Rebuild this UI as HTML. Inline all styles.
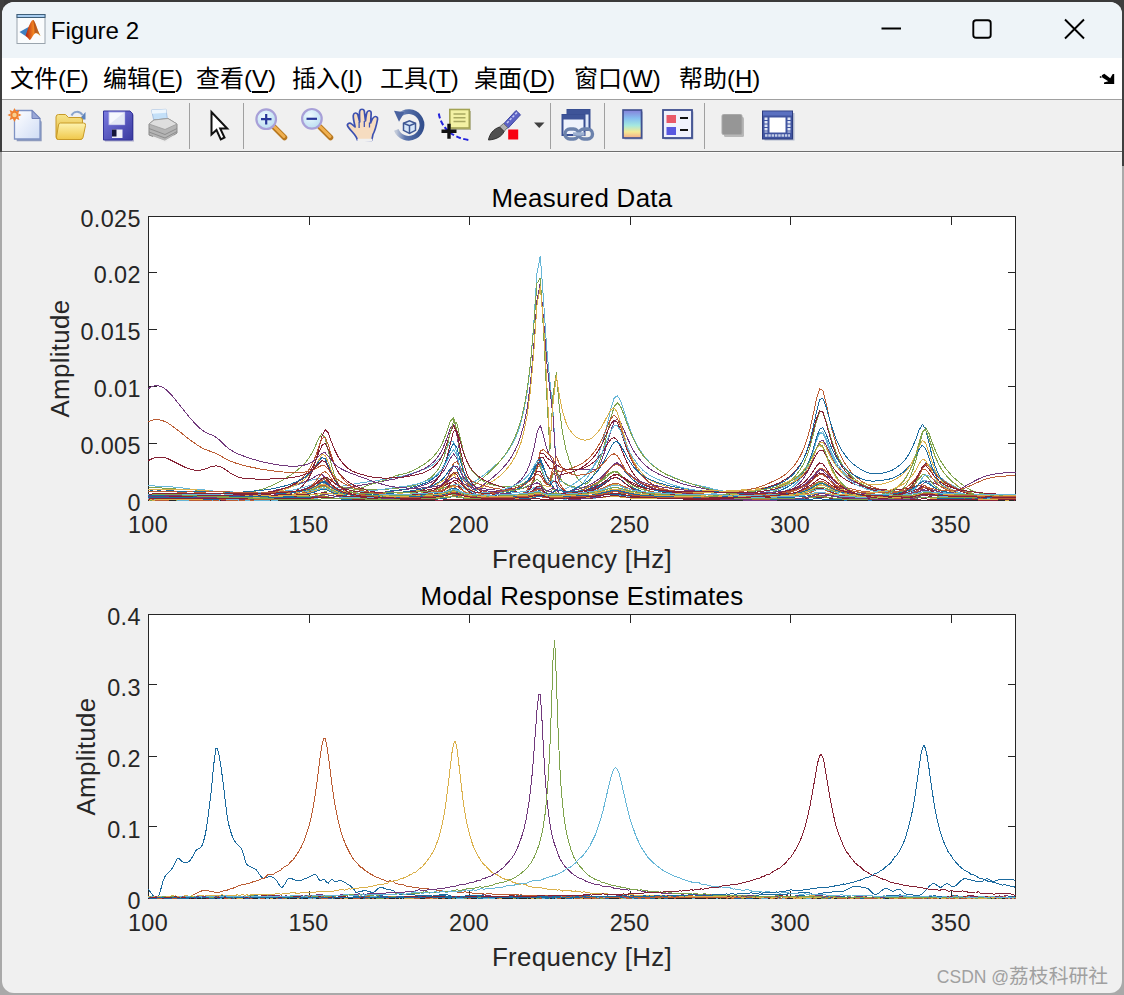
<!DOCTYPE html>
<html lang="zh-CN"><head><meta charset="utf-8"><title>Figure 2</title>
<style>
html,body{margin:0;padding:0}
body{width:1124px;height:995px;overflow:hidden;position:relative;background:#a9a9a9;font-family:"Liberation Sans","Noto Sans CJK SC",sans-serif}
#win{position:absolute;left:2px;top:2px;width:1120px;height:991px;border-radius:12px;background:#f0f0f0;overflow:hidden}
#title{position:absolute;left:0;top:0;width:100%;height:56px;background:#eef4f8}
#title .t{position:absolute;left:48.700px;top:14px;font-size:24.100px;line-height:30px;color:#000}
#menu{position:absolute;left:0;top:56px;width:100%;height:41px;background:#fff;border-bottom:1px solid #a0a0a0}
#menu span{position:absolute;top:5px;font-size:24px;line-height:32px;color:#000;white-space:nowrap}
#menu u{text-decoration:underline;text-underline-offset:4px;text-decoration-thickness:1.5px}
#tb{position:absolute;left:0;top:98px;width:100%;height:51px;background:#f0f0f0;border-bottom:1px solid #6e6e6e;box-shadow:0 1px 0 #fbfbfb}
.sep{position:absolute;top:4px;width:1px;height:44px;background:#a0a0a0}
</style></head><body>
<div style="position:absolute;left:0;top:0;width:1124px;height:20px;background:#3a3a3a"></div><div style="position:absolute;left:0;top:0;width:4px;height:152px;background:#3f3f3f"></div><div style="position:absolute;right:0;top:0;width:4px;height:166px;background:#3f3f3f"></div>
<div id="win">
 <div id="title"><div class="t">Figure 2</div>
 <svg width="1120" height="56" style="position:absolute;left:0;top:0" fill="none" stroke="#000" stroke-width="1.900">
  <path d="M879.500,26.500h19.500"/><rect x="971.300" y="18.300" width="17.400" height="17.400" rx="2.800"/><path d="M1063,17.500l19,19M1082,17.500l-19,19"/>
 </svg>
 </div>
 <div id="menu">
  <span style="left:8px">文件(<u>F</u>)</span><span style="left:101px">编辑(<u>E</u>)</span><span style="left:194px">查看(<u>V</u>)</span><span style="left:290px">插入(<u>I</u>)</span><span style="left:378px">工具(<u>T</u>)</span><span style="left:472px">桌面(<u>D</u>)</span><span style="left:572px">窗口(<u>W</u>)</span><span style="left:677px">帮助(<u>H</u>)</span>
 </div>
 <div id="tb"></div>
</div>
<svg width="1124" height="995" viewBox="0 0 1124 995" style="position:absolute;left:0;top:0">
<style>.tk{font:23.4px "Liberation Sans",sans-serif;fill:#262626;letter-spacing:.35px}.lb{font:25.9px "Liberation Sans",sans-serif;fill:#262626;letter-spacing:.32px}.ti{font:25.9px "Liberation Sans",sans-serif;fill:#000;letter-spacing:.32px}</style>
<rect x="148.5" y="216.5" width="867.0" height="284.0" fill="#fff"/><rect x="148.5" y="614.5" width="867.0" height="284.0" fill="#fff"/>
<g shape-rendering="crispEdges" fill="none"><rect x="148.5" y="216.5" width="867.0" height="284.0" fill="none" stroke="#262626" stroke-width="1"/><path d="M309.5,500.5v-8M309.5,216.5v8M469.5,500.5v-8M469.5,216.5v8M630.5,500.5v-8M630.5,216.5v8M790.5,500.5v-8M790.5,216.5v8M951.5,500.5v-8M951.5,216.5v8M148.5,500.5h8M1015.5,500.5h-8M148.5,443.5h8M1015.5,443.5h-8M148.5,386.5h8M1015.5,386.5h-8M148.5,329.5h8M1015.5,329.5h-8M148.5,272.5h8M1015.5,272.5h-8M148.5,216.5h8M1015.5,216.5h-8" stroke="#262626"/><rect x="148.5" y="614.5" width="867.0" height="284.0" fill="none" stroke="#262626" stroke-width="1"/><path d="M309.5,898.5v-8M309.5,614.5v8M469.5,898.5v-8M469.5,614.5v8M630.5,898.5v-8M630.5,614.5v8M790.5,898.5v-8M790.5,614.5v8M951.5,898.5v-8M951.5,614.5v8M148.5,898.5h8M1015.5,898.5h-8M148.5,826.5h8M1015.5,826.5h-8M148.5,756.5h8M1015.5,756.5h-8M148.5,684.5h8M1015.5,684.5h-8M148.5,614.5h8M1015.5,614.5h-8" stroke="#262626"/></g>
<clipPath id="ct"><rect x="148" y="216" width="868" height="285"/></clipPath><clipPath id="cb"><rect x="148" y="614" width="868" height="285"/></clipPath>
<g clip-path="url(#ct)" fill="none" stroke-width="1" stroke-linejoin="round" shape-rendering="crispEdges">
<path d="M148.5,498 151.7,497.8 154.9,498 158.1,498.1 161.3,498 164.6,498 167.8,497.8 171,497.7 174.2,497.7 177.4,497.3 180.6,497.4 183.8,497.2 187,497.5 190.2,497.6 193.5,497.7 196.7,497.6 199.9,497.8 203.1,497.4 206.3,497.6 209.5,497.6 212.7,497.3 215.9,497.5 219.1,497.5 222.4,497.2 225.6,497.2 228.8,496.9 232,496.7 235.2,496.5 238.4,496.3 241.6,496.1 244.8,496.1 248,495.5 251.3,495 254.5,494.5 257.7,494.4 260.9,493.8 264.1,493 267.3,492.5 270.5,491.9 273.7,491.2 276.9,490.4 280.2,489.7 283.4,488.6 286.6,487.5 289.8,486.8 293,486.2 296.2,485.5 299.4,484.2 302.6,483 305.8,481.9 309.1,480.8 312.3,479.9 315.5,479.2 318.7,478.4 321.9,478.5 325.1,481 328.3,484.9 331.5,487 334.7,487.7 338,487.3 341.2,486.4 344.4,485.7 347.6,485.3 350.8,484.7 354,484 357.2,483.4 360.4,483 363.6,482.6 366.9,482 370.1,481.4 373.3,481.2 376.5,480.7 379.7,480 382.9,479.6 386.1,479.1 389.3,478.4 392.5,477.9 395.8,477.3 399,476.5 402.2,476.2 405.4,475.4 408.6,474.6 411.8,473.5 415,472.6 418.2,471.2 421.4,470.3 424.7,469.2 427.9,467.6 431.1,465.9 434.3,463.7 437.5,460.7 440.7,457.3 443.9,453 447.1,447.5 450.3,441.7 453.6,441.1 456.8,452.5 460,468.2 463.2,479.1 466.4,483.8 469.6,484.5 472.8,482.9 476,480.7 479.2,478.4 482.5,475.9 485.7,473.5 488.9,470.8 492.1,468.3 495.3,465.4 498.5,462.3 501.7,459.1 504.9,455.4 508.1,451 511.4,445.7 514.6,439.7 517.8,432.3 521,422.4 524.2,409 527.4,390.5 530.6,363.2 533.8,323.1 537,273 540.3,256 543.5,299.6 546.7,348.2 549.9,381.2 553.1,412.5 556.3,468.8 559.5,482 562.7,481.9 565.9,483.7 569.2,485.9 572.4,487.4 575.6,487.7 578.8,486.5 582,484.2 585.2,480.4 588.4,475.8 591.6,470.4 594.8,463.9 598.1,456.1 601.3,446.5 604.5,435.3 607.7,422.3 610.9,408.5 614.1,398.3 617.3,395.6 620.5,400.7 623.7,410.1 627,420.6 630.2,430 633.4,437.8 636.6,444.5 639.8,449.9 643,454.4 646.2,458.5 649.4,462.2 652.6,465.1 655.9,467.5 659.1,469.9 662.3,472 665.5,473.7 668.7,475.3 671.9,476.6 675.1,478.1 678.3,479.3 681.5,480.7 684.8,481.9 688,482.9 691.2,483.8 694.4,484.6 697.6,485.1 700.8,485.9 704,486.6 707.2,487.5 710.4,488.2 713.7,489.1 716.9,489.8 720.1,490.6 723.3,491 726.5,491.7 729.7,492.3 732.9,493 736.1,493.7 739.3,494.1 742.6,494.5 745.8,494.9 749,495.5 752.2,496 755.4,496.6 758.6,497.1 761.8,497.6 765,497.4 768.2,497 771.5,496.1 774.7,495.2 777.9,494.2 781.1,493.2 784.3,491.5 787.5,489.6 790.7,488 793.9,485.7 797.1,482.6 800.4,478.8 803.6,474.6 806.8,469 810,460.9 813.2,451.6 816.4,441.1 819.6,432.8 822.8,431.7 826,437.6 829.3,446.5 832.5,454.4 835.7,461 838.9,466.2 842.1,470.4 845.3,473.7 848.5,476.8 851.7,479.4 854.9,481.5 858.2,483.4 861.4,485.2 864.6,486.4 867.8,487.9 871,488.7 874.2,489.3 877.4,490.3 880.6,490.6 883.8,491.1 887.1,491.9 890.3,492.7 893.5,493.5 896.7,494.2 899.9,494.8 903.1,494.6 906.3,493.6 909.5,491.2 912.7,487.2 916,481.9 919.2,474.6 922.4,466.9 925.6,463 928.8,464.2 932,467.8 935.2,471.8 938.4,475.4 941.6,478.5 944.9,480.7 948.1,483 951.3,484.6 954.5,486.3 957.7,488.3 960.9,489.9 964.1,491.3 967.3,492.7 970.5,493.7 973.8,494.3 977,495.3 980.2,495.7 983.4,496.2 986.6,496.3 989.8,496.4 993,496.7 996.2,497.1 999.4,497.2 1002.7,497.3 1005.9,497.5 1009.1,497.7 1012.3,497.2 1015.5,497" stroke="#66b6d7"/>
<path d="M148.5,498.1 151.7,498.3 154.9,498.2 158.1,498 161.3,497.8 164.6,497.8 167.8,497.8 171,498.1 174.2,498.1 177.4,498 180.6,497.9 183.8,497.8 187,497.6 190.2,497.8 193.5,497.6 196.7,497.7 199.9,497.7 203.1,497.3 206.3,497.4 209.5,497.2 212.7,497.4 215.9,497.3 219.1,497.2 222.4,497.4 225.6,497.2 228.8,497 232,496.7 235.2,496.5 238.4,496.1 241.6,495.9 244.8,495.8 248,495.6 251.3,495.5 254.5,495.1 257.7,494.4 260.9,494 264.1,493.5 267.3,492.8 270.5,491.9 273.7,490.8 276.9,489.8 280.2,489.1 283.4,488.7 286.6,487.7 289.8,486.9 293,485.9 296.2,484.8 299.4,483.7 302.6,482.4 305.8,481.2 309.1,479.7 312.3,478.3 315.5,476.3 318.7,474.6 321.9,474.3 325.1,477.7 328.3,483.3 331.5,487.9 334.7,490 338,490.2 341.2,489.6 344.4,488.6 347.6,488 350.8,487.2 354,486.7 357.2,486 360.4,485.3 363.6,484.8 366.9,484.2 370.1,483.7 373.3,482.9 376.5,482.2 379.7,481.8 382.9,481.2 386.1,480.8 389.3,480 392.5,479.4 395.8,478.8 399,477.8 402.2,477 405.4,476 408.6,475 411.8,474 415,472.7 418.2,471.6 421.4,470 424.7,468.7 427.9,466.4 431.1,464 434.3,461.2 437.5,457.4 440.7,452.5 443.9,445.9 447.1,437.8 450.3,428.2 453.6,424.1 456.8,434.9 460,454.1 463.2,469.8 466.4,480.4 469.6,486.7 472.8,489.5 476,489.5 479.2,487.6 482.5,485.4 485.7,483 488.9,480.8 492.1,478.1 495.3,475.3 498.5,472.4 501.7,469.2 504.9,465.7 508.1,461.9 511.4,457 514.6,451.3 517.8,444.4 521,435.3 524.2,423.2 527.4,406.6 530.6,382.2 533.8,346 537,300.2 540.3,282.8 543.5,319.2 546.7,361.3 549.9,389.6 553.1,417.1 556.3,468.1 559.5,479.8 562.7,469.4 565.9,469.5 569.2,469.4 572.4,469.4 575.6,469.1 578.8,469.6 582,469.7 585.2,469.8 588.4,469.7 591.6,469.8 594.8,469.6 598.1,468.8 601.3,461.3 604.5,452.2 607.7,441.7 610.9,430.6 614.1,421.9 617.3,419 620.5,422.3 623.7,429.4 627,437.2 630.2,444.1 633.4,450.4 636.6,455.5 639.8,459.4 643,462.9 646.2,465.9 649.4,468.6 652.6,470.8 655.9,472.5 659.1,474.3 662.3,475.7 665.5,477.1 668.7,478.4 671.9,479.7 675.1,481.1 678.3,482.3 681.5,483.6 684.8,484.4 688,485.2 691.2,486 694.4,486.5 697.6,487.4 700.8,487.9 704,488.5 707.2,489.2 710.4,489.6 713.7,490.4 716.9,490.9 720.1,491.6 723.3,492.1 726.5,492.4 729.7,492.7 732.9,493.5 736.1,494.1 739.3,494.5 742.6,495 745.8,495.6 749,496 752.2,496.5 755.4,496.9 758.6,497.5 761.8,497.6 765,497.7 768.2,497.7 771.5,497.2 774.7,496.4 777.9,495.8 781.1,494.5 784.3,493.1 787.5,491.7 790.7,490 793.9,487.9 797.1,485.2 800.4,482.1 803.6,478.1 806.8,472.9 810,466.6 813.2,458.4 816.4,449.2 819.6,441.6 822.8,440.3 826,445.1 829.3,452 832.5,458.5 835.7,463.7 838.9,468.3 842.1,472 845.3,475.4 848.5,478 851.7,480.3 854.9,482.2 858.2,483.5 861.4,484.8 864.6,486.1 867.8,487 871,488 874.2,488.9 877.4,489.6 880.6,490 883.8,490.2 887.1,490.4 890.3,490.4 893.5,490.7 896.7,491.2 899.9,491.7 903.1,491.9 906.3,492.6 909.5,493.1 912.7,492.9 916,491.5 919.2,488.6 922.4,484.6 925.6,481.7 928.8,481.1 932,482.3 935.2,483.8 938.4,485.1 941.6,486.6 944.9,487.7 948.1,489 951.3,490.3 954.5,491.2 957.7,492.2 960.9,493 964.1,493.9 967.3,494.7 970.5,495.1 973.8,495.8 977,496.3 980.2,496.8 983.4,497.3 986.6,497.6 989.8,497.6 993,497.3 996.2,497.4 999.4,497.6 1002.7,497.6 1005.9,497.8 1009.1,498.1 1012.3,498.3 1015.5,498" stroke="#71397c"/>
<path d="M148.5,496.7 151.7,496.8 154.9,496.9 158.1,496.8 161.3,496.8 164.6,496.7 167.8,496.7 171,496.5 174.2,496.6 177.4,496.3 180.6,496.3 183.8,496.5 187,496.5 190.2,496.4 193.5,496.4 196.7,496 199.9,495.9 203.1,496 206.3,496 209.5,495.5 212.7,495.4 215.9,495.5 219.1,495.4 222.4,495.3 225.6,494.9 228.8,494.7 232,494.5 235.2,494.5 238.4,494.1 241.6,493.7 244.8,493.3 248,492.7 251.3,491.9 254.5,491.5 257.7,490.5 260.9,489.5 264.1,488.6 267.3,487.4 270.5,486.1 273.7,484.6 276.9,482.9 280.2,481.3 283.4,479.6 286.6,477.6 289.8,475.7 293,473.5 296.2,471 299.4,468.4 302.6,465.6 305.8,462.1 309.1,457.8 312.3,452.2 315.5,445.7 318.7,438.6 321.9,433.7 325.1,437.8 328.3,451.1 331.5,465.1 334.7,475.9 338,483.6 341.2,488.3 344.4,491 347.6,491.8 350.8,491.3 354,490.3 357.2,489.3 360.4,488.3 363.6,487.1 366.9,485.7 370.1,484.5 373.3,483.7 376.5,482.7 379.7,481.7 382.9,480.8 386.1,479.5 389.3,478.1 392.5,477.1 395.8,475.7 399,474.9 402.2,474.2 405.4,473.5 408.6,472.4 411.8,471.1 415,469.4 418.2,467.9 421.4,465.9 424.7,463.8 427.9,461.5 431.1,458.7 434.3,455.5 437.5,451.7 440.7,446.6 443.9,439.7 447.1,430.8 450.3,421.3 453.6,417.8 456.8,430.7 460,452.1 463.2,469.2 466.4,479.9 469.6,484.8 472.8,485.6 476,483.8 479.2,481.1 482.5,478.2 485.7,475.5 488.9,472.6 492.1,469.5 495.3,466.2 498.5,462.8 501.7,459 504.9,454.9 508.1,450 511.4,444.6 514.6,438 517.8,430 521,419.8 524.2,406.5 527.4,388.1 530.6,362.3 533.8,325.8 537,283.3 540.3,278 543.5,330.6 546.7,394.8 549.9,450.8 553.1,393.8 556.3,372.9 559.5,409.3 562.7,433.8 565.9,449.6 569.2,460.3 572.4,468.8 575.6,475.2 578.8,480.1 582,483 585.2,484.1 588.4,482.6 591.6,478.5 594.8,472.8 598.1,465.2 601.3,456.1 604.5,444.7 607.7,431.4 610.9,417.6 614.1,406.8 617.3,402.8 620.5,406.3 623.7,414.1 627,423.4 630.2,431.7 633.4,439.1 636.6,445.5 639.8,450.9 643,455.4 646.2,459.2 649.4,462.6 652.6,465.4 655.9,467.9 659.1,470 662.3,472.2 665.5,474 668.7,475.6 671.9,477 675.1,478.2 678.3,479.5 681.5,480.7 684.8,481.6 688,482.8 691.2,483.8 694.4,484.8 697.6,485.7 700.8,486.6 704,487.6 707.2,488.6 710.4,489.3 713.7,490.2 716.9,491 720.1,491.8 723.3,492.5 726.5,493.1 729.7,493.7 732.9,494.6 736.1,495.4 739.3,495.7 742.6,496.2 745.8,496.6 749,496.9 752.2,497 755.4,496.7 758.6,496.5 761.8,495.3 765,494.4 768.2,493.5 771.5,492.6 774.7,491.1 777.9,489.6 781.1,487.6 784.3,485.9 787.5,483.7 790.7,480.8 793.9,477.7 797.1,473.8 800.4,469.4 803.6,463.7 806.8,456.4 810,446.7 813.2,434.8 816.4,421.7 819.6,412 822.8,411.7 826,420.6 829.3,432.2 832.5,442.6 835.7,451.4 838.9,458.5 842.1,464.4 845.3,468.9 848.5,472.8 851.7,476.3 854.9,479.1 858.2,481.5 861.4,483.6 864.6,485.3 867.8,487.1 871,488.7 874.2,490.1 877.4,491.1 880.6,492.4 883.8,493.4 887.1,494.3 890.3,494.9 893.5,494.6 896.7,493.5 899.9,491.8 903.1,488.6 906.3,484.3 909.5,478.5 912.7,470.5 916,459.9 919.2,446.1 922.4,432.9 925.6,427.7 928.8,433 932,442 935.2,450 938.4,457 941.6,462.5 944.9,467.4 948.1,471.3 951.3,475.1 954.5,478.2 957.7,481 960.9,483.5 964.1,486 967.3,488.1 970.5,490 973.8,491.2 977,492.4 980.2,493.3 983.4,493.8 986.6,494.2 989.8,494.6 993,494.9 996.2,495.2 999.4,495.7 1002.7,495.9 1005.9,496.2 1009.1,496.4 1012.3,496.3 1015.5,496.6" stroke="#7ea34c"/>
<path d="M148.5,498.2 151.7,498 154.9,498.2 158.1,498.3 161.3,498.1 164.6,498.2 167.8,498.1 171,498.2 174.2,497.7 177.4,497.6 180.6,497.5 183.8,497.5 187,497.6 190.2,497.6 193.5,497.9 196.7,498.3 199.9,498.1 203.1,498.2 206.3,498.2 209.5,498.2 212.7,498.1 215.9,498 219.1,498 222.4,497.8 225.6,497.7 228.8,497.5 232,497.6 235.2,497.5 238.4,497.4 241.6,497.3 244.8,497 248,496.8 251.3,496.4 254.5,496 257.7,495.6 260.9,495 264.1,494.5 267.3,493.8 270.5,493.4 273.7,492.7 276.9,491.8 280.2,491.1 283.4,490.1 286.6,488.9 289.8,487.8 293,486 296.2,484.9 299.4,482.8 302.6,481 305.8,478.3 309.1,475.1 312.3,470.7 315.5,465.9 318.7,460 321.9,454.6 325.1,455.3 328.3,462.4 331.5,471.4 334.7,478.6 338,483.9 341.2,487.8 344.4,490.8 347.6,493.1 350.8,494.7 354,496.1 357.2,497 360.4,498 363.6,498.1 366.9,498 370.1,497.4 373.3,497.4 376.5,497 379.7,496.5 382.9,496.1 386.1,495.6 389.3,495.1 392.5,494.7 395.8,494.3 399,493.7 402.2,493.1 405.4,492.5 408.6,492 411.8,491.6 415,490.9 418.2,490.3 421.4,489.7 424.7,488.7 427.9,487.8 431.1,486.6 434.3,485.4 437.5,484 440.7,482.2 443.9,480.1 447.1,477.2 450.3,474.6 453.6,474.1 456.8,478.9 460,485.9 463.2,490.8 466.4,492.9 469.6,492.7 472.8,491.6 476,490.1 479.2,488.6 482.5,487 485.7,485.2 488.9,483.6 492.1,481.5 495.3,479.5 498.5,477.1 501.7,474.6 504.9,471.2 508.1,467.4 511.4,463.1 514.6,457.6 517.8,450.9 521,442.5 524.2,430.5 527.4,413.7 530.6,389.1 533.8,351.9 537,305.2 540.3,286.6 543.5,323.8 546.7,381.4 549.9,444.4 553.1,402.7 556.3,375.7 559.5,396.6 562.7,412.2 565.9,422.4 569.2,429.1 572.4,433.6 575.6,436.7 578.8,438.7 582,439.8 585.2,440.2 588.4,439.7 591.6,438.2 594.8,435.4 598.1,431.8 601.3,427.4 604.5,421.6 607.7,415.3 610.9,409.5 614.1,407.8 617.3,412.5 620.5,422.6 623.7,434.2 627,444.8 630.2,453.7 633.4,460.6 636.6,466.4 639.8,470.7 643,474.4 646.2,477.4 649.4,479.5 652.6,481.4 655.9,482.9 659.1,484.1 662.3,485.2 665.5,486.1 668.7,487.3 671.9,488.1 675.1,488.7 678.3,488.9 681.5,489.4 684.8,489.5 688,490 691.2,489.9 694.4,490.4 697.6,490.5 700.8,490.4 704,490.6 707.2,490.5 710.4,490.9 713.7,490.7 716.9,490.8 720.1,491.1 723.3,491 726.5,491 729.7,490.9 732.9,490.8 736.1,490.5 739.3,490.2 742.6,489.8 745.8,489.4 749,489.4 752.2,488.9 755.4,488.7 758.6,488.5 761.8,488 765,487.7 768.2,487.1 771.5,486.4 774.7,485.8 777.9,485.1 781.1,484.2 784.3,483.1 787.5,481.9 790.7,480.4 793.9,478.7 797.1,476.7 800.4,473.9 803.6,470.1 806.8,465.9 810,460.7 813.2,454.4 816.4,448.6 819.6,445.3 822.8,447.8 826,455.6 829.3,464.3 832.5,471.6 835.7,477.3 838.9,481.8 842.1,485.4 845.3,488.1 848.5,490.3 851.7,492.3 854.9,494.1 858.2,495.4 861.4,496.4 864.6,497.4 867.8,497.6 871,497.5 874.2,497.1 877.4,496.3 880.6,495.2 883.8,494.3 887.1,493.2 890.3,491.7 893.5,489.7 896.7,487.3 899.9,484.3 903.1,481 906.3,476.5 909.5,471 912.7,463.8 916,453.7 919.2,442 922.4,431.6 925.6,430.1 928.8,437.6 932,447.8 935.2,457 938.4,464.2 941.6,469.6 944.9,474.1 948.1,477.5 951.3,480.4 954.5,483.3 957.7,485.9 960.9,488.3 964.1,490.2 967.3,491.5 970.5,492.5 973.8,494 977,494.7 980.2,495.1 983.4,495.3 986.6,495.9 989.8,496 993,496.4 996.2,496.5 999.4,496.9 1002.7,497.1 1005.9,496.9 1009.1,496.8 1012.3,497.2 1015.5,497.3" stroke="#dbb14c"/>
<path d="M148.5,498.9 151.7,498.8 154.9,498.8 158.1,498.7 161.3,498.5 164.6,498.4 167.8,498.7 171,498.7 174.2,498.9 177.4,498.8 180.6,499 183.8,499 187,498.9 190.2,499 193.5,498.9 196.7,498.8 199.9,498.9 203.1,499 206.3,499 209.5,498.9 212.7,498.7 215.9,499 219.1,498.4 222.4,498.5 225.6,498.5 228.8,498.3 232,497.9 235.2,498.2 238.4,498.4 241.6,498 244.8,497.8 248,497.6 251.3,497.9 254.5,497.5 257.7,497.3 260.9,496.9 264.1,496.6 267.3,496.3 270.5,495.8 273.7,495.1 276.9,494.6 280.2,494.3 283.4,493.8 286.6,493.3 289.8,492.6 293,492.2 296.2,491.3 299.4,490.5 302.6,489.6 305.8,488.6 309.1,487.2 312.3,485.9 315.5,484 318.7,482.3 321.9,481.3 325.1,483 328.3,487 331.5,491.2 334.7,493.8 338,496.1 341.2,497 344.4,497 347.6,496.9 350.8,496.6 354,496.1 357.2,495.7 360.4,495.2 363.6,495 366.9,494.5 370.1,494 373.3,493.8 376.5,493.4 379.7,492.6 382.9,492.3 386.1,491.8 389.3,491.5 392.5,491.3 395.8,490.8 399,490.6 402.2,489.9 405.4,489.6 408.6,489 411.8,488.5 415,487.7 418.2,487 421.4,485.9 424.7,484.7 427.9,483.7 431.1,482.2 434.3,480.5 437.5,478.2 440.7,474.7 443.9,470.7 447.1,464.9 450.3,458.4 453.6,454 456.8,458.4 460,468.4 463.2,477.7 466.4,484.1 469.6,488.6 472.8,491.7 476,493.9 479.2,495.6 482.5,496.4 485.7,496.5 488.9,495.9 492.1,495.1 495.3,494.2 498.5,493 501.7,491.8 504.9,490.5 508.1,488.9 511.4,487.2 514.6,485 517.8,482.8 521,479.8 524.2,475.6 527.4,470 530.6,461.6 533.8,449.1 537,432.7 540.3,425.1 543.5,435.7 546.7,448.4 549.9,456 553.1,462.2 556.3,483.7 559.5,497.1 562.7,498.1 565.9,496.8 569.2,496.4 572.4,495.8 575.6,495 578.8,494.1 582,493.3 585.2,492.1 588.4,490.4 591.6,488.4 594.8,486.3 598.1,483.7 601.3,480.3 604.5,476.4 607.7,472 610.9,467.5 614.1,463.8 617.3,462.6 620.5,464.8 623.7,468.2 627,472 630.2,475.5 633.4,478.1 636.6,480.7 639.8,482.8 643,484.4 646.2,485.9 649.4,487 652.6,488 655.9,489 659.1,489.6 662.3,490.4 665.5,491.2 668.7,491.6 671.9,492.3 675.1,492.8 678.3,493.1 681.5,493.5 684.8,493.9 688,494.3 691.2,494.8 694.4,495.1 697.6,495 700.8,495.5 704,496 707.2,496.2 710.4,496.4 713.7,496.5 716.9,496.8 720.1,497 723.3,497.1 726.5,497.2 729.7,497.9 732.9,498.3 736.1,498.4 739.3,498.3 742.6,498.9 745.8,498.8 749,498.8 752.2,498.9 755.4,499.2 758.6,499.2 761.8,498.9 765,499 768.2,498.3 771.5,497.9 774.7,497.3 777.9,497.2 781.1,496.6 784.3,495.9 787.5,495.3 790.7,494.4 793.9,493.1 797.1,492 800.4,490.6 803.6,488.3 806.8,485.8 810,482.4 813.2,478.2 816.4,473 819.6,469.7 822.8,469.3 826,472.1 829.3,476 832.5,479.3 835.7,482.5 838.9,484.9 842.1,486.6 845.3,488.1 848.5,489.4 851.7,490.6 854.9,491.6 858.2,492.4 861.4,493.2 864.6,493.6 867.8,494.3 871,494.8 874.2,495.1 877.4,495.3 880.6,495.6 883.8,495.9 887.1,496 890.3,495.9 893.5,496.2 896.7,496.4 899.9,496.7 903.1,497 906.3,496.9 909.5,496.9 912.7,496.1 916,494.8 919.2,492.6 922.4,490 925.6,488.8 928.8,488.9 932,489.9 935.2,490.6 938.4,491.6 941.6,492.4 944.9,493.4 948.1,493.9 951.3,494.5 954.5,495.1 957.7,495.6 960.9,496.3 964.1,496.6 967.3,497.2 970.5,497.5 973.8,497.7 977,497.9 980.2,498.3 983.4,498.1 986.6,498.2 989.8,498.3 993,498.1 996.2,498 999.4,498.2 1002.7,498.7 1005.9,498.9 1009.1,498.8 1012.3,498.9 1015.5,498.8" stroke="#71397c"/>
<path d="M148.5,499.8 151.7,499.9 154.9,499.9 158.1,499.6 161.3,499.9 164.6,499.9 167.8,499.8 171,499.9 174.2,499.9 177.4,499.8 180.6,499.8 183.8,499.8 187,500 190.2,499.9 193.5,499.8 196.7,500 199.9,499.8 203.1,499.7 206.3,500 209.5,500.1 212.7,500.2 215.9,500.2 219.1,499.9 222.4,500.1 225.6,500.1 228.8,500.2 232,500 235.2,499.9 238.4,500.2 241.6,499.9 244.8,500 248,500 251.3,500 254.5,500 257.7,499.9 260.9,499.7 264.1,499.3 267.3,499.1 270.5,498.8 273.7,498.1 276.9,497.5 280.2,496.9 283.4,496.3 286.6,495.3 289.8,493.9 293,492.8 296.2,491 299.4,488.7 302.6,485.9 305.8,482.3 309.1,477.4 312.3,470.9 315.5,461.5 318.7,449.4 321.9,436.5 325.1,429.5 328.3,433 331.5,442 334.7,450 338,456.5 341.2,461.4 344.4,465 347.6,468.1 350.8,470.3 354,471.8 357.2,473.2 360.4,474.2 363.6,475 366.9,476 370.1,476.8 373.3,477.2 376.5,477.6 379.7,477.8 382.9,478.1 386.1,478.1 389.3,478 392.5,477.9 395.8,478 399,477.7 402.2,477.3 405.4,476.8 408.6,476.2 411.8,475.6 415,475 418.2,474.3 421.4,473.5 424.7,472.2 427.9,470.7 431.1,468.8 434.3,466.3 437.5,462.9 440.7,458.4 443.9,452.1 447.1,443.3 450.3,432.6 453.6,425.6 456.8,432.4 460,448.3 463.2,462.5 466.4,472.4 469.6,479.4 472.8,484.2 476,487.7 479.2,490.3 482.5,492.4 485.7,494.3 488.9,495.4 492.1,496.6 495.3,497.3 498.5,497.9 501.7,498.3 504.9,498.9 508.1,499.1 511.4,499.4 514.6,498.8 517.8,498.2 521,497.2 524.2,495.2 527.4,492.1 530.6,487.1 533.8,478.1 537,464.6 540.3,453.3 543.5,453.2 546.7,457.5 549.9,460.1 553.1,463.3 556.3,473.3 559.5,475.1 562.7,474.3 565.9,473.5 569.2,472.8 572.4,471.9 575.6,470.7 578.8,469.2 582,467.3 585.2,465.2 588.4,462.6 591.6,459.6 594.8,455.7 598.1,451.1 601.3,445.3 604.5,438.5 607.7,431 610.9,423.9 614.1,420.2 617.3,422.4 620.5,430 623.7,439.9 627,449.4 630.2,457.3 633.4,463.7 636.6,468.8 639.8,473.3 643,476.7 646.2,479.4 649.4,482.1 652.6,484.4 655.9,486.4 659.1,487.9 662.3,489.1 665.5,490.1 668.7,491.5 671.9,492.7 675.1,493.7 678.3,494.4 681.5,495.2 684.8,496 688,496.5 691.2,497.2 694.4,497.6 697.6,498 700.8,498.2 704,498.4 707.2,498.5 710.4,498.4 713.7,497.9 716.9,497.5 720.1,497.2 723.3,496.7 726.5,496.1 729.7,495.5 732.9,495 736.1,494.4 739.3,493.6 742.6,493 745.8,492.3 749,491.6 752.2,491 755.4,490.5 758.6,489.6 761.8,488.7 765,488 768.2,486.9 771.5,486 774.7,484.7 777.9,483.5 781.1,481.9 784.3,480 787.5,478 790.7,475.5 793.9,472.6 797.1,468.8 800.4,464.3 803.6,459.1 806.8,451.8 810,442.6 813.2,431.2 816.4,419.1 819.6,410.8 822.8,411.9 826,422.1 829.3,434.4 832.5,445.1 835.7,454 838.9,460.9 842.1,466.6 845.3,471.1 848.5,474.8 851.7,478.1 854.9,480.9 858.2,483.1 861.4,485 864.6,486.8 867.8,488.3 871,489.5 874.2,490.5 877.4,491.2 880.6,491.9 883.8,492.5 887.1,493.3 890.3,493.8 893.5,494.7 896.7,495.2 899.9,495.4 903.1,494.9 906.3,493.4 909.5,490.7 912.7,486.8 916,481.2 919.2,474.1 922.4,466.5 925.6,463.3 928.8,465.5 932,469.7 935.2,474 938.4,477.5 941.6,480.2 944.9,482.7 948.1,484.7 951.3,486.5 954.5,488.2 957.7,489.9 960.9,491.2 964.1,492.3 967.3,493.5 970.5,494.6 973.8,495 977,495.7 980.2,496.6 983.4,497 986.6,497.2 989.8,497.3 993,497.1 996.2,497.3 999.4,497.6 1002.7,497.5 1005.9,497.7 1009.1,497.9 1012.3,498.3 1015.5,498.4" stroke="#852235"/>
<path d="M148.5,498.6 151.7,498.7 154.9,498.9 158.1,498.7 161.3,498.7 164.6,498.7 167.8,498.6 171,498.4 174.2,498.4 177.4,498.5 180.6,498.7 183.8,498.8 187,498.7 190.2,498.5 193.5,498.6 196.7,498.6 199.9,498.4 203.1,498.6 206.3,498.3 209.5,498 212.7,498.2 215.9,498.2 219.1,497.6 222.4,497.5 225.6,497.6 228.8,497.5 232,497.6 235.2,497.7 238.4,497.6 241.6,497.4 244.8,497.2 248,496.8 251.3,496.5 254.5,496.1 257.7,495.7 260.9,495.1 264.1,494.5 267.3,493.9 270.5,493 273.7,492.3 276.9,491.3 280.2,490 283.4,489 286.6,487.6 289.8,486.2 293,484.3 296.2,482.4 299.4,480.3 302.6,477.5 305.8,473.5 309.1,469.3 312.3,463.7 315.5,456.3 318.7,447.1 321.9,438.3 325.1,437 328.3,445 331.5,455.7 334.7,464.8 338,471.9 341.2,476.6 344.4,480.7 347.6,483.6 350.8,485.9 354,487.7 357.2,489.3 360.4,490.5 363.6,491.2 366.9,492 370.1,492.8 373.3,493.3 376.5,494.2 379.7,494.7 382.9,495.1 386.1,495.4 389.3,495.7 392.5,495.9 395.8,496.1 399,496.1 402.2,496.1 405.4,496 408.6,495.9 411.8,495.8 415,495.8 418.2,495.2 421.4,495 424.7,494.5 427.9,493.8 431.1,492.8 434.3,491.4 437.5,489.5 440.7,487 443.9,483.3 447.1,477.9 450.3,470.4 453.6,463.1 456.8,461.7 460,466.4 463.2,472 466.4,476.3 469.6,479.3 472.8,481.4 476,482.9 479.2,484 482.5,485.3 485.7,486.3 488.9,487 492.1,487.8 495.3,488.4 498.5,488.7 501.7,489.3 504.9,489.5 508.1,490.1 511.4,490.6 514.6,491.5 517.8,492.4 521,493.5 524.2,493.8 527.4,493 530.6,489.1 533.8,480.1 537,465.3 540.3,451.2 543.5,449.4 546.7,452.5 549.9,455 553.1,458.3 556.3,469.8 559.5,471.5 562.7,470.8 565.9,469.7 569.2,469 572.4,467.9 575.6,466.6 578.8,465.2 582,463.5 585.2,461.2 588.4,458.6 591.6,455.1 594.8,451.3 598.1,446.1 601.3,440.5 604.5,433.5 607.7,425.3 610.9,418.6 614.1,415.1 617.3,418 620.5,426.5 623.7,436.9 627,447.1 630.2,455.8 633.4,462.7 636.6,468.5 639.8,473 643,476.8 646.2,480.1 649.4,482.7 652.6,484.9 655.9,486.8 659.1,488.5 662.3,489.9 665.5,491.1 668.7,492.3 671.9,493.4 675.1,494.2 678.3,495.2 681.5,496 684.8,496.8 688,497.1 691.2,497.5 694.4,497.8 697.6,498 700.8,497.8 704,497.7 707.2,497.5 710.4,496.9 713.7,496.6 716.9,496 720.1,495.6 723.3,494.9 726.5,494.4 729.7,493.8 732.9,493.3 736.1,492.5 739.3,491.7 742.6,491.2 745.8,490.5 749,489.4 752.2,488.7 755.4,488.2 758.6,487.2 761.8,486.2 765,484.9 768.2,483.6 771.5,482 774.7,480.7 777.9,479.1 781.1,477.3 784.3,475.3 787.5,472.5 790.7,469.5 793.9,465.9 797.1,461.5 800.4,455.9 803.6,449 806.8,440 810,428.6 813.2,414.5 816.4,399.4 819.6,388.7 822.8,390.3 826,402.8 829.3,417.9 832.5,431.5 835.7,442.7 838.9,451.6 842.1,458.3 845.3,463.9 848.5,468.4 851.7,472.6 854.9,475.7 858.2,478.5 861.4,481.1 864.6,483.1 867.8,484.9 871,486.2 874.2,487.5 877.4,488.6 880.6,489.3 883.8,489.9 887.1,490.7 890.3,491.5 893.5,492.4 896.7,492.6 899.9,493.4 903.1,493.9 906.3,493.3 909.5,491.5 912.7,487.7 916,482.8 919.2,475.6 922.4,468.3 925.6,464.6 928.8,466.1 932,469.8 935.2,473.5 938.4,476.5 941.6,479.4 944.9,481.6 948.1,483.5 951.3,485.6 954.5,487.1 957.7,488.7 960.9,490.3 964.1,491.7 967.3,492.7 970.5,493.8 973.8,494.4 977,494.9 980.2,495.3 983.4,495.8 986.6,496.3 989.8,496.4 993,496.6 996.2,496.9 999.4,497 1002.7,497.1 1005.9,497.2 1009.1,497.1 1012.3,497.4 1015.5,497.6" stroke="#bb5d34"/>
<path d="M148.5,499.9 151.7,500.1 154.9,500.1 158.1,500 161.3,499.9 164.6,500.1 167.8,499.9 171,499.8 174.2,499.9 177.4,500.1 180.6,499.7 183.8,500 187,499.8 190.2,499.9 193.5,499.9 196.7,499.8 199.9,500 203.1,500 206.3,499.9 209.5,499.7 212.7,499.6 215.9,499.6 219.1,499.4 222.4,499.4 225.6,499.7 228.8,499.9 232,499.8 235.2,499.8 238.4,499.8 241.6,499.7 244.8,499.8 248,499.8 251.3,499.6 254.5,499.8 257.7,499.6 260.9,499.7 264.1,499.7 267.3,499.7 270.5,499.7 273.7,499.6 276.9,499.3 280.2,499.3 283.4,499.2 286.6,499.1 289.8,498.3 293,497.7 296.2,497 299.4,496.7 302.6,495.7 305.8,495 309.1,493.9 312.3,492.2 315.5,489.5 318.7,485.4 321.9,481.1 325.1,478.4 328.3,479 331.5,481.1 334.7,483.2 338,485.1 341.2,486.4 344.4,487.6 347.6,488.1 350.8,488.6 354,489.2 357.2,489.5 360.4,489.8 363.6,489.9 366.9,489.7 370.1,489.5 373.3,489.8 376.5,489.9 379.7,489.9 382.9,489.9 386.1,489.5 389.3,488.9 392.5,488.6 395.8,488.3 399,488 402.2,487.6 405.4,487.2 408.6,486.9 411.8,486 415,485.3 418.2,484.1 421.4,482.7 424.7,481.1 427.9,479.5 431.1,477.3 434.3,474 437.5,470.3 440.7,465 443.9,457.1 447.1,446.6 450.3,432.9 453.6,420.8 456.8,423.1 460,437.1 463.2,450.3 466.4,460 469.6,467.1 472.8,471.8 476,475.2 479.2,478.3 482.5,480.4 485.7,482.3 488.9,483.8 492.1,484.8 495.3,485.3 498.5,486.1 501.7,486.5 504.9,486.9 508.1,487 511.4,486.9 514.6,486.5 517.8,485.6 521,484.6 524.2,482.9 527.4,480.5 530.6,477.1 533.8,472.3 537,466.8 540.3,466.6 543.5,475 546.7,482.8 549.9,484.7 553.1,474.3 556.3,470 559.5,477.3 562.7,482 565.9,484.3 569.2,485.7 572.4,486.6 575.6,487.2 578.8,487.7 582,487.6 585.2,487.3 588.4,486.8 591.6,486 594.8,484.7 598.1,483.3 601.3,481.4 604.5,479 607.7,476.2 610.9,473.4 614.1,471.9 617.3,472.5 620.5,474.8 623.7,477.8 627,480.9 630.2,483.3 633.4,485.6 636.6,487.3 639.8,488.5 643,489.5 646.2,490.6 649.4,491.4 652.6,491.8 655.9,492.7 659.1,493.4 662.3,493.8 665.5,494 668.7,494.5 671.9,494.6 675.1,494.8 678.3,494.8 681.5,494.8 684.8,494.7 688,495.2 691.2,495.5 694.4,495.8 697.6,496 700.8,496 704,496.2 707.2,496.1 710.4,496.1 713.7,496 716.9,495.9 720.1,496.1 723.3,496.4 726.5,496.6 729.7,496.6 732.9,496.8 736.1,496.7 739.3,496.6 742.6,496.6 745.8,496.8 749,496.6 752.2,496.5 755.4,496.7 758.6,496.5 761.8,496.5 765,496.5 768.2,496.3 771.5,496.4 774.7,495.9 777.9,495.9 781.1,495.6 784.3,495.7 787.5,495.4 790.7,495 793.9,494.3 797.1,493.7 800.4,493 803.6,492.4 806.8,491.2 810,489.6 813.2,487.4 816.4,485 819.6,483.5 822.8,483.6 826,485.2 829.3,487.1 832.5,489.1 835.7,490.5 838.9,491.6 842.1,492.4 845.3,493 848.5,493.9 851.7,494.4 854.9,494.9 858.2,495 861.4,495.6 864.6,495.6 867.8,495.8 871,495.8 874.2,495.8 877.4,495.6 880.6,495.5 883.8,495.3 887.1,494.9 890.3,494.4 893.5,493.8 896.7,493 899.9,492.1 903.1,491 906.3,489.4 909.5,487.6 912.7,485.2 916,481.8 919.2,478.2 922.4,474.9 925.6,474.9 928.8,478.4 932,482.6 935.2,486.1 938.4,488.4 941.6,490.6 944.9,492.4 948.1,493.6 951.3,494.8 954.5,495.6 957.7,496.6 960.9,497.1 964.1,497.6 967.3,498.1 970.5,498.4 973.8,498.8 977,498.8 980.2,498.5 983.4,498.7 986.6,498.7 989.8,499 993,499.2 996.2,499.4 999.4,499.7 1002.7,499.7 1005.9,499.7 1009.1,499.5 1012.3,499.7 1015.5,499.7" stroke="#7ea34c"/>
<path d="M148.5,499.1 151.7,499.1 154.9,498.9 158.1,498.7 161.3,498.8 164.6,498.6 167.8,498.6 171,498.5 174.2,498.4 177.4,498.3 180.6,497.8 183.8,497.9 187,497.8 190.2,497.7 193.5,497.7 196.7,497.9 199.9,497.8 203.1,497.6 206.3,497.4 209.5,497.2 212.7,496.8 215.9,496.7 219.1,496.2 222.4,496.3 225.6,496.1 228.8,496 232,496 235.2,496 238.4,495.9 241.6,495.6 244.8,495.3 248,495 251.3,494.4 254.5,494 257.7,493.7 260.9,493.5 264.1,492.6 267.3,492.1 270.5,491.5 273.7,491.2 276.9,490.5 280.2,489.5 283.4,488.4 286.6,487.6 289.8,486.3 293,484.8 296.2,483.2 299.4,480.9 302.6,479 305.8,476.1 309.1,472.4 312.3,467.5 315.5,461.4 318.7,453.1 321.9,445.5 325.1,443.2 328.3,449.2 331.5,458.2 334.7,465.7 338,471.5 341.2,475.4 344.4,478.7 347.6,481.4 350.8,483.5 354,485.3 357.2,486.6 360.4,488.1 363.6,489 366.9,490.2 370.1,491 373.3,491.7 376.5,492.4 379.7,493.2 382.9,493.7 386.1,494.1 389.3,494.6 392.5,495 395.8,495.8 399,495.7 402.2,495.5 405.4,494.9 408.6,494.5 411.8,493.9 415,493 418.2,492 421.4,490.8 424.7,489.1 427.9,487.3 431.1,485.2 434.3,482.4 437.5,479 440.7,473.9 443.9,467 447.1,457 450.3,443.8 453.6,431.2 456.8,430.2 460,440.7 463.2,451.9 466.4,460.4 469.6,466.3 472.8,470.8 476,474 479.2,476.8 482.5,479 485.7,481 488.9,482.4 492.1,483.6 495.3,484.8 498.5,485.9 501.7,486.9 504.9,488.1 508.1,489 511.4,490.2 514.6,491.3 517.8,492.4 521,493.3 524.2,494 527.4,493 530.6,488.8 533.8,480.8 537,468.1 540.3,457.5 543.5,458 546.7,463.7 549.9,468.4 553.1,469.1 556.3,464.7 559.5,466.6 562.7,468.4 565.9,469.3 569.2,470 572.4,469.9 575.6,469.8 578.8,469.4 582,468.6 585.2,467.5 588.4,465.9 591.6,463.8 594.8,461.1 598.1,457.7 601.3,453.8 604.5,449 607.7,443.8 610.9,439.1 614.1,437.5 617.3,440.4 620.5,447 623.7,454.9 627,462.4 630.2,468.6 633.4,473.9 636.6,477.8 639.8,480.8 643,483.1 646.2,485.5 649.4,487.4 652.6,488.8 655.9,490.3 659.1,491.4 662.3,492.1 665.5,493 668.7,493.8 671.9,494.3 675.1,494.9 678.3,495.4 681.5,495.6 684.8,495.9 688,496.3 691.2,496.3 694.4,496.6 697.6,497 700.8,497.2 704,497.3 707.2,497.2 710.4,497 713.7,496.7 716.9,496.6 720.1,496.2 723.3,495.9 726.5,495.9 729.7,495.4 732.9,495.1 736.1,494.8 739.3,494.4 742.6,493.7 745.8,493.7 749,493.2 752.2,492.7 755.4,492.4 758.6,491.8 761.8,491.3 765,490.9 768.2,490.3 771.5,489.6 774.7,489 777.9,487.9 781.1,487 784.3,486.1 787.5,484.8 790.7,483.5 793.9,482.1 797.1,480.4 800.4,477.9 803.6,475.1 806.8,471.7 810,466.9 813.2,460.7 816.4,454.5 819.6,450.1 822.8,450.3 826,455.1 829.3,461.1 832.5,466.6 835.7,471.1 838.9,474.4 842.1,477.3 845.3,479.4 848.5,481.3 851.7,483.1 854.9,484.4 858.2,485.5 861.4,486.1 864.6,486.9 867.8,487.4 871,488.1 874.2,488.8 877.4,489.3 880.6,489.8 883.8,489.9 887.1,490 890.3,490 893.5,489.7 896.7,489.5 899.9,489.2 903.1,489 906.3,488.6 909.5,488.1 912.7,487.4 916,486.7 919.2,485.7 922.4,486.2 925.6,487.8 928.8,490.7 932,493.1 935.2,495 938.4,496.2 941.6,497.1 944.9,497.5 948.1,498 951.3,498.6 954.5,498.6 957.7,498.5 960.9,498.4 964.1,498.5 967.3,498.5 970.5,498.7 973.8,498.8 977,499 980.2,499.3 983.4,499.3 986.6,499.3 989.8,499.4 993,499.4 996.2,499.5 999.4,499.6 1002.7,499.7 1005.9,499.7 1009.1,499.7 1012.3,499.5 1015.5,499.7" stroke="#852235"/>
<path d="M148.5,495.8 151.7,495.7 154.9,495.7 158.1,495.7 161.3,495.6 164.6,495.5 167.8,495.3 171,495.1 174.2,495.1 177.4,494.7 180.6,494.8 183.8,494.7 187,494.6 190.2,494.5 193.5,494.3 196.7,494.4 199.9,494.2 203.1,494.2 206.3,494.1 209.5,494 212.7,493.8 215.9,493.7 219.1,493.6 222.4,493.3 225.6,493.2 228.8,493.3 232,493 235.2,493 238.4,492.4 241.6,492.2 244.8,491.8 248,491.6 251.3,491.2 254.5,491 257.7,490.9 260.9,490.4 264.1,490 267.3,489.6 270.5,489.1 273.7,488.5 276.9,487.7 280.2,486.9 283.4,486.4 286.6,485.3 289.8,484.4 293,483.1 296.2,481.9 299.4,480.1 302.6,478.8 305.8,476.8 309.1,473.7 312.3,470.4 315.5,466.2 318.7,461.7 321.9,457.5 325.1,458.6 328.3,465.5 331.5,473.7 334.7,480 338,484.8 341.2,488.1 344.4,491.1 347.6,492.7 350.8,494.2 354,495.3 357.2,495.8 360.4,495.7 363.6,495.4 366.9,495.1 370.1,494.4 373.3,493.8 376.5,493.5 379.7,493.2 382.9,492.6 386.1,492.3 389.3,491.3 392.5,490.5 395.8,490.4 399,490 402.2,489.6 405.4,489.1 408.6,488.4 411.8,487.5 415,486.5 418.2,485.6 421.4,484.4 424.7,483.3 427.9,482.1 431.1,480 434.3,477.9 437.5,475 440.7,471 443.9,465.6 447.1,458.3 450.3,449.7 453.6,443.3 456.8,447.5 460,459.5 463.2,470.3 466.4,477.9 469.6,483.5 472.8,487.4 476,490.3 479.2,492.7 482.5,494.4 485.7,495.8 488.9,497 492.1,497.3 495.3,497.2 498.5,496.5 501.7,495.7 504.9,494.5 508.1,493.5 511.4,492 514.6,490.4 517.8,488.5 521,486.3 524.2,483.8 527.4,480.8 530.6,476 533.8,469.1 537,460.7 540.3,458.7 543.5,466.7 546.7,475.6 549.9,481.3 553.1,486.6 556.3,493.6 559.5,493.8 562.7,493 565.9,492.2 569.2,491.3 572.4,489.9 575.6,488.5 578.8,486.8 582,484.7 585.2,482.8 588.4,480.5 591.6,477.9 594.8,474.3 598.1,470.4 601.3,465.8 604.5,459.9 607.7,453.5 610.9,446.9 614.1,442.2 617.3,441.6 620.5,445.1 623.7,450.8 627,457.1 630.2,462.1 633.4,466.7 636.6,470.2 639.8,473.2 643,475.5 646.2,477.6 649.4,479.4 652.6,480.6 655.9,481.9 659.1,483.1 662.3,483.8 665.5,484.9 668.7,485.6 671.9,486.4 675.1,487.1 678.3,487.4 681.5,488.2 684.8,488.7 688,488.9 691.2,489.5 694.4,490 697.6,490.5 700.8,490.9 704,491.2 707.2,491.5 710.4,491.8 713.7,492 716.9,491.9 720.1,492.1 723.3,492.5 726.5,492.8 729.7,492.9 732.9,493.2 736.1,493.5 739.3,493.4 742.6,493.3 745.8,493 749,492.5 752.2,491.9 755.4,491.1 758.6,490.3 761.8,489.7 765,488.8 768.2,487.9 771.5,486.9 774.7,485.8 777.9,484.5 781.1,483.1 784.3,481.3 787.5,479.1 790.7,476.6 793.9,473.7 797.1,469.7 800.4,465 803.6,459.1 806.8,451.1 810,440.6 813.2,427.3 816.4,412.1 819.6,400 822.8,398.1 826,406.5 829.3,418.3 832.5,429.1 835.7,438.1 838.9,445 842.1,450.9 845.3,455.5 848.5,459.5 851.7,462.8 854.9,465.4 858.2,467.7 861.4,469.8 864.6,471.4 867.8,472.8 871,473.2 874.2,473.5 877.4,473.4 880.6,473.3 883.8,472.9 887.1,472.1 890.3,471 893.5,469.5 896.7,467.4 899.9,465 903.1,462 906.3,458.2 909.5,453.3 912.7,446.7 916,438.8 919.2,429.8 922.4,424.3 925.6,429.2 928.8,442.2 932,455.7 935.2,466.4 938.4,474.1 941.6,479.6 944.9,483.9 948.1,487.5 951.3,489.9 954.5,492 957.7,493.9 960.9,495.4 964.1,496.6 967.3,497.4 970.5,497.9 973.8,498.5 977,498.6 980.2,499 983.4,499.2 986.6,499.4 989.8,499.6 993,499.5 996.2,499.7 999.4,499.3 1002.7,499.6 1005.9,499.5 1009.1,499.7 1012.3,499.6 1015.5,499.5" stroke="#1b6a9f"/>
<path d="M148.5,494.5 151.7,494.3 154.9,494.2 158.1,494.3 161.3,494.6 164.6,494.6 167.8,494.6 171,494.5 174.2,494.5 177.4,494.7 180.6,494.6 183.8,494.5 187,494.7 190.2,494.6 193.5,494.8 196.7,494.7 199.9,494.7 203.1,494.3 206.3,494.6 209.5,494.8 212.7,495 215.9,494.8 219.1,494.8 222.4,495.2 225.6,494.9 228.8,494.8 232,494.8 235.2,495 238.4,494.7 241.6,494.7 244.8,494.7 248,494.7 251.3,494.7 254.5,494.5 257.7,494.3 260.9,494.1 264.1,493.8 267.3,493.6 270.5,493.1 273.7,492.6 276.9,492.5 280.2,491.8 283.4,491.3 286.6,490.6 289.8,490.3 293,490 296.2,489.3 299.4,488.5 302.6,487.6 305.8,486.7 309.1,485.7 312.3,484.6 315.5,483.3 318.7,482.2 321.9,482.1 325.1,484.3 328.3,488.3 331.5,491.7 334.7,493.6 338,494.5 341.2,494.2 344.4,494.2 347.6,493.4 350.8,492.8 354,492.6 357.2,492.1 360.4,491.7 363.6,491.1 366.9,491.1 370.1,490.7 373.3,490.2 376.5,490.1 379.7,489.8 382.9,489.5 386.1,488.7 389.3,488.3 392.5,487.9 395.8,487.3 399,487 402.2,486.3 405.4,486.2 408.6,485.8 411.8,485.1 415,484.4 418.2,483.6 421.4,482.5 424.7,481.5 427.9,480.3 431.1,478.7 434.3,476.6 437.5,474 440.7,470.9 443.9,466.5 447.1,460.8 450.3,453.9 453.6,449.8 456.8,455 460,466.8 463.2,476.4 466.4,483.6 469.6,488.7 472.8,492 476,494.6 479.2,495.5 482.5,495.9 485.7,495.3 488.9,494.5 492.1,493.2 495.3,491.9 498.5,491.2 501.7,490.2 504.9,488.9 508.1,487.8 511.4,486.7 514.6,485.4 517.8,483.7 521,481.7 524.2,479.3 527.4,476.2 530.6,471.9 533.8,466.6 537,461.5 540.3,463.6 543.5,474 546.7,482.1 549.9,484.1 553.1,480.2 556.3,483.7 559.5,489.2 562.7,490.2 565.9,488.6 569.2,486.8 572.4,484.8 575.6,482.7 578.8,480.6 582,477.9 585.2,475.4 588.4,472.2 591.6,468.8 594.8,464.8 598.1,459.7 601.3,454.3 604.5,446.8 607.7,438.6 610.9,430.7 614.1,425.9 617.3,425.7 620.5,430.7 623.7,438.4 627,446.3 630.2,453 633.4,458.3 636.6,463 639.8,467 643,470.3 646.2,472.8 649.4,475.2 652.6,476.9 655.9,478.6 659.1,479.8 662.3,481.2 665.5,482.2 668.7,483.6 671.9,484.7 675.1,485.7 678.3,486.4 681.5,487.4 684.8,488.2 688,488.8 691.2,489.5 694.4,489.9 697.6,490.7 700.8,491.1 704,491.7 707.2,492.3 710.4,492.8 713.7,493.4 716.9,494 720.1,494.5 723.3,494.9 726.5,495.5 729.7,495.8 732.9,496 736.1,495.7 739.3,495.6 742.6,495.5 745.8,495 749,494.6 752.2,494 755.4,493.7 758.6,493.5 761.8,492.9 765,492.4 768.2,491.4 771.5,490.8 774.7,490.1 777.9,489.1 781.1,488 784.3,486.7 787.5,485.1 790.7,483.3 793.9,481.2 797.1,478.5 800.4,475.1 803.6,471.1 806.8,465.6 810,458.5 813.2,449.8 816.4,440.1 819.6,433.2 822.8,433.1 826,440 829.3,448.9 832.5,457.2 835.7,463.8 838.9,468.9 842.1,472.9 845.3,476.4 848.5,479.2 851.7,481.8 854.9,483.9 858.2,485.7 861.4,486.8 864.6,488.4 867.8,489.4 871,490.4 874.2,491.2 877.4,491.8 880.6,492.5 883.8,492.7 887.1,493.6 890.3,493.9 893.5,494.2 896.7,494.7 899.9,495.3 903.1,495.6 906.3,495.2 909.5,494.2 912.7,492 916,488.3 919.2,483.2 922.4,477.7 925.6,474.9 928.8,475.7 932,478 935.2,480.6 938.4,482.8 941.6,484.6 944.9,486.4 948.1,488 951.3,489.3 954.5,490.6 957.7,491.8 960.9,492.9 964.1,493.8 967.3,494.5 970.5,495.2 973.8,495.9 977,496.3 980.2,496.6 983.4,496.8 986.6,496.7 989.8,496.7 993,496.9 996.2,496.6 999.4,496.9 1002.7,497.1 1005.9,497.4 1009.1,497.5 1012.3,497.5 1015.5,497.1" stroke="#66b6d7"/>
<path d="M148.5,498.9 151.7,499 154.9,499.2 158.1,499.2 161.3,499.6 164.6,499.4 167.8,499.3 171,499.1 174.2,499.4 177.4,499.6 180.6,499.6 183.8,499.6 187,499.6 190.2,499.6 193.5,499.6 196.7,499.7 199.9,499.8 203.1,499.9 206.3,499.7 209.5,499.8 212.7,499.7 215.9,499.7 219.1,499.8 222.4,499.8 225.6,499.7 228.8,499.5 232,499.3 235.2,499.2 238.4,499.4 241.6,499.5 244.8,499.4 248,499.3 251.3,498.9 254.5,498.6 257.7,498.4 260.9,498.2 264.1,497.8 267.3,497.5 270.5,497.4 273.7,497.5 276.9,497.4 280.2,496.7 283.4,496.2 286.6,495.5 289.8,494.9 293,494.3 296.2,493.5 299.4,492.3 302.6,491.2 305.8,489.6 309.1,487.9 312.3,485.2 315.5,481.7 318.7,477.3 321.9,472.9 325.1,471.5 328.3,474.3 331.5,478.9 334.7,482.8 338,485.7 341.2,488.3 344.4,489.9 347.6,491.4 350.8,492.3 354,493.2 357.2,493.9 360.4,494.4 363.6,494.8 366.9,495.2 370.1,495.8 373.3,496.1 376.5,496.3 379.7,496.7 382.9,496.9 386.1,497.2 389.3,497.3 392.5,497.6 395.8,497.8 399,497.9 402.2,498.1 405.4,498.1 408.6,498 411.8,497.6 415,497.3 418.2,496.8 421.4,496.3 424.7,495.4 427.9,494.7 431.1,493.7 434.3,492.5 437.5,491.2 440.7,489.3 443.9,486.3 447.1,482.5 450.3,477.5 453.6,472.6 456.8,472.3 460,476.2 463.2,480.4 466.4,483.6 469.6,485.7 472.8,487.7 476,488.8 479.2,489.8 482.5,490.9 485.7,491.8 488.9,492.5 492.1,493.2 495.3,493.9 498.5,494.6 501.7,495.2 504.9,495.9 508.1,496.2 511.4,497 514.6,496.9 517.8,496.1 521,494.5 524.2,492.6 527.4,489.5 530.6,485.1 533.8,478.1 537,469 540.3,463.6 543.5,468.2 546.7,475.7 549.9,479.1 553.1,467.3 556.3,456.8 559.5,463.8 562.7,468.5 565.9,471.4 569.2,473.2 572.4,474.3 575.6,475.1 578.8,475.1 582,474.9 585.2,474.4 588.4,473.6 591.6,472.3 594.8,470.6 598.1,468.4 601.3,465.4 604.5,462.3 607.7,458.4 610.9,455.1 614.1,453.7 617.3,455.7 620.5,460.9 623.7,466.9 627,472.4 630.2,476.9 633.4,480.4 636.6,483.7 639.8,486.1 643,488.1 646.2,489.7 649.4,490.8 652.6,491.6 655.9,493 659.1,493.9 662.3,494.5 665.5,495.1 668.7,495.8 671.9,496.1 675.1,496.7 678.3,497 681.5,497.4 684.8,497.5 688,497.6 691.2,498 694.4,498.4 697.6,498.6 700.8,498.8 704,499.1 707.2,499.3 710.4,499.5 713.7,499.4 716.9,499.4 720.1,499.2 723.3,499.3 726.5,499.2 729.7,499.3 732.9,498.9 736.1,498.8 739.3,498.7 742.6,498.5 745.8,498 749,497.5 752.2,497.5 755.4,497.1 758.6,496.7 761.8,496.6 765,496.3 768.2,496.2 771.5,495.8 774.7,495.4 777.9,494.9 781.1,494.4 784.3,493.8 787.5,493 790.7,492.2 793.9,491.1 797.1,489.8 800.4,488.2 803.6,486.1 806.8,483.8 810,480.5 813.2,476.6 816.4,472 819.6,468.8 822.8,468.6 826,471.3 829.3,475.2 832.5,478.3 835.7,481.1 838.9,483.5 842.1,485.5 845.3,487 848.5,488.1 851.7,489 854.9,489.7 858.2,490.6 861.4,491 864.6,491.5 867.8,491.8 871,492.1 874.2,492.3 877.4,492.5 880.6,492.4 883.8,492.3 887.1,492.2 890.3,492.1 893.5,491.8 896.7,491.3 899.9,490.9 903.1,490.5 906.3,489.9 909.5,488.8 912.7,488.1 916,486.8 919.2,485.3 922.4,484.7 925.6,485.9 928.8,488.3 932,490.9 935.2,493 938.4,494.5 941.6,495.4 944.9,496.3 948.1,497.1 951.3,497.4 954.5,497.5 957.7,497.8 960.9,497.9 964.1,498 967.3,498.3 970.5,498.6 973.8,499.1 977,499.2 980.2,499.1 983.4,499.1 986.6,499.3 989.8,499.4 993,499.3 996.2,499.6 999.4,499.4 1002.7,499.6 1005.9,499.8 1009.1,499.5 1012.3,499.4 1015.5,499.4" stroke="#bb5d34"/>
<path d="M148.5,498.6 151.7,498.5 154.9,498.5 158.1,498.8 161.3,499.1 164.6,499.1 167.8,499.4 171,499.5 174.2,499.5 177.4,499.6 180.6,499.6 183.8,499.5 187,499.4 190.2,499.7 193.5,499.7 196.7,499.8 199.9,499.7 203.1,499.8 206.3,499.9 209.5,499.4 212.7,499.4 215.9,499.5 219.1,499.6 222.4,499.7 225.6,500 228.8,500 232,500.1 235.2,500 238.4,499.9 241.6,499.7 244.8,499.9 248,499.6 251.3,499.8 254.5,499.8 257.7,499.8 260.9,499.4 264.1,499.3 267.3,499 270.5,499.2 273.7,499.1 276.9,498.9 280.2,498.7 283.4,498.3 286.6,498 289.8,497.4 293,496.9 296.2,496.1 299.4,495.3 302.6,494.7 305.8,493.4 309.1,491.7 312.3,489.4 315.5,486.5 318.7,482.8 321.9,478.8 325.1,476.9 328.3,478.1 331.5,481 334.7,483.5 338,485.4 341.2,487.3 344.4,488.8 347.6,489.6 350.8,490.5 354,491.2 357.2,491.5 360.4,492 363.6,492 366.9,492.1 370.1,492.2 373.3,492.6 376.5,492.7 379.7,492.8 382.9,492.7 386.1,492.8 389.3,492.7 392.5,492.6 395.8,492.6 399,492.5 402.2,492.2 405.4,492.1 408.6,491.8 411.8,491.8 415,491.3 418.2,491.3 421.4,490.8 424.7,490.4 427.9,489.8 431.1,489.3 434.3,488.5 437.5,487.8 440.7,486.8 443.9,485.8 447.1,484.3 450.3,482.5 453.6,481.7 456.8,483.9 460,487.6 463.2,490.5 466.4,492.4 469.6,493.6 472.8,494.3 476,494.2 479.2,493.8 482.5,493.2 485.7,492.9 488.9,492.3 492.1,492.1 495.3,491.4 498.5,490.8 501.7,490.4 504.9,490 508.1,489.3 511.4,488.7 514.6,488.1 517.8,487.1 521,486 524.2,484.5 527.4,482.7 530.6,480 533.8,476.1 537,471.6 540.3,471.7 543.5,477.9 546.7,483.8 549.9,485.7 553.1,481.7 556.3,481.5 559.5,486.5 562.7,489.6 565.9,491.5 569.2,492.6 572.4,493.5 575.6,493.6 578.8,493.3 582,492.6 585.2,491.8 588.4,490.8 591.6,489.8 594.8,488.4 598.1,486.6 601.3,484.8 604.5,482.2 607.7,479.3 610.9,476.5 614.1,474.7 617.3,474 620.5,475.1 623.7,477.4 627,479.5 630.2,481.6 633.4,483.4 636.6,484.8 639.8,486 643,486.9 646.2,487.8 649.4,488.8 652.6,489.5 655.9,490.2 659.1,490.4 662.3,490.8 665.5,491.4 668.7,491.9 671.9,492.1 675.1,492.3 678.3,492.2 681.5,492.5 684.8,492.9 688,493.3 691.2,493.8 694.4,493.9 697.6,494 700.8,494.3 704,494.3 707.2,494.5 710.4,494.4 713.7,494.7 716.9,494.7 720.1,494.7 723.3,494.7 726.5,494.8 729.7,494.4 732.9,494.2 736.1,494.4 739.3,494.6 742.6,494.3 745.8,494.6 749,494.6 752.2,494.4 755.4,494.3 758.6,494.1 761.8,493.8 765,493.6 768.2,493.1 771.5,493.3 774.7,493.2 777.9,493.1 781.1,492.7 784.3,491.8 787.5,491.1 790.7,490.6 793.9,489.7 797.1,488.8 800.4,488 803.6,486.6 806.8,484.4 810,482 813.2,478.8 816.4,475 819.6,473 822.8,473.4 826,476.5 829.3,480.2 832.5,483.5 835.7,486.5 838.9,488.5 842.1,490.3 845.3,491.5 848.5,492.2 851.7,492.7 854.9,493.5 858.2,493.9 861.4,494.5 864.6,494.8 867.8,495.4 871,495.6 874.2,495.7 877.4,495.8 880.6,495.6 883.8,495.5 887.1,495.4 890.3,495.2 893.5,495 896.7,494.1 899.9,493.8 903.1,493.2 906.3,492.8 909.5,492 912.7,490.9 916,489.7 919.2,488.5 922.4,487.4 925.6,487.8 928.8,489.5 932,491.3 935.2,492.7 938.4,493.5 941.6,494.2 944.9,494.7 948.1,495.2 951.3,495.7 954.5,495.9 957.7,496.1 960.9,496.3 964.1,496.2 967.3,496.4 970.5,496.2 973.8,496 977,496.2 980.2,496 983.4,496.3 986.6,496 989.8,495.6 993,495.7 996.2,496 999.4,495.8 1002.7,495.8 1005.9,495.2 1009.1,495.1 1012.3,495.1 1015.5,495" stroke="#852235"/>
<path d="M148.5,499.4 151.7,499.5 154.9,499.5 158.1,499.3 161.3,499.3 164.6,499.4 167.8,499.4 171,499.5 174.2,499.2 177.4,498.9 180.6,499.1 183.8,499 187,498.8 190.2,498.9 193.5,499.1 196.7,499.3 199.9,499.3 203.1,499.3 206.3,499.2 209.5,499 212.7,498.7 215.9,498.9 219.1,498.6 222.4,498.6 225.6,498.6 228.8,498.6 232,498.8 235.2,498.7 238.4,498.7 241.6,498.4 244.8,498.4 248,498.1 251.3,497.9 254.5,497.5 257.7,497.3 260.9,497.3 264.1,496.8 267.3,496.8 270.5,496.3 273.7,495.8 276.9,495.4 280.2,494.8 283.4,494.2 286.6,493.8 289.8,493.1 293,492.7 296.2,491.9 299.4,491.3 302.6,490.4 305.8,488.9 309.1,487.4 312.3,486.1 315.5,484.3 318.7,482.1 321.9,480.8 325.1,481.5 328.3,484.9 331.5,488.9 334.7,491.9 338,494.3 341.2,495.8 344.4,496.9 347.6,497.2 350.8,497.3 354,496.9 357.2,496.6 360.4,496 363.6,495.6 366.9,495.5 370.1,495.2 373.3,495 376.5,494.7 379.7,494.1 382.9,493.8 386.1,493.8 389.3,493.5 392.5,493.2 395.8,492.8 399,492.4 402.2,492.1 405.4,491.4 408.6,491.1 411.8,490.8 415,490.1 418.2,489.6 421.4,489.1 424.7,488.2 427.9,487.5 431.1,486.2 434.3,484.8 437.5,482.9 440.7,480.6 443.9,477.7 447.1,473.4 450.3,468.7 453.6,465.5 456.8,468.7 460,476.4 463.2,483.2 466.4,488 469.6,491.3 472.8,493.4 476,495 479.2,496.3 482.5,497.2 485.7,497 488.9,496.8 492.1,496.2 495.3,495.4 498.5,494.8 501.7,494 504.9,493.3 508.1,492.6 511.4,491.6 514.6,490.7 517.8,489.2 521,487.6 524.2,485.1 527.4,482.2 530.6,477.8 533.8,471.7 537,463.7 540.3,461.5 543.5,468.7 546.7,476.5 549.9,481.9 553.1,486.6 556.3,495.5 559.5,497.4 562.7,496.4 565.9,495.5 569.2,495.1 572.4,494.2 575.6,493.3 578.8,492.9 582,491.5 585.2,490.3 588.4,488.9 591.6,486.9 594.8,484.7 598.1,482 601.3,479.1 604.5,475.1 607.7,471 610.9,467 614.1,464.2 617.3,463.9 620.5,466 623.7,469.9 627,473.8 630.2,477.2 633.4,480.2 636.6,482.6 639.8,484.5 643,486.2 646.2,487.6 649.4,488.7 652.6,489.8 655.9,490.4 659.1,491 662.3,491.4 665.5,491.9 668.7,492.6 671.9,493 675.1,493.7 678.3,494.1 681.5,495 684.8,495.6 688,495.9 691.2,496.2 694.4,496.7 697.6,497 700.8,497.2 704,497.5 707.2,497.6 710.4,497.9 713.7,498.1 716.9,498.7 720.1,498.9 723.3,499 726.5,498.7 729.7,498.9 732.9,498.7 736.1,498.8 739.3,498.6 742.6,498.3 745.8,497.9 749,497.5 752.2,497 755.4,496.5 758.6,496 761.8,495.4 765,494.7 768.2,493.7 771.5,492.8 774.7,492 777.9,491.1 781.1,490.1 784.3,488.7 787.5,487 790.7,485.2 793.9,482.8 797.1,480.2 800.4,476.6 803.6,472 806.8,466.4 810,458.7 813.2,449.2 816.4,438.1 819.6,429.2 822.8,427.7 826,433.7 829.3,442.5 832.5,450.1 835.7,456.6 838.9,461.6 842.1,465.4 845.3,468.5 848.5,471.6 851.7,473.6 854.9,475.7 858.2,477.4 861.4,478.9 864.6,479.8 867.8,480.7 871,481 874.2,481.1 877.4,480.8 880.6,480.7 883.8,480.1 887.1,479.6 890.3,478.8 893.5,477.8 896.7,476.2 899.9,474.5 903.1,472.3 906.3,469.2 909.5,465.8 912.7,461.5 916,455.6 919.2,449.1 922.4,445.1 925.6,448.5 928.8,457.4 932,467.1 935.2,474.6 938.4,480.3 941.6,484.8 944.9,487.9 948.1,490.1 951.3,492.3 954.5,493.9 957.7,495 960.9,495.9 964.1,496.5 967.3,497.2 970.5,497.9 973.8,498.2 977,498.5 980.2,498.8 983.4,499.1 986.6,499.3 989.8,499.3 993,499.2 996.2,499.1 999.4,499 1002.7,499.1 1005.9,499.1 1009.1,499.5 1012.3,499.6 1015.5,500" stroke="#1b6a9f"/>
<path d="M148.5,499.4 151.7,499.3 154.9,499.3 158.1,499.2 161.3,499.2 164.6,499 167.8,499 171,498.8 174.2,498.8 177.4,498.7 180.6,498.4 183.8,498.4 187,498.1 190.2,498.3 193.5,498.2 196.7,497.9 199.9,497.6 203.1,497.6 206.3,497.3 209.5,497.3 212.7,497.2 215.9,497.1 219.1,496.8 222.4,496.5 225.6,496.4 228.8,496.3 232,496.3 235.2,496 238.4,496.1 241.6,496 244.8,496 248,495.9 251.3,495.9 254.5,495.9 257.7,495.6 260.9,495.5 264.1,495.5 267.3,495.5 270.5,495.3 273.7,495.2 276.9,495.1 280.2,495 283.4,494.6 286.6,494.5 289.8,494.6 293,494.3 296.2,494.2 299.4,493.9 302.6,493.5 305.8,493 309.1,492.3 312.3,491.2 315.5,490.2 318.7,488.7 321.9,486.9 325.1,485.8 328.3,486.5 331.5,487.9 334.7,489.1 338,490 341.2,490.9 344.4,491.4 347.6,491.8 350.8,492.3 354,492.4 357.2,493 360.4,493 363.6,493.2 366.9,493.4 370.1,493.4 373.3,493.8 376.5,493.8 379.7,494.1 382.9,493.9 386.1,494 389.3,494.3 392.5,494.2 395.8,494.3 399,494.2 402.2,494.4 405.4,494.2 408.6,494.1 411.8,493.8 415,493.5 418.2,493.2 421.4,493 424.7,492.8 427.9,492.4 431.1,491.5 434.3,490.6 437.5,489.6 440.7,487.8 443.9,485.3 447.1,482.1 450.3,477.7 453.6,474 456.8,475 460,479.7 463.2,484.1 466.4,487.5 469.6,489.5 472.8,491.1 476,492.4 479.2,493.4 482.5,494.6 485.7,495.3 488.9,495.6 492.1,495.9 495.3,496.3 498.5,496.7 501.7,497.2 504.9,497.7 508.1,498 511.4,498.3 514.6,498.4 517.8,498.7 521,498.6 524.2,498.3 527.4,497.5 530.6,496.2 533.8,493.4 537,488.8 540.3,485.1 543.5,485.3 546.7,486.3 549.9,486.6 553.1,487.3 556.3,493.1 559.5,496.2 562.7,496.1 565.9,495.4 569.2,495.3 572.4,494.8 575.6,494.6 578.8,494.1 582,493.8 585.2,493.3 588.4,492.6 591.6,492.5 594.8,491.8 598.1,491 601.3,489.9 604.5,488.7 607.7,486.8 610.9,485.7 614.1,484.6 617.3,484.7 620.5,485.7 623.7,487.2 627,488.4 630.2,489.4 633.4,490.5 636.6,491.4 639.8,492.2 643,492.6 646.2,493.1 649.4,493.1 652.6,493 655.9,493.2 659.1,493.4 662.3,493.3 665.5,493.5 668.7,493.4 671.9,493.5 675.1,493.5 678.3,493.3 681.5,493.1 684.8,492.7 688,492.9 691.2,492.7 694.4,492.6 697.6,492.7 700.8,492.8 704,492.8 707.2,492.6 710.4,492.5 713.7,492.2 716.9,492.1 720.1,492 723.3,491.8 726.5,492 729.7,491.7 732.9,491.1 736.1,491.2 739.3,491 742.6,490.9 745.8,491 749,490.6 752.2,490.4 755.4,490 758.6,489.8 761.8,489.4 765,489.2 768.2,488.8 771.5,488.3 774.7,487.5 777.9,487 781.1,486.4 784.3,485.3 787.5,484.1 790.7,483 793.9,481.4 797.1,479.7 800.4,477 803.6,473.8 806.8,469.7 810,464.1 813.2,457 816.4,449 819.6,442.8 822.8,442.3 826,447.3 829.3,454.2 832.5,460.3 835.7,465.4 838.9,469.2 842.1,472.5 845.3,475.1 848.5,477.2 851.7,479 854.9,480.3 858.2,481.8 861.4,482.7 864.6,483.5 867.8,484.2 871,484.6 874.2,484.5 877.4,484.5 880.6,484.2 883.8,483.7 887.1,482.7 890.3,481.7 893.5,480.2 896.7,478.5 899.9,476.6 903.1,474.1 906.3,470.8 909.5,466.6 912.7,461.3 916,454.4 919.2,446.2 922.4,440.5 925.6,442.9 928.8,451.8 932,462 935.2,470.1 938.4,476.4 941.6,481.1 944.9,484.4 948.1,487.4 951.3,489.7 954.5,491.5 957.7,492.8 960.9,494 964.1,495.1 967.3,496.1 970.5,497.1 973.8,497.6 977,497.7 980.2,497.7 983.4,497.9 986.6,498.2 989.8,498.7 993,498.9 996.2,498.9 999.4,499.1 1002.7,499 1005.9,499 1009.1,498.8 1012.3,498.8 1015.5,499" stroke="#dbb14c"/>
<path d="M148.5,496.2 151.7,496.2 154.9,496.3 158.1,496.1 161.3,496 164.6,496 167.8,495.7 171,495.8 174.2,495.8 177.4,495.5 180.6,495.7 183.8,495.6 187,495.2 190.2,495.2 193.5,495.1 196.7,495.5 199.9,495.1 203.1,495.1 206.3,495.3 209.5,495.2 212.7,495.2 215.9,495 219.1,495.3 222.4,495.6 225.6,495.5 228.8,495.8 232,495.6 235.2,495.8 238.4,495.9 241.6,496.1 244.8,496.1 248,496.1 251.3,495.9 254.5,496.1 257.7,496 260.9,496.3 264.1,496.3 267.3,496.3 270.5,496.3 273.7,496.2 276.9,496.2 280.2,496.1 283.4,495.9 286.6,495.5 289.8,495.4 293,495 296.2,494.7 299.4,494.5 302.6,493.8 305.8,493 309.1,492 312.3,490.7 315.5,489.2 318.7,486.8 321.9,484.6 325.1,483.9 328.3,485.5 331.5,487.8 334.7,489.7 338,491.3 341.2,492.3 344.4,493.2 347.6,493.8 350.8,494.5 354,495 357.2,495.5 360.4,495.4 363.6,495.7 366.9,495.8 370.1,496 373.3,496.2 376.5,496.5 379.7,496.6 382.9,496.4 386.1,496.4 389.3,496.2 392.5,496.1 395.8,495.9 399,495.9 402.2,495.9 405.4,495.6 408.6,495.7 411.8,495.5 415,495 418.2,494.8 421.4,494.3 424.7,493.6 427.9,492.5 431.1,491.1 434.3,489.8 437.5,488.2 440.7,486 443.9,482.8 447.1,478 450.3,471.8 453.6,466 456.8,466 460,471.2 463.2,476.6 466.4,480.5 469.6,483.3 472.8,485.4 476,486.9 479.2,487.8 482.5,488.7 485.7,489 488.9,489.6 492.1,489.9 495.3,490 498.5,490.2 501.7,490.2 504.9,490.3 508.1,490 511.4,490.1 514.6,489.7 517.8,489.3 521,488.8 524.2,487.9 527.4,487 530.6,485.9 533.8,484.1 537,482.8 540.3,484.4 543.5,488.3 546.7,490.5 549.9,489.7 553.1,487.6 556.3,490.2 559.5,493.4 562.7,493.4 565.9,492.6 569.2,491.5 572.4,490.7 575.6,489.9 578.8,489 582,487.9 585.2,486.8 588.4,485.3 591.6,483.7 594.8,481.9 598.1,479.7 601.3,477.3 604.5,474 607.7,470.5 610.9,466.9 614.1,464.3 617.3,463.8 620.5,465.5 623.7,468.7 627,472.1 630.2,474.7 633.4,477.4 636.6,479.4 639.8,481.1 643,482.3 646.2,483.3 649.4,484.4 652.6,485.1 655.9,485.7 659.1,486.3 662.3,487.2 665.5,487.7 668.7,488 671.9,488.7 675.1,489.2 678.3,489.5 681.5,489.7 684.8,490.1 688,490.6 691.2,490.8 694.4,491 697.6,491.4 700.8,491.3 704,491.6 707.2,491.7 710.4,491.9 713.7,491.9 716.9,492.4 720.1,492.5 723.3,492.2 726.5,492.7 729.7,493 732.9,493.1 736.1,493.1 739.3,493 742.6,492.8 745.8,493.3 749,493.3 752.2,493.3 755.4,493.2 758.6,493.1 761.8,492.9 765,492.4 768.2,492.3 771.5,492.1 774.7,492.2 777.9,491.7 781.1,491.3 784.3,491.1 787.5,490.6 790.7,489.7 793.9,488.8 797.1,487.9 800.4,486.7 803.6,485 806.8,482.7 810,479.7 813.2,476.3 816.4,472.2 819.6,469.5 822.8,470.4 826,473.9 829.3,478 832.5,481.9 835.7,484.9 838.9,487.4 842.1,489.3 845.3,490.7 848.5,491.8 851.7,492.8 854.9,493.6 858.2,494.1 861.4,494.4 864.6,494.8 867.8,495.1 871,495.1 874.2,495.4 877.4,495.8 880.6,495.8 883.8,495.7 887.1,495.9 890.3,495.7 893.5,495.5 896.7,495.1 899.9,494.7 903.1,494.5 906.3,493.9 909.5,493.3 912.7,492.5 916,491.2 919.2,489.9 922.4,489.4 925.6,490.1 928.8,491.7 932,493.4 935.2,494.8 938.4,495.8 941.6,496.3 944.9,496.8 948.1,497.2 951.3,497.2 954.5,497.4 957.7,497.6 960.9,497.7 964.1,497.3 967.3,497.5 970.5,497.3 973.8,497.3 977,497.6 980.2,497.3 983.4,496.9 986.6,496.9 989.8,496.9 993,497 996.2,497.1 999.4,497 1002.7,496.7 1005.9,496.5 1009.1,496.5 1012.3,496.3 1015.5,496.1" stroke="#71397c"/>
<path d="M148.5,499.2 151.7,499 154.9,499.1 158.1,498.8 161.3,498.9 164.6,499 167.8,499.1 171,498.8 174.2,498.9 177.4,498.9 180.6,499 183.8,499 187,498.7 190.2,498.5 193.5,498.3 196.7,498.5 199.9,498.4 203.1,498.4 206.3,498.9 209.5,499.1 212.7,499 215.9,498.9 219.1,498.9 222.4,498.9 225.6,499 228.8,499 232,498.7 235.2,499 238.4,498.9 241.6,498.8 244.8,498.8 248,498.5 251.3,498.4 254.5,498.5 257.7,498.4 260.9,498.5 264.1,498.3 267.3,497.9 270.5,497.8 273.7,497.8 276.9,497.6 280.2,497.6 283.4,497.7 286.6,497.4 289.8,497.2 293,497.5 296.2,497.5 299.4,497.5 302.6,497.4 305.8,497.6 309.1,497.8 312.3,497.8 315.5,497 318.7,495.8 321.9,493.7 325.1,491.7 328.3,490.7 331.5,490.5 334.7,491.2 338,491.5 341.2,491.9 344.4,492.1 347.6,492.6 350.8,492.9 354,492.8 357.2,493.1 360.4,493.2 363.6,493.2 366.9,493 370.1,493 373.3,493.3 376.5,493.3 379.7,493.1 382.9,493.1 386.1,492.6 389.3,492.3 392.5,492.7 395.8,492.7 399,492.7 402.2,492.7 405.4,492.5 408.6,492.4 411.8,492.4 415,492.1 418.2,491.8 421.4,491.5 424.7,491.1 427.9,491.1 431.1,490.6 434.3,490.2 437.5,489.6 440.7,488.9 443.9,487.9 447.1,486.8 450.3,485.6 453.6,486 456.8,488.7 460,492.8 463.2,495.2 466.4,496.2 469.6,496 472.8,495.8 476,495.4 479.2,495.1 482.5,494.4 485.7,494.1 488.9,493.2 492.1,493 495.3,492.7 498.5,492.6 501.7,492.3 504.9,491.8 508.1,491.2 511.4,490.5 514.6,490 517.8,489.4 521,488.7 524.2,487.6 527.4,486 530.6,484.1 533.8,481.4 537,479.5 540.3,481.8 543.5,487.9 546.7,491.6 549.9,491.7 553.1,489.2 556.3,492.1 559.5,495.3 562.7,495.1 565.9,494.5 569.2,493.4 572.4,492.5 575.6,491.7 578.8,490.6 582,489.7 585.2,488.4 588.4,487.3 591.6,485.9 594.8,484.4 598.1,482.5 601.3,480.3 604.5,477.6 607.7,474.7 610.9,472.3 614.1,471 617.3,471.9 620.5,475 623.7,478.5 627,482 630.2,485.3 633.4,487.7 636.6,489.7 639.8,491.3 643,492.7 646.2,493.9 649.4,494.9 652.6,495.8 655.9,496.4 659.1,496.9 662.3,497.3 665.5,497.8 668.7,498.2 671.9,498.5 675.1,498.3 678.3,498.4 681.5,498.1 684.8,497.9 688,497.6 691.2,497.3 694.4,497 697.6,496.7 700.8,496.7 704,496.4 707.2,496.2 710.4,495.9 713.7,495.6 716.9,495.3 720.1,495 723.3,494.6 726.5,494.2 729.7,493.9 732.9,493.4 736.1,493.1 739.3,492.8 742.6,492.6 745.8,492.3 749,491.9 752.2,491.4 755.4,490.9 758.6,490.5 761.8,489.9 765,489.3 768.2,488.8 771.5,488.1 774.7,487.3 777.9,486.4 781.1,485.4 784.3,484.2 787.5,482.8 790.7,481.2 793.9,479.4 797.1,477.1 800.4,474.2 803.6,470.9 806.8,466.7 810,461.2 813.2,454.7 816.4,447.8 819.6,443.9 822.8,446.2 826,453.7 829.3,462.3 832.5,469.6 835.7,475.5 838.9,480 842.1,483.7 845.3,486.7 848.5,489.3 851.7,491.5 854.9,493.1 858.2,494.4 861.4,495.6 864.6,496.7 867.8,497.2 871,497.5 874.2,497.5 877.4,496.8 880.6,495.9 883.8,495.1 887.1,493.8 890.3,492.4 893.5,490.5 896.7,488.1 899.9,484.9 903.1,481.8 906.3,477.1 909.5,471.5 912.7,464.4 916,454.5 919.2,442.5 922.4,431.7 925.6,430 928.8,437.6 932,447.5 935.2,456.4 938.4,463.8 941.6,469.4 944.9,473.9 948.1,477.7 951.3,480.9 954.5,483.6 957.7,486.2 960.9,488.4 964.1,490.3 967.3,491.7 970.5,492.8 973.8,493.9 977,494.7 980.2,495.1 983.4,495.4 986.6,496 989.8,496.5 993,496.7 996.2,496.8 999.4,497.2 1002.7,497.4 1005.9,497.6 1009.1,497.7 1012.3,497.9 1015.5,498.1" stroke="#7ea34c"/>
<path d="M148.5,498.6 151.7,498.3 154.9,498.4 158.1,498.6 161.3,498.6 164.6,498.6 167.8,498.8 171,498.9 174.2,498.8 177.4,498.5 180.6,498.4 183.8,498.8 187,498.9 190.2,499.1 193.5,499.2 196.7,499 199.9,499.1 203.1,499.1 206.3,498.9 209.5,498.8 212.7,498.9 215.9,498.9 219.1,498.9 222.4,499.1 225.6,499.4 228.8,499.4 232,499.3 235.2,499.4 238.4,499.6 241.6,499.6 244.8,499.5 248,499.5 251.3,499.8 254.5,499.8 257.7,499.6 260.9,499.8 264.1,499.9 267.3,499.7 270.5,499.9 273.7,500 276.9,499.8 280.2,499.8 283.4,499.9 286.6,499.8 289.8,499.7 293,499.5 296.2,499.3 299.4,499.1 302.6,499.1 305.8,498.7 309.1,498.4 312.3,497.9 315.5,497 318.7,496.1 321.9,495.2 325.1,494.5 328.3,494.9 331.5,495.7 334.7,496.4 338,496.8 341.2,497.3 344.4,497.7 347.6,497.7 350.8,498 354,498.1 357.2,498.5 360.4,498.5 363.6,498.5 366.9,498.8 370.1,498.8 373.3,498.9 376.5,499 379.7,498.8 382.9,499.2 386.1,499 389.3,499.4 392.5,499.4 395.8,499.6 399,499.5 402.2,499.7 405.4,499.7 408.6,500 411.8,499.8 415,500 418.2,499.7 421.4,499.5 424.7,499 427.9,498.4 431.1,497.6 434.3,497.2 437.5,496.8 440.7,495.9 443.9,494.2 447.1,491.9 450.3,488.3 453.6,484.7 456.8,484 460,485.6 463.2,487.9 466.4,489.6 469.6,490.8 472.8,491.6 476,492.1 479.2,492.5 482.5,492.9 485.7,492.5 488.9,492.5 492.1,492.8 495.3,492.7 498.5,492.9 501.7,492.9 504.9,493.4 508.1,493.4 511.4,493.1 514.6,492.5 517.8,492.3 521,491.9 524.2,491.7 527.4,491 530.6,489.6 533.8,487.9 537,486.8 540.3,488.3 543.5,491.9 546.7,494.6 549.9,494.9 553.1,493 556.3,494.6 559.5,497 562.7,497.1 565.9,497.1 569.2,496.7 572.4,496.4 575.6,496 578.8,495.6 582,495.1 585.2,494.6 588.4,493.9 591.6,493.1 594.8,492.6 598.1,491.7 601.3,490.5 604.5,489.7 607.7,488.7 610.9,487.8 614.1,487.4 617.3,487.7 620.5,488.7 623.7,490.1 627,491.5 630.2,492.9 633.4,493.9 636.6,494.7 639.8,495.3 643,495.8 646.2,496.2 649.4,496.5 652.6,496.7 655.9,496.9 659.1,497.1 662.3,497.5 665.5,497.7 668.7,497.9 671.9,498.1 675.1,498.1 678.3,498.2 681.5,498.2 684.8,498.3 688,498.1 691.2,498.4 694.4,498.3 697.6,498.1 700.8,498.1 704,497.9 707.2,497.8 710.4,497.9 713.7,497.8 716.9,497.8 720.1,497.7 723.3,497.6 726.5,497.7 729.7,497.6 732.9,497.3 736.1,497.3 739.3,497.2 742.6,497.1 745.8,497.1 749,497 752.2,496.8 755.4,496.8 758.6,496.5 761.8,496.4 765,496.3 768.2,496.2 771.5,495.8 774.7,495.3 777.9,495.2 781.1,495 784.3,494.7 787.5,494.4 790.7,494 793.9,493.6 797.1,493 800.4,492.2 803.6,491.2 806.8,489.8 810,488.2 813.2,486 816.4,483.9 819.6,482.7 822.8,483.2 826,485.6 829.3,488 832.5,490.7 835.7,492.5 838.9,494.1 842.1,495.2 845.3,496.2 848.5,496.8 851.7,497.5 854.9,498.1 858.2,498.4 861.4,498.7 864.6,498.8 867.8,499.1 871,499 874.2,498.8 877.4,498.7 880.6,498.7 883.8,498.9 887.1,498.5 890.3,498 893.5,497.1 896.7,496.5 899.9,495.8 903.1,494.9 906.3,494 909.5,492.3 912.7,489.8 916,487.2 919.2,483.8 922.4,480.7 925.6,480.2 928.8,482.4 932,485.3 935.2,487.9 938.4,489.8 941.6,491.5 944.9,492.5 948.1,493.6 951.3,494.7 954.5,495.5 957.7,496.3 960.9,496.9 964.1,497.4 967.3,497.9 970.5,498.3 973.8,498.3 977,498.4 980.2,498.2 983.4,498.5 986.6,498.7 989.8,498.7 993,499.1 996.2,499.4 999.4,499.2 1002.7,499.1 1005.9,498.8 1009.1,498.7 1012.3,498.8 1015.5,498.9" stroke="#66b6d7"/>
<path d="M148.5,497.8 151.7,497.9 154.9,497.8 158.1,498 161.3,498.1 164.6,497.8 167.8,498 171,497.9 174.2,498.2 177.4,498.1 180.6,498.2 183.8,498.5 187,498.7 190.2,498.7 193.5,498.5 196.7,498.8 199.9,498.9 203.1,498.6 206.3,498.9 209.5,499 212.7,498.8 215.9,498.9 219.1,498.7 222.4,498.7 225.6,498.7 228.8,498.7 232,498.8 235.2,498.7 238.4,498.8 241.6,498.5 244.8,498.8 248,498.7 251.3,498.4 254.5,498.5 257.7,498.3 260.9,498.2 264.1,497.8 267.3,497.6 270.5,497.6 273.7,497.3 276.9,497 280.2,496.5 283.4,496.1 286.6,495.8 289.8,495.3 293,495 296.2,494.6 299.4,493.9 302.6,492.9 305.8,492.1 309.1,491.2 312.3,489.9 315.5,488.2 318.7,486.2 321.9,485 325.1,485.6 328.3,488.3 331.5,491.6 334.7,494 338,495.5 341.2,496.7 344.4,497.6 347.6,498.2 350.8,498.8 354,498.8 357.2,498.6 360.4,498.8 363.6,498.6 366.9,498.2 370.1,497.7 373.3,497.7 376.5,497.6 379.7,497 382.9,496.8 386.1,496.9 389.3,496.8 392.5,496.4 395.8,496.3 399,496 402.2,495.7 405.4,495.3 408.6,495.1 411.8,494.9 415,494.2 418.2,494.1 421.4,493.9 424.7,493.9 427.9,493.4 431.1,492.9 434.3,491.8 437.5,491.2 440.7,490.3 443.9,489.5 447.1,488.4 450.3,487.1 453.6,486.7 456.8,488.6 460,491.5 463.2,493.9 466.4,494.9 469.6,495.2 472.8,495.2 476,495 479.2,494.8 482.5,494.1 485.7,493.8 488.9,493.1 492.1,492.7 495.3,492.2 498.5,491.8 501.7,491 504.9,490.4 508.1,489.5 511.4,489.1 514.6,488.4 517.8,487.5 521,486.2 524.2,484.8 527.4,482.5 530.6,480.6 533.8,477.4 537,474.2 540.3,475.4 543.5,480.9 546.7,484.4 549.9,480.9 553.1,471.5 556.3,473.8 559.5,483.1 562.7,488.3 565.9,491 569.2,492.6 572.4,492.8 575.6,492.4 578.8,491.4 582,490.1 585.2,488.8 588.4,487.1 591.6,485.4 594.8,483.8 598.1,481.8 601.3,479.1 604.5,475.5 607.7,471.7 610.9,467.9 614.1,465.1 617.3,464.6 620.5,466.4 623.7,469.4 627,472.4 630.2,475.4 633.4,478.3 636.6,480.2 639.8,482 643,483.5 646.2,484.9 649.4,485.8 652.6,486.6 655.9,487.3 659.1,488 662.3,488.7 665.5,489.5 668.7,490.1 671.9,490.3 675.1,491.1 678.3,491.6 681.5,491.9 684.8,492.3 688,492.7 691.2,492.7 694.4,493.3 697.6,493.5 700.8,493.6 704,494 707.2,494.1 710.4,494.3 713.7,494.5 716.9,494.9 720.1,495.1 723.3,495.1 726.5,495.4 729.7,495.4 732.9,495.5 736.1,495.7 739.3,495.9 742.6,496.1 745.8,496.1 749,496 752.2,496.2 755.4,496.2 758.6,496.5 761.8,496.6 765,496.6 768.2,496.7 771.5,496.7 774.7,496.5 777.9,496.4 781.1,496.5 784.3,496.4 787.5,496 790.7,496.1 793.9,495.9 797.1,495.6 800.4,495.2 803.6,494.5 806.8,493.4 810,492.7 813.2,491.1 816.4,490 819.6,488.9 822.8,489.3 826,490.5 829.3,491.7 832.5,493 835.7,493.8 838.9,494.8 842.1,495.1 845.3,495.7 848.5,495.9 851.7,496.2 854.9,496.3 858.2,496.3 861.4,496.3 864.6,496.1 867.8,496.4 871,496.4 874.2,496.2 877.4,496.1 880.6,495.6 883.8,495.2 887.1,494.8 890.3,493.9 893.5,493.3 896.7,492.2 899.9,490.9 903.1,489.4 906.3,487.5 909.5,485 912.7,481.8 916,477.9 919.2,473.3 922.4,469.3 925.6,469.2 928.8,473.1 932,477.8 935.2,481.8 938.4,484.7 941.6,487.2 944.9,489 948.1,490.5 951.3,491.6 954.5,492.6 957.7,493.7 960.9,494.4 964.1,495.2 967.3,495.6 970.5,496 973.8,496.5 977,496.5 980.2,496.5 983.4,496.5 986.6,497 989.8,496.9 993,497.1 996.2,497.2 999.4,497.1 1002.7,497.2 1005.9,497.1 1009.1,496.8 1012.3,496.8 1015.5,496.6" stroke="#bb5d34"/>
<path d="M148.5,500.1 151.7,499.8 154.9,499.6 158.1,499.7 161.3,499.7 164.6,499.8 167.8,499.9 171,499.9 174.2,499.7 177.4,499.8 180.6,499.6 183.8,499.7 187,499.7 190.2,499.7 193.5,499.4 196.7,499.4 199.9,499.5 203.1,499.2 206.3,499 209.5,498.7 212.7,498.6 215.9,498.8 219.1,498.9 222.4,498.8 225.6,498.2 228.8,498.2 232,498.2 235.2,498.1 238.4,497.9 241.6,497.8 244.8,498 248,497.5 251.3,497.3 254.5,497.2 257.7,497.1 260.9,497 264.1,497 267.3,496.8 270.5,496.3 273.7,495.9 276.9,495.8 280.2,495.6 283.4,495.5 286.6,495.3 289.8,495.1 293,494.7 296.2,494.4 299.4,494 302.6,493.7 305.8,493.2 309.1,492.6 312.3,491.8 315.5,490.9 318.7,489.8 321.9,488.8 325.1,488.4 328.3,489.5 331.5,490.8 334.7,492.1 338,493 341.2,493.7 344.4,494.2 347.6,494.7 350.8,494.8 354,494.9 357.2,495.4 360.4,495.5 363.6,496 366.9,496.4 370.1,496.3 373.3,496.1 376.5,496 379.7,495.7 382.9,496 386.1,495.9 389.3,496.1 392.5,496.2 395.8,496.4 399,496.6 402.2,496.4 405.4,496.5 408.6,496.4 411.8,496.5 415,496.5 418.2,496.5 421.4,496.4 424.7,495.8 427.9,495.6 431.1,495.5 434.3,495.1 437.5,494.4 440.7,493.5 443.9,492.4 447.1,490.6 450.3,488 453.6,486.1 456.8,486.3 460,488.6 463.2,490.7 466.4,492.3 469.6,493.2 472.8,494.3 476,495 479.2,496 482.5,496.4 485.7,496.6 488.9,497 492.1,497.3 495.3,497.7 498.5,497.7 501.7,497.8 504.9,498 508.1,498.4 511.4,498.6 514.6,499.1 517.8,498.9 521,499.2 524.2,499.2 527.4,499.1 530.6,498 533.8,496.8 537,494.7 540.3,492.8 543.5,493.2 546.7,494.3 549.9,495.2 553.1,494.6 556.3,492.8 559.5,493.5 562.7,494.1 565.9,494.3 569.2,494.4 572.4,494.4 575.6,494.2 578.8,494 582,493.8 585.2,493.5 588.4,493.2 591.6,492.5 594.8,491.8 598.1,490.7 601.3,489.5 604.5,488.5 607.7,486.9 610.9,485.5 614.1,484.4 617.3,484.6 620.5,485.9 623.7,487.8 627,489.4 630.2,490.8 633.4,491.5 636.6,492 639.8,492.6 643,493.2 646.2,493.6 649.4,494.3 652.6,494.7 655.9,494.8 659.1,495 662.3,494.8 665.5,495.1 668.7,495.1 671.9,495.2 675.1,495.3 678.3,495.4 681.5,495 684.8,495.2 688,495.2 691.2,495.1 694.4,495.3 697.6,495.3 700.8,495.2 704,495.2 707.2,494.9 710.4,495.2 713.7,495 716.9,494.9 720.1,495.1 723.3,495 726.5,495 729.7,495 732.9,494.8 736.1,494.7 739.3,495 742.6,495.2 745.8,495.1 749,495.3 752.2,495.3 755.4,495.2 758.6,495.5 761.8,495.8 765,495.7 768.2,495.9 771.5,496.1 774.7,496.1 777.9,496 781.1,495.8 784.3,495.8 787.5,495.5 790.7,495.3 793.9,495.2 797.1,494.8 800.4,494.6 803.6,493.3 806.8,492.4 810,490.8 813.2,489 816.4,486.6 819.6,484.8 822.8,483.5 826,484 829.3,485 832.5,486.7 835.7,487.9 838.9,489 842.1,489.8 845.3,490.2 848.5,490.8 851.7,491.3 854.9,491.5 858.2,491.9 861.4,492.2 864.6,492.4 867.8,492.6 871,492.6 874.2,492.5 877.4,492.1 880.6,491.5 883.8,491.2 887.1,490.8 890.3,489.8 893.5,488.7 896.7,487.5 899.9,485.8 903.1,484.2 906.3,481.8 909.5,478.9 912.7,475.1 916,469.9 919.2,463.7 922.4,459.3 925.6,460.4 928.8,465.9 932,472.6 935.2,478.2 938.4,482.3 941.6,485.5 944.9,487.8 948.1,489.8 951.3,491.3 954.5,492.8 957.7,494.1 960.9,495.2 964.1,495.8 967.3,496.7 970.5,497.5 973.8,497.9 977,498.2 980.2,498.6 983.4,498.6 986.6,498.7 989.8,498.8 993,499 996.2,498.8 999.4,498.9 1002.7,498.8 1005.9,498.6 1009.1,498.7 1012.3,499.1 1015.5,499.1" stroke="#dbb14c"/>
<path d="M148.5,499.6 151.7,499.9 154.9,500 158.1,500 161.3,500 164.6,499.8 167.8,499.9 171,499.9 174.2,499.8 177.4,499.4 180.6,499.6 183.8,499.7 187,499.8 190.2,499.7 193.5,499.8 196.7,499.7 199.9,499.4 203.1,499.6 206.3,499.5 209.5,499.1 212.7,499.3 215.9,499.1 219.1,499 222.4,499 225.6,498.8 228.8,498.8 232,498.6 235.2,498.5 238.4,498.4 241.6,498.3 244.8,498.5 248,498.5 251.3,498.6 254.5,498.8 257.7,498.5 260.9,498.5 264.1,498.2 267.3,497.9 270.5,497.9 273.7,497.6 276.9,497.5 280.2,497.2 283.4,496.8 286.6,496.5 289.8,496.4 293,496.1 296.2,495.7 299.4,495.3 302.6,494.7 305.8,494.3 309.1,493.6 312.3,492.7 315.5,491.7 318.7,490.5 321.9,489.4 325.1,489.4 328.3,490.6 331.5,492.3 334.7,493.5 338,494.3 341.2,495 344.4,495.4 347.6,496.1 350.8,496.3 354,496.8 357.2,496.8 360.4,496.7 363.6,497 366.9,496.7 370.1,496.7 373.3,496.6 376.5,496.8 379.7,496.7 382.9,496.5 386.1,496.2 389.3,496.3 392.5,496.2 395.8,495.8 399,495.7 402.2,495.9 405.4,495.6 408.6,495.6 411.8,495.6 415,495.2 418.2,495.1 421.4,495.1 424.7,494.8 427.9,494.3 431.1,494.3 434.3,494 437.5,493.6 440.7,492.9 443.9,492.1 447.1,491.1 450.3,489.4 453.6,488.2 456.8,488.9 460,490.9 463.2,492.7 466.4,493.7 469.6,494.5 472.8,495.3 476,495.9 479.2,496.3 482.5,496.7 485.7,496.9 488.9,497 492.1,497.3 495.3,497.7 498.5,497.8 501.7,497.8 504.9,497.8 508.1,497.9 511.4,497.8 514.6,497.8 517.8,497.7 521,497.6 524.2,497.2 527.4,496.5 530.6,495.7 533.8,494.1 537,491.7 540.3,490.1 543.5,491.2 546.7,492.8 549.9,493.9 553.1,492.1 556.3,489.5 559.5,490.5 562.7,491.2 565.9,491.6 569.2,491.7 572.4,491.8 575.6,491.4 578.8,491.3 582,490.6 585.2,490.3 588.4,489.9 591.6,489.1 594.8,488.2 598.1,486.8 601.3,485.1 604.5,483 607.7,480.9 610.9,478.6 614.1,477.5 617.3,477.8 620.5,479.3 623.7,482.1 627,484.7 630.2,486.6 633.4,488.2 636.6,489.4 639.8,490.4 643,491.9 646.2,492.5 649.4,493.1 652.6,493.9 655.9,494.5 659.1,495 662.3,495.3 665.5,495.7 668.7,495.9 671.9,495.9 675.1,495.8 678.3,496.2 681.5,496.5 684.8,496.9 688,497 691.2,497.4 694.4,497.3 697.6,497.3 700.8,497.4 704,497.4 707.2,497.4 710.4,497.4 713.7,497.6 716.9,497.8 720.1,497.8 723.3,497.9 726.5,498.2 729.7,498.1 732.9,498 736.1,498.3 739.3,498.3 742.6,498 745.8,498.3 749,498.2 752.2,498.4 755.4,498.2 758.6,498 761.8,498.3 765,498 768.2,498.3 771.5,498.2 774.7,498 777.9,498 781.1,497.9 784.3,497.9 787.5,497.5 790.7,497.5 793.9,497.2 797.1,496.8 800.4,496.4 803.6,496.1 806.8,496 810,495.3 813.2,494.6 816.4,493.7 819.6,493.4 822.8,493.5 826,494 829.3,494.6 832.5,495 835.7,495.2 838.9,495.7 842.1,495.9 845.3,496.2 848.5,496 851.7,496.1 854.9,496.2 858.2,496.2 861.4,495.9 864.6,495.9 867.8,496 871,496 874.2,495.9 877.4,495.8 880.6,495.5 883.8,495.2 887.1,495 890.3,494.5 893.5,493.9 896.7,493.4 899.9,492.7 903.1,492.2 906.3,491.1 909.5,490 912.7,488.6 916,486.4 919.2,483.8 922.4,481.9 925.6,482.1 928.8,483.9 932,486 935.2,488.3 938.4,489.9 941.6,491.1 944.9,491.7 948.1,492.3 951.3,492.9 954.5,493.6 957.7,494.3 960.9,494.9 964.1,495.5 967.3,495.6 970.5,495.8 973.8,495.8 977,496.2 980.2,496.4 983.4,496.5 986.6,496.7 989.8,496.9 993,497 996.2,496.9 999.4,497.1 1002.7,497.4 1005.9,497.4 1009.1,497.6 1012.3,497.7 1015.5,497.6" stroke="#1b6a9f"/>
<path d="M148.5,497.6 151.7,497.7 154.9,497.5 158.1,497.4 161.3,497.2 164.6,496.7 167.8,496.5 171,496.4 174.2,496.2 177.4,496.3 180.6,496.6 183.8,496.4 187,496.3 190.2,496.1 193.5,496 196.7,495.9 199.9,495.9 203.1,495.5 206.3,495.7 209.5,495.6 212.7,495.5 215.9,495.4 219.1,495.4 222.4,495.2 225.6,495.1 228.8,495.1 232,495.1 235.2,494.9 238.4,494.8 241.6,495 244.8,494.9 248,494.8 251.3,494.9 254.5,494.9 257.7,495 260.9,495 264.1,494.9 267.3,494.9 270.5,495 273.7,495.1 276.9,495.1 280.2,494.8 283.4,494.6 286.6,494.6 289.8,494.9 293,495.1 296.2,495 299.4,494.6 302.6,494.3 305.8,494.4 309.1,494 312.3,494.2 315.5,493.9 318.7,493.5 321.9,492.9 325.1,492.6 328.3,493.4 331.5,493.6 334.7,494.5 338,495.3 341.2,495.8 344.4,496.1 347.6,496.4 350.8,496.3 354,496.7 357.2,497 360.4,497.1 363.6,497.2 366.9,497.5 370.1,497.4 373.3,497.8 376.5,497.8 379.7,497.6 382.9,497.7 386.1,497.8 389.3,498 392.5,497.9 395.8,497.8 399,498 402.2,498 405.4,497.8 408.6,497.7 411.8,497.5 415,497.5 418.2,497.2 421.4,497 424.7,496.7 427.9,495.9 431.1,495.7 434.3,495 437.5,493.9 440.7,492.4 443.9,490.5 447.1,487.7 450.3,483.9 453.6,480.2 456.8,480.3 460,483 463.2,486.1 466.4,488.6 469.6,490 472.8,491.5 476,492.4 479.2,492.9 482.5,493.1 485.7,493.5 488.9,493.8 492.1,494 495.3,494.2 498.5,494.5 501.7,494.9 504.9,494.8 508.1,494.8 511.4,494.4 514.6,494.4 517.8,494.3 521,494 524.2,493.9 527.4,493.6 530.6,493.1 533.8,492.6 537,491.9 540.3,493 543.5,495.5 546.7,497.4 549.9,498.4 553.1,497.1 556.3,494.2 559.5,493.9 562.7,493.9 565.9,493.6 569.2,493.4 572.4,492.9 575.6,492.4 578.8,491.8 582,491.3 585.2,490.4 588.4,489.5 591.6,488.4 594.8,487.4 598.1,485.5 601.3,483.8 604.5,481.8 607.7,479.2 610.9,476.7 614.1,475.2 617.3,474.8 620.5,476.3 623.7,478.5 627,480.7 630.2,482.9 633.4,484.8 636.6,486.3 639.8,487 643,487.8 646.2,488.4 649.4,489.1 652.6,489.6 655.9,489.9 659.1,490 662.3,490.5 665.5,490.7 668.7,491 671.9,491.1 675.1,491.2 678.3,491.3 681.5,491.3 684.8,491.5 688,491.7 691.2,491.7 694.4,491.9 697.6,491.7 700.8,491.5 704,491.8 707.2,492 710.4,491.8 713.7,492 716.9,492.2 720.1,492.4 723.3,492.6 726.5,492.4 729.7,492.4 732.9,492.3 736.1,492.1 739.3,492.3 742.6,492.4 745.8,492.9 749,492.6 752.2,492.7 755.4,493.1 758.6,493.1 761.8,493.1 765,493.1 768.2,493.3 771.5,493.3 774.7,493.3 777.9,493.3 781.1,493.7 784.3,493.7 787.5,493.7 790.7,493.4 793.9,493.4 797.1,493.2 800.4,492.6 803.6,492.3 806.8,491.8 810,490.7 813.2,489.9 816.4,489 819.6,488.2 822.8,488.5 826,489.7 829.3,491.3 832.5,492.5 835.7,493.8 838.9,494.7 842.1,495.4 845.3,496 848.5,496.7 851.7,497.1 854.9,497.3 858.2,497.7 861.4,497.8 864.6,498.1 867.8,498.2 871,498.1 874.2,498 877.4,498.3 880.6,498.5 883.8,498.6 887.1,498.3 890.3,497.9 893.5,497.6 896.7,497.5 899.9,497.4 903.1,497.8 906.3,497.8 909.5,497.6 912.7,497.1 916,496.5 919.2,495.8 922.4,495.3 925.6,495.4 928.8,496.1 932,497.2 935.2,497.8 938.4,498.3 941.6,498.6 944.9,499 948.1,499.1 951.3,499.4 954.5,499.3 957.7,499.3 960.9,499.5 964.1,499.7 967.3,499.5 970.5,499.7 973.8,499.8 977,499.9 980.2,499.8 983.4,499.6 986.6,499.6 989.8,499.8 993,499.6 996.2,499.8 999.4,499.7 1002.7,499.7 1005.9,499.5 1009.1,499.6 1012.3,499.5 1015.5,499.4" stroke="#852235"/>
<path d="M148.5,497.2 151.7,497.6 154.9,497.4 158.1,497.5 161.3,497.6 164.6,497.4 167.8,497.5 171,497.2 174.2,497.3 177.4,497.4 180.6,497.2 183.8,497.3 187,497.4 190.2,497.2 193.5,497 196.7,497.1 199.9,497.1 203.1,497 206.3,497 209.5,497.1 212.7,497.4 215.9,497.3 219.1,497.1 222.4,497.4 225.6,497.3 228.8,497.2 232,497.4 235.2,497.4 238.4,497.5 241.6,497.5 244.8,497.5 248,497.2 251.3,497.2 254.5,497.3 257.7,497 260.9,497.5 264.1,497.5 267.3,497.4 270.5,497.2 273.7,497.3 276.9,497.2 280.2,497.3 283.4,497.5 286.6,497.4 289.8,497.2 293,497.3 296.2,497.3 299.4,497 302.6,496.8 305.8,496.6 309.1,496.6 312.3,496.2 315.5,496 318.7,495.8 321.9,495.8 325.1,496 328.3,496.9 331.5,497.7 334.7,498.5 338,498.7 341.2,498.6 344.4,498.6 347.6,498.7 350.8,498.8 354,498.8 357.2,499.1 360.4,499.1 363.6,499.1 366.9,498.8 370.1,499 373.3,498.9 376.5,498.6 379.7,498.3 382.9,498.2 386.1,498 389.3,498.3 392.5,498.5 395.8,498.5 399,498.3 402.2,498.2 405.4,498.1 408.6,498.4 411.8,498.2 415,498.1 418.2,497.8 421.4,497.7 424.7,497.3 427.9,497.1 431.1,497.1 434.3,496.8 437.5,496.8 440.7,496.4 443.9,496.1 447.1,495.3 450.3,494.5 453.6,494.2 456.8,495 460,496.3 463.2,497.6 466.4,498.2 469.6,498.7 472.8,498.8 476,499.2 479.2,499.4 482.5,499.1 485.7,499.2 488.9,498.9 492.1,498.8 495.3,498.5 498.5,498.3 501.7,498.4 504.9,498.4 508.1,498.1 511.4,498.1 514.6,497.5 517.8,497.2 521,497 524.2,496.8 527.4,496.4 530.6,495.7 533.8,495.1 537,494.4 540.3,494.7 543.5,496.1 546.7,496.9 549.9,497.1 553.1,496.2 556.3,496.8 559.5,497.9 562.7,498.1 565.9,498.1 569.2,497.8 572.4,497.5 575.6,497.2 578.8,497 582,496.1 585.2,495.8 588.4,495.6 591.6,495.2 594.8,494.8 598.1,494.2 601.3,493.3 604.5,492.5 607.7,491.8 610.9,490.7 614.1,489.9 617.3,489.8 620.5,490.5 623.7,491.2 627,492.1 630.2,492.7 633.4,493.9 636.6,494.6 639.8,494.8 643,495 646.2,495.6 649.4,495.9 652.6,495.7 655.9,495.8 659.1,495.8 662.3,496.3 665.5,496.2 668.7,496.7 671.9,496.7 675.1,496.8 678.3,496.9 681.5,497.1 684.8,497.2 688,497.3 691.2,496.9 694.4,497 697.6,497.3 700.8,497.2 704,496.9 707.2,497 710.4,497.2 713.7,497 716.9,497 720.1,497 723.3,497 726.5,496.7 729.7,496.9 732.9,496.7 736.1,496.8 739.3,496.7 742.6,496.8 745.8,496.2 749,496.2 752.2,496.4 755.4,496.4 758.6,496 761.8,496.3 765,496.2 768.2,496.2 771.5,495.9 774.7,495.9 777.9,495.2 781.1,495.1 784.3,494.7 787.5,494 790.7,493.8 793.9,493.4 797.1,493.2 800.4,492.6 803.6,491.6 806.8,490.1 810,488.6 813.2,486.3 816.4,484 819.6,482.3 822.8,482.7 826,484.6 829.3,487 832.5,489.2 835.7,490.8 838.9,492.2 842.1,492.9 845.3,494.2 848.5,495 851.7,495.9 854.9,496.3 858.2,496.5 861.4,496.7 864.6,497.2 867.8,497.6 871,498.2 874.2,498.3 877.4,498.2 880.6,498.4 883.8,498.7 887.1,498.7 890.3,498.7 893.5,498.9 896.7,499 899.9,499.1 903.1,499 906.3,498.9 909.5,498.4 912.7,498 916,497.1 919.2,495.9 922.4,494.6 925.6,494.1 928.8,494.3 932,495 935.2,495.7 938.4,496.3 941.6,496.7 944.9,496.9 948.1,497.2 951.3,497.5 954.5,497.9 957.7,498.4 960.9,498.5 964.1,498.6 967.3,498.7 970.5,498.8 973.8,499.1 977,499.4 980.2,499.2 983.4,499.3 986.6,499.3 989.8,499.2 993,499.4 996.2,499.6 999.4,499.7 1002.7,499.6 1005.9,499.6 1009.1,499.6 1012.3,499.6 1015.5,499.4" stroke="#7ea34c"/>
<path d="M148.5,496.2 151.7,496.5 154.9,496.7 158.1,496.8 161.3,496.7 164.6,496.8 167.8,496.9 171,497.3 174.2,497.3 177.4,497.2 180.6,497.1 183.8,497.5 187,497.6 190.2,497.8 193.5,497.9 196.7,497.9 199.9,497.7 203.1,497.9 206.3,497.8 209.5,497.8 212.7,497.7 215.9,497.9 219.1,498.2 222.4,498.3 225.6,498.7 228.8,498.6 232,498.6 235.2,498.9 238.4,499 241.6,499.3 244.8,499.2 248,499.4 251.3,499.5 254.5,499.7 257.7,499.6 260.9,499.7 264.1,499.6 267.3,499.4 270.5,499.4 273.7,499.1 276.9,499.1 280.2,499.1 283.4,499.3 286.6,499.5 289.8,499.4 293,499.5 296.2,499.1 299.4,498.6 302.6,498.2 305.8,498.1 309.1,497.4 312.3,496.9 315.5,496.6 318.7,496 321.9,495 325.1,494.6 328.3,495 331.5,495.4 334.7,496.2 338,496.6 341.2,497.1 344.4,497.5 347.6,497.6 350.8,497.6 354,497.5 357.2,497.6 360.4,497.7 363.6,497.5 366.9,497.7 370.1,497.4 373.3,497.6 376.5,497.6 379.7,497.9 382.9,498.2 386.1,498.1 389.3,498.4 392.5,498.1 395.8,498 399,498.2 402.2,498.1 405.4,498.1 408.6,498 411.8,497.8 415,497.8 418.2,497.6 421.4,497.5 424.7,497.2 427.9,496.9 431.1,496.7 434.3,496.6 437.5,496.4 440.7,495.9 443.9,495.4 447.1,494.6 450.3,493.8 453.6,493.5 456.8,494.1 460,495 463.2,495.9 466.4,496.4 469.6,497 472.8,497.2 476,497.3 479.2,497.3 482.5,497.1 485.7,496.7 488.9,496.4 492.1,496.5 495.3,496.3 498.5,496 501.7,495.8 504.9,495.2 508.1,495 511.4,495 514.6,494.7 517.8,494.3 521,493.9 524.2,493.2 527.4,492.7 530.6,491.8 533.8,490.5 537,488.7 540.3,488 543.5,489.4 546.7,490.7 549.9,491.5 553.1,492.3 556.3,494.2 559.5,494.9 562.7,495 565.9,495 569.2,494.7 572.4,494.7 575.6,494.9 578.8,494.8 582,494.5 585.2,494.4 588.4,493.7 591.6,493.5 594.8,493.3 598.1,492.7 601.3,492.3 604.5,491.7 607.7,491.2 610.9,490.7 614.1,490.2 617.3,490.3 620.5,490.9 623.7,491.6 627,492.6 630.2,493.3 633.4,493.8 636.6,494.1 639.8,494.4 643,494.8 646.2,495.3 649.4,495.6 652.6,495.9 655.9,496.2 659.1,496.4 662.3,496.3 665.5,496.6 668.7,496.8 671.9,496.7 675.1,496.9 678.3,497.2 681.5,497.8 684.8,497.9 688,497.8 691.2,497.8 694.4,497.9 697.6,498.1 700.8,498.2 704,498.4 707.2,498.7 710.4,498.5 713.7,498.5 716.9,498.5 720.1,498.7 723.3,498.6 726.5,498.7 729.7,498.9 732.9,499.1 736.1,499.2 739.3,499.5 742.6,499.4 745.8,499.4 749,499.5 752.2,499.3 755.4,499.4 758.6,499.8 761.8,499.9 765,499.9 768.2,499.8 771.5,499.9 774.7,500 777.9,499.9 781.1,499.9 784.3,499.9 787.5,499.9 790.7,499.8 793.9,499.5 797.1,499.5 800.4,499.2 803.6,498.8 806.8,498.4 810,497.9 813.2,497 816.4,496 819.6,495.4 822.8,495 826,495.2 829.3,495.5 832.5,496.3 835.7,496.9 838.9,497.2 842.1,497.3 845.3,497.4 848.5,497.4 851.7,497.4 854.9,497.6 858.2,497.8 861.4,497.7 864.6,497.5 867.8,497.5 871,497.6 874.2,497.5 877.4,497.6 880.6,497.6 883.8,497.4 887.1,497.3 890.3,497.1 893.5,496.8 896.7,496.5 899.9,495.9 903.1,495.5 906.3,494.9 909.5,494.4 912.7,493.6 916,492.7 919.2,491.3 922.4,490.4 925.6,490.6 928.8,491.6 932,492.7 935.2,493.7 938.4,494.6 941.6,494.9 944.9,495.6 948.1,495.9 951.3,496.1 954.5,496.1 957.7,496 960.9,496.3 964.1,496.2 967.3,496.2 970.5,496 973.8,496.3 977,496.2 980.2,496.3 983.4,496.2 986.6,496.1 989.8,495.7 993,495.7 996.2,495.7 999.4,495.5 1002.7,495.4 1005.9,495.5 1009.1,495.7 1012.3,495.6 1015.5,495.6" stroke="#71397c"/>
<path d="M148.5,499.3 151.7,499.6 154.9,499.9 158.1,499.6 161.3,499.8 164.6,499.8 167.8,499.6 171,499.7 174.2,499.7 177.4,500 180.6,500 183.8,500.1 187,500.1 190.2,500 193.5,500.1 196.7,500.1 199.9,500.2 203.1,500 206.3,500.3 209.5,500.1 212.7,500.2 215.9,500.3 219.1,500.1 222.4,499.7 225.6,500 228.8,500.3 232,500.2 235.2,500.3 238.4,500.3 241.6,500 244.8,500.1 248,500.2 251.3,500 254.5,500.3 257.7,500.2 260.9,500.1 264.1,500.2 267.3,500.1 270.5,500 273.7,500.3 276.9,500.1 280.2,499.8 283.4,499.9 286.6,499.9 289.8,500 293,499.9 296.2,499.9 299.4,499.8 302.6,499.5 305.8,499.3 309.1,499.2 312.3,499.1 315.5,498.4 318.7,497.8 321.9,497.3 325.1,496.9 328.3,497.4 331.5,497.7 334.7,498 338,498.1 341.2,497.8 344.4,497.6 347.6,497.8 350.8,497.8 354,497.6 357.2,497.8 360.4,498 363.6,498 366.9,497.9 370.1,497.8 373.3,497.7 376.5,497.8 379.7,497.6 382.9,497.6 386.1,497.6 389.3,497.5 392.5,497.2 395.8,497.1 399,497.1 402.2,496.8 405.4,496.8 408.6,496.6 411.8,496.5 415,496.3 418.2,496.3 421.4,496.1 424.7,495.9 427.9,495.6 431.1,495.2 434.3,494.9 437.5,494.5 440.7,493.4 443.9,492.5 447.1,491.5 450.3,490.4 453.6,489.7 456.8,490 460,491.1 463.2,492.6 466.4,493.3 469.6,494.3 472.8,495.4 476,495.7 479.2,495.7 482.5,496.2 485.7,496.1 488.9,496.5 492.1,497 495.3,497.1 498.5,497.1 501.7,497.3 504.9,497.1 508.1,497.5 511.4,497.5 514.6,497.8 517.8,498 521,497.7 524.2,497.3 527.4,497.1 530.6,496.8 533.8,496.5 537,495.6 540.3,495.1 543.5,495.4 546.7,496.2 549.9,496.3 553.1,496.7 556.3,498 559.5,498.8 562.7,499 565.9,499.1 569.2,498.9 572.4,499 575.6,499 578.8,499.1 582,498.9 585.2,498.7 588.4,498.4 591.6,498.4 594.8,498.1 598.1,497.8 601.3,497.4 604.5,497 607.7,496.7 610.9,496 614.1,495.6 617.3,495.3 620.5,495.3 623.7,495.6 627,496 630.2,496.4 633.4,496.6 636.6,497.2 639.8,497.5 643,497.8 646.2,498 649.4,498 652.6,498.2 655.9,498.2 659.1,498.4 662.3,498.3 665.5,498.6 668.7,498.4 671.9,498.6 675.1,498.7 678.3,498.6 681.5,498.5 684.8,498.8 688,498.8 691.2,498.9 694.4,498.8 697.6,498.9 700.8,498.7 704,498.3 707.2,498.3 710.4,498.4 713.7,498.3 716.9,498.2 720.1,498.5 723.3,498.8 726.5,498.8 729.7,498.8 732.9,498.7 736.1,498.7 739.3,498.5 742.6,498.2 745.8,497.9 749,497.8 752.2,497.7 755.4,497.9 758.6,498 761.8,497.9 765,497.7 768.2,497.6 771.5,497.3 774.7,497.2 777.9,496.9 781.1,496.9 784.3,496.9 787.5,496.9 790.7,496.9 793.9,496.6 797.1,496.2 800.4,495.9 803.6,495.4 806.8,494.7 810,494.1 813.2,493.3 816.4,492.5 819.6,492 822.8,492.2 826,493.1 829.3,494.2 832.5,494.8 835.7,495.4 838.9,496 842.1,496.4 845.3,496.5 848.5,496.8 851.7,496.7 854.9,497 858.2,497.1 861.4,497.2 864.6,497.3 867.8,496.9 871,497 874.2,497.2 877.4,497.4 880.6,497.6 883.8,497.5 887.1,497.2 890.3,497.3 893.5,497.2 896.7,497.2 899.9,497 903.1,496.9 906.3,496.5 909.5,496.4 912.7,496.1 916,495.5 919.2,495 922.4,494.4 925.6,494.2 928.8,494.9 932,495.1 935.2,495.5 938.4,495.9 941.6,496.4 944.9,496.7 948.1,496.7 951.3,497.2 954.5,497.5 957.7,497.5 960.9,497.8 964.1,498 967.3,497.9 970.5,498 973.8,497.8 977,497.8 980.2,498 983.4,498.4 986.6,498.5 989.8,498.9 993,498.6 996.2,498.5 999.4,498.9 1002.7,498.8 1005.9,498.9 1009.1,499 1012.3,499.3 1015.5,499.4" stroke="#66b6d7"/>
<path d="M148.5,499.9 151.7,499.7 154.9,500.2 158.1,500.2 161.3,500.1 164.6,500.2 167.8,500.2 171,499.6 174.2,499.8 177.4,499.6 180.6,499.8 183.8,499.7 187,499.8 190.2,500.2 193.5,500.3 196.7,500.2 199.9,500.3 203.1,500.2 206.3,500.3 209.5,500.2 212.7,500 215.9,500.1 219.1,500 222.4,499.9 225.6,500 228.8,500.3 232,500.2 235.2,500.1 238.4,500 241.6,500.2 244.8,500 248,499.9 251.3,500.1 254.5,500 257.7,499.8 260.9,499.9 264.1,499.8 267.3,499.8 270.5,499.9 273.7,499.9 276.9,499.9 280.2,499.5 283.4,499.5 286.6,499.3 289.8,499.2 293,499.3 296.2,499.2 299.4,499.2 302.6,499 305.8,498.8 309.1,498.5 312.3,498.3 315.5,497.6 318.7,496.9 321.9,496.5 325.1,496.6 328.3,497.2 331.5,497.9 334.7,498.3 338,498.7 341.2,498.9 344.4,499.1 347.6,499.1 350.8,499.2 354,499.3 357.2,499.5 360.4,499.5 363.6,499.5 366.9,499.5 370.1,499.5 373.3,499.5 376.5,499.6 379.7,499.6 382.9,499.5 386.1,499.4 389.3,499.4 392.5,499 395.8,499.2 399,499 402.2,499.3 405.4,499.2 408.6,498.8 411.8,498.6 415,498.7 418.2,498.4 421.4,498.9 424.7,498.6 427.9,498.6 431.1,498.4 434.3,498.1 437.5,497.8 440.7,497.6 443.9,497.6 447.1,497.5 450.3,496.5 453.6,495.6 456.8,495 460,495.5 463.2,495.8 466.4,496.1 469.6,496.1 472.8,496.4 476,496.5 479.2,496.8 482.5,497 485.7,497.4 488.9,497.3 492.1,497.4 495.3,497.3 498.5,497.3 501.7,497.4 504.9,497.3 508.1,497.4 511.4,497.1 514.6,497 517.8,496.8 521,496.7 524.2,496.7 527.4,496.6 530.6,496.7 533.8,496.4 537,496 540.3,496.5 543.5,497.3 546.7,497.5 549.9,497.2 553.1,496.9 556.3,497.7 559.5,498.5 562.7,498.4 565.9,498.1 569.2,497.9 572.4,497.8 575.6,497.5 578.8,497.2 582,497.1 585.2,496.7 588.4,496.4 591.6,496.2 594.8,495.6 598.1,495 601.3,494.4 604.5,493.6 607.7,492.4 610.9,491.6 614.1,490.6 617.3,490.4 620.5,491.1 623.7,492.1 627,493.1 630.2,493.9 633.4,494.8 636.6,495.7 639.8,496.1 643,496.5 646.2,496.9 649.4,496.8 652.6,497.1 655.9,497.2 659.1,497.4 662.3,497.7 665.5,497.9 668.7,498.3 671.9,498.4 675.1,498.1 678.3,498.1 681.5,498.6 684.8,498.7 688,498.6 691.2,498.9 694.4,498.9 697.6,498.9 700.8,498.7 704,498.8 707.2,498.7 710.4,498.5 713.7,499 716.9,499 720.1,498.8 723.3,498.6 726.5,498.5 729.7,498.4 732.9,498.2 736.1,498.2 739.3,498.1 742.6,498.3 745.8,498.6 749,498.9 752.2,499 755.4,499.2 758.6,499.3 761.8,499.3 765,499.3 768.2,499.3 771.5,499.3 774.7,499.2 777.9,499.1 781.1,499 784.3,499.1 787.5,499 790.7,498.7 793.9,498.8 797.1,498.6 800.4,498.1 803.6,497.9 806.8,497.7 810,497.2 813.2,496.6 816.4,496 819.6,495.9 822.8,496.2 826,496.7 829.3,497.6 832.5,498.3 835.7,498.5 838.9,498.8 842.1,499.1 845.3,499.1 848.5,499.2 851.7,499.2 854.9,499.1 858.2,499.1 861.4,499.3 864.6,499.2 867.8,499.4 871,499.4 874.2,499.5 877.4,499.4 880.6,499.5 883.8,499.4 887.1,499.2 890.3,499.3 893.5,499.1 896.7,498.8 899.9,498.8 903.1,498.6 906.3,498.2 909.5,498 912.7,498.1 916,497.9 919.2,497.6 922.4,497.1 925.6,497.3 928.8,497.5 932,497.9 935.2,498.1 938.4,498.2 941.6,498.4 944.9,498.5 948.1,498.7 951.3,498.6 954.5,498.7 957.7,498.8 960.9,498.9 964.1,498.7 967.3,498.7 970.5,498.8 973.8,498.7 977,498.8 980.2,498.7 983.4,499.1 986.6,499 989.8,499 993,498.7 996.2,498.7 999.4,498.3 1002.7,498.6 1005.9,498.5 1009.1,498.4 1012.3,498.5 1015.5,498.6" stroke="#bb5d34"/>
<path d="M148.5,499.8 151.7,500 154.9,500 158.1,499.7 161.3,499.4 164.6,499.6 167.8,499.6 171,499.8 174.2,499.9 177.4,499.6 180.6,499.4 183.8,499.5 187,499.6 190.2,499.6 193.5,499.4 196.7,499.3 199.9,499.1 203.1,499 206.3,498.9 209.5,498.9 212.7,499 215.9,498.9 219.1,498.8 222.4,498.6 225.6,498.6 228.8,498.5 232,498.3 235.2,498.2 238.4,498.1 241.6,497.5 244.8,497.4 248,497 251.3,496.8 254.5,497.3 257.7,497.2 260.9,496.9 264.1,496.8 267.3,496.5 270.5,496.4 273.7,496.6 276.9,496.6 280.2,496.1 283.4,496 286.6,495.8 289.8,495.6 293,495.4 296.2,495.3 299.4,495.4 302.6,495.2 305.8,495.1 309.1,495 312.3,494.8 315.5,494.2 318.7,493.9 321.9,493.6 325.1,493.4 328.3,493.5 331.5,493.8 334.7,494.3 338,494.3 341.2,494.7 344.4,494.5 347.6,494.9 350.8,494.8 354,495.1 357.2,495.1 360.4,495.1 363.6,495.3 366.9,495.3 370.1,495.3 373.3,495.4 376.5,495.4 379.7,495.6 382.9,495.7 386.1,495.8 389.3,496 392.5,496.2 395.8,496.4 399,496.3 402.2,496.4 405.4,496.4 408.6,496.8 411.8,496.7 415,496.5 418.2,496.5 421.4,496.7 424.7,496.8 427.9,496.8 431.1,497.4 434.3,497.3 437.5,497.1 440.7,497.2 443.9,497.1 447.1,496.7 450.3,496.8 453.6,496.6 456.8,496.7 460,497.2 463.2,497.4 466.4,497.7 469.6,497.9 472.8,498.3 476,498.3 479.2,498.3 482.5,498.5 485.7,498.3 488.9,498.7 492.1,498.8 495.3,498.9 498.5,499 501.7,498.9 504.9,499.1 508.1,499 511.4,499 514.6,498.8 517.8,498.8 521,498.5 524.2,498.2 527.4,497.9 530.6,497.3 533.8,496.2 537,495 540.3,494.5 543.5,495.2 546.7,496.7 549.9,497.5 553.1,497 556.3,496.4 559.5,496.8 562.7,497.4 565.9,497.8 569.2,497.9 572.4,498.1 575.6,498.1 578.8,498.1 582,498.2 585.2,498.1 588.4,497.8 591.6,497.9 594.8,497.7 598.1,497.5 601.3,497.3 604.5,497.1 607.7,496.9 610.9,496.7 614.1,496.6 617.3,496.7 620.5,497.1 623.7,497.4 627,497.7 630.2,498 633.4,498.3 636.6,498.5 639.8,498.7 643,498.8 646.2,498.5 649.4,498.5 652.6,498.4 655.9,498.1 659.1,498.1 662.3,498.3 665.5,498.4 668.7,498.4 671.9,498.4 675.1,498.6 678.3,498.5 681.5,498.2 684.8,498.3 688,498.1 691.2,498.1 694.4,498 697.6,497.8 700.8,497.6 704,497.8 707.2,497.6 710.4,497.5 713.7,497.3 716.9,497.1 720.1,496.9 723.3,497.1 726.5,497 729.7,496.7 732.9,496.5 736.1,496.3 739.3,496.4 742.6,496.4 745.8,496.3 749,496.2 752.2,496 755.4,495.8 758.6,495.9 761.8,495.6 765,495.7 768.2,495.6 771.5,495.3 774.7,495.3 777.9,495.3 781.1,495.3 784.3,494.8 787.5,494.7 790.7,494.6 793.9,494.5 797.1,494.7 800.4,494.8 803.6,494.5 806.8,494.6 810,494.4 813.2,494.1 816.4,493.7 819.6,493.6 822.8,493.5 826,493.5 829.3,493.9 832.5,494.1 835.7,494.4 838.9,494.3 842.1,494.7 845.3,494.8 848.5,495 851.7,495.4 854.9,495.8 858.2,496.1 861.4,496.3 864.6,496.7 867.8,496.8 871,496.9 874.2,497 877.4,497.1 880.6,497.2 883.8,497.3 887.1,497.4 890.3,497.3 893.5,497.4 896.7,497.5 899.9,497.8 903.1,497.8 906.3,498 909.5,498 912.7,498.1 916,498 919.2,497.5 922.4,497.4 925.6,497.5 928.8,497.8 932,498.4 935.2,498.9 938.4,498.9 941.6,498.8 944.9,498.7 948.1,498.9 951.3,498.8 954.5,499.2 957.7,499.5 960.9,499.4 964.1,499.7 967.3,499.9 970.5,499.7 973.8,499.9 977,499.9 980.2,499.8 983.4,500 986.6,499.9 989.8,499.5 993,499.7 996.2,499.5 999.4,499.7 1002.7,499.6 1005.9,500.2 1009.1,500 1012.3,499.9 1015.5,499.6" stroke="#dbb14c"/>
<path d="M148.5,497.9 151.7,497.7 154.9,497.6 158.1,497.4 161.3,497.5 164.6,497.7 167.8,497.5 171,497.5 174.2,497.5 177.4,497.2 180.6,497.3 183.8,497.2 187,497.2 190.2,497 193.5,497 196.7,496.9 199.9,496.9 203.1,496.8 206.3,496.5 209.5,496.7 212.7,496.5 215.9,496.4 219.1,496.3 222.4,496.5 225.6,496.4 228.8,496.4 232,496.8 235.2,496.7 238.4,496.8 241.6,496.7 244.8,496.8 248,496.9 251.3,496.4 254.5,496.5 257.7,496.7 260.9,496.9 264.1,496.9 267.3,496.9 270.5,497.2 273.7,497.4 276.9,497.5 280.2,497.4 283.4,497.6 286.6,497.4 289.8,497.7 293,497.7 296.2,497.9 299.4,497.9 302.6,498 305.8,497.7 309.1,498 312.3,497.7 315.5,497.8 318.7,497.8 321.9,497.4 325.1,497.7 328.3,497.7 331.5,497.9 334.7,498.3 338,498.6 341.2,499.1 344.4,499.1 347.6,499.2 350.8,499.1 354,499.2 357.2,499.4 360.4,499.5 363.6,499.5 366.9,499.6 370.1,499.5 373.3,499.7 376.5,499.8 379.7,499.9 382.9,499.9 386.1,500 389.3,499.3 392.5,499.5 395.8,499.4 399,499.6 402.2,499.5 405.4,499.2 408.6,499.7 411.8,499.5 415,499.9 418.2,499.9 421.4,499.8 424.7,499.4 427.9,499.4 431.1,499.2 434.3,499.2 437.5,499.1 440.7,498.5 443.9,498.3 447.1,498 450.3,497.2 453.6,496.6 456.8,496.8 460,497.3 463.2,498.1 466.4,498.2 469.6,498.6 472.8,498.7 476,498.7 479.2,498.3 482.5,498.8 485.7,499.2 488.9,499.4 492.1,499.1 495.3,498.8 498.5,498.8 501.7,499.3 504.9,499.5 508.1,499.4 511.4,499.4 514.6,499.4 517.8,499.1 521,498.8 524.2,498.7 527.4,498.5 530.6,498.5 533.8,497.7 537,496.8 540.3,496.4 543.5,496.7 546.7,497.1 549.9,497.3 553.1,496.7 556.3,496.1 559.5,496 562.7,495.8 565.9,496 569.2,495.9 572.4,495.9 575.6,495.5 578.8,496.1 582,496.3 585.2,496.1 588.4,495.9 591.6,495.7 594.8,495.4 598.1,495.4 601.3,495.1 604.5,495 607.7,494.9 610.9,494.7 614.1,494.6 617.3,494.6 620.5,495 623.7,495.1 627,495.3 630.2,495.7 633.4,495.8 636.6,495.9 639.8,496.1 643,495.9 646.2,495.6 649.4,495.7 652.6,495.9 655.9,495.9 659.1,496 662.3,496.2 665.5,496.5 668.7,496.8 671.9,496.9 675.1,497 678.3,497.1 681.5,497.2 684.8,497.2 688,497 691.2,497.2 694.4,497.3 697.6,497.4 700.8,497.5 704,497.8 707.2,497.7 710.4,497.9 713.7,497.8 716.9,498.2 720.1,498.3 723.3,498.2 726.5,498.3 729.7,498.6 732.9,498.5 736.1,498.7 739.3,498.4 742.6,498.8 745.8,498.5 749,499 752.2,498.9 755.4,498.9 758.6,498.9 761.8,498.8 765,498.6 768.2,498.8 771.5,499.1 774.7,499.1 777.9,499.5 781.1,499.3 784.3,499.3 787.5,499.4 790.7,499.5 793.9,499.5 797.1,499.3 800.4,499 803.6,499 806.8,499 810,499.3 813.2,499 816.4,498.8 819.6,498.8 822.8,499.1 826,499 829.3,499.5 832.5,499.5 835.7,499.9 838.9,499.9 842.1,499.9 845.3,500.1 848.5,499.9 851.7,499.8 854.9,499.6 858.2,499.7 861.4,499.5 864.6,499.7 867.8,500 871,500.1 874.2,499.9 877.4,500 880.6,499.9 883.8,499.9 887.1,499.7 890.3,499.7 893.5,499.7 896.7,499.5 899.9,499.4 903.1,499 906.3,499.1 909.5,498.8 912.7,498.6 916,498.2 919.2,497.8 922.4,497.2 925.6,497.1 928.8,497.4 932,497.5 935.2,497.7 938.4,498.3 941.6,498.4 944.9,498.5 948.1,498.4 951.3,498.3 954.5,498.4 957.7,498.3 960.9,498.2 964.1,498 967.3,498.1 970.5,498.1 973.8,497.9 977,498.1 980.2,497.8 983.4,498 986.6,498 989.8,497.9 993,497.6 996.2,497.6 999.4,497.2 1002.7,497.5 1005.9,497.4 1009.1,497.1 1012.3,497 1015.5,497.1" stroke="#1b6a9f"/>
<path d="M148.5,499.1 151.7,498.8 154.9,499 158.1,498.9 161.3,498.9 164.6,498.7 167.8,498.6 171,498.8 174.2,498.8 177.4,498.7 180.6,498.6 183.8,498.7 187,498.6 190.2,498.6 193.5,498.4 196.7,498.5 199.9,498.4 203.1,498.2 206.3,498.2 209.5,498.2 212.7,498.2 215.9,498.1 219.1,498.1 222.4,498.1 225.6,498.4 228.8,498.6 232,498.5 235.2,498.5 238.4,498.5 241.6,498.6 244.8,498.2 248,498.3 251.3,498.6 254.5,498.7 257.7,498.6 260.9,498.3 264.1,498.4 267.3,498.6 270.5,498.7 273.7,498.7 276.9,498.7 280.2,498.8 283.4,498.6 286.6,498.6 289.8,498.7 293,498.7 296.2,498.7 299.4,498.5 302.6,498.2 305.8,498.1 309.1,498.1 312.3,497.9 315.5,497.8 318.7,497.7 321.9,497.5 325.1,497.2 328.3,497.3 331.5,497.3 334.7,498.2 338,498.4 341.2,498.6 344.4,498.8 347.6,498.9 350.8,498.9 354,499.2 357.2,499.2 360.4,499.3 363.6,499.3 366.9,499 370.1,499.3 373.3,499.6 376.5,499.6 379.7,499.6 382.9,499.7 386.1,499.4 389.3,499.6 392.5,499.7 395.8,499.6 399,499.6 402.2,499.6 405.4,499.9 408.6,499.8 411.8,499.8 415,500 418.2,499.7 421.4,499.7 424.7,499.4 427.9,499.5 431.1,499.7 434.3,499.9 437.5,500.2 440.7,500.2 443.9,499.9 447.1,499.6 450.3,499.5 453.6,499.2 456.8,499 460,499.1 463.2,499.2 466.4,499.3 469.6,499.3 472.8,499.5 476,499.5 479.2,499.2 482.5,499.2 485.7,499.1 488.9,499.1 492.1,498.9 495.3,499 498.5,499.3 501.7,499.2 504.9,499.5 508.1,499.6 511.4,499.2 514.6,499 517.8,499.1 521,499 524.2,499 527.4,499 530.6,499 533.8,498.9 537,498.8 540.3,499 543.5,499.3 546.7,499.5 549.9,499.6 553.1,499.2 556.3,498.6 559.5,498.8 562.7,498.9 565.9,498.9 569.2,498.8 572.4,498.8 575.6,498.5 578.8,498.6 582,498.4 585.2,498.3 588.4,498.1 591.6,498.1 594.8,497.8 598.1,497.6 601.3,497.3 604.5,496.8 607.7,496.5 610.9,495.9 614.1,495.6 617.3,495.9 620.5,496.1 623.7,496.6 627,497.1 630.2,497.2 633.4,497.5 636.6,497.8 639.8,497.8 643,497.9 646.2,497.9 649.4,497.9 652.6,497.9 655.9,497.9 659.1,498.1 662.3,498.1 665.5,498.2 668.7,498.3 671.9,498.4 675.1,498.3 678.3,498.3 681.5,498.3 684.8,498.3 688,498.4 691.2,498.4 694.4,498.3 697.6,498.3 700.8,498.4 704,498.3 707.2,498.4 710.4,498.4 713.7,498.3 716.9,498.2 720.1,498.3 723.3,498.1 726.5,498.5 729.7,498.4 732.9,498.5 736.1,498.4 739.3,498.6 742.6,498.5 745.8,498.3 749,498.5 752.2,498.3 755.4,498.5 758.6,498.1 761.8,498 765,498 768.2,497.9 771.5,498 774.7,498.1 777.9,498.4 781.1,498.5 784.3,498.4 787.5,498.4 790.7,498.5 793.9,498.4 797.1,498.2 800.4,498.1 803.6,498.3 806.8,498 810,497.9 813.2,497.4 816.4,497.3 819.6,497.3 822.8,497.3 826,497.4 829.3,498 832.5,498 835.7,498.1 838.9,498.5 842.1,498.8 845.3,498.7 848.5,499 851.7,499.1 854.9,499.2 858.2,499.2 861.4,499.2 864.6,499.5 867.8,499.6 871,499.9 874.2,499.9 877.4,499.9 880.6,499.9 883.8,500 887.1,499.8 890.3,499.4 893.5,499.2 896.7,499.3 899.9,499.1 903.1,498.9 906.3,499.3 909.5,499.2 912.7,499.3 916,499.2 919.2,499.1 922.4,498.9 925.6,498.9 928.8,499.2 932,499.3 935.2,499.5 938.4,499.6 941.6,499.4 944.9,499.8 948.1,499.8 951.3,499.9 954.5,500 957.7,499.9 960.9,499.5 964.1,499.5 967.3,499.7 970.5,499.7 973.8,499.8 977,499.9 980.2,500.3 983.4,500.3 986.6,500.3 989.8,500.2 993,500.3 996.2,500.1 999.4,499.9 1002.7,499.9 1005.9,499.8 1009.1,499.9 1012.3,499.8 1015.5,500.1" stroke="#852235"/>
<path d="M148.5,494.4 151.7,494.3 154.9,494.4 158.1,494.3 161.3,494.5 164.6,494.4 167.8,494.4 171,494.8 174.2,494.6 177.4,494.7 180.6,494.9 183.8,495.2 187,495.5 190.2,495.7 193.5,495.8 196.7,496 199.9,496 203.1,496.2 206.3,496.3 209.5,496.5 212.7,496.6 215.9,496.8 219.1,496.8 222.4,496.9 225.6,496.9 228.8,497 232,497 235.2,497.2 238.4,497.3 241.6,497.7 244.8,497.8 248,498 251.3,498.3 254.5,498.4 257.7,498.5 260.9,498.6 264.1,498.7 267.3,498.7 270.5,498.9 273.7,499 276.9,499.1 280.2,499.1 283.4,499.2 286.6,499.1 289.8,499.1 293,499 296.2,499.1 299.4,499.5 302.6,499.6 305.8,499.4 309.1,499.6 312.3,499.4 315.5,499.5 318.7,499.3 321.9,498.9 325.1,498.7 328.3,498.8 331.5,498.7 334.7,498.6 338,498.6 341.2,498.6 344.4,498.7 347.6,498.4 350.8,498.5 354,498.7 357.2,498.9 360.4,498.8 363.6,498.8 366.9,499.2 370.1,499.1 373.3,499.1 376.5,499.2 379.7,499.5 382.9,499.3 386.1,499.5 389.3,499.3 392.5,499.2 395.8,499 399,499.1 402.2,498.9 405.4,498.7 408.6,498.6 411.8,498.9 415,498.9 418.2,498.7 421.4,498.8 424.7,498.8 427.9,498.7 431.1,498.2 434.3,498.2 437.5,498.3 440.7,497.9 443.9,497.7 447.1,497.4 450.3,496.9 453.6,496.6 456.8,497.1 460,497.3 463.2,497.9 466.4,498.3 469.6,498.4 472.8,498.4 476,498.1 479.2,498.1 482.5,498.1 485.7,497.8 488.9,497.6 492.1,497.6 495.3,497 498.5,497 501.7,496.6 504.9,496.4 508.1,496.3 511.4,496 514.6,495.7 517.8,495.4 521,495.1 524.2,494.8 527.4,494.6 530.6,494 533.8,493.5 537,492.7 540.3,492.4 543.5,493.1 546.7,493.6 549.9,494.2 553.1,493.7 556.3,493.6 559.5,493.9 562.7,494.2 565.9,494.2 569.2,494.4 572.4,494.5 575.6,494.5 578.8,494.3 582,494 585.2,493.9 588.4,493.8 591.6,493.8 594.8,493.7 598.1,493.6 601.3,493.5 604.5,493.4 607.7,493.5 610.9,493.2 614.1,493.2 617.3,493.2 620.5,493.2 623.7,493.5 627,493.6 630.2,493.6 633.4,493.8 636.6,494.1 639.8,494.3 643,494.3 646.2,494.3 649.4,494.5 652.6,494.5 655.9,494.8 659.1,495.1 662.3,495.3 665.5,495.4 668.7,495.6 671.9,495.8 675.1,495.9 678.3,496.1 681.5,496.3 684.8,496.4 688,496.4 691.2,496.6 694.4,496.8 697.6,496.9 700.8,497 704,497.3 707.2,497.3 710.4,497.3 713.7,497.3 716.9,497.5 720.1,497.8 723.3,497.7 726.5,498.1 729.7,498.2 732.9,498.1 736.1,498.1 739.3,498.5 742.6,498.6 745.8,498.4 749,498.4 752.2,498.6 755.4,498.8 758.6,498.9 761.8,498.9 765,498.6 768.2,498.5 771.5,498.4 774.7,498.5 777.9,498.8 781.1,498.9 784.3,498.9 787.5,498.8 790.7,498.6 793.9,498.5 797.1,498.4 800.4,498.1 803.6,498.1 806.8,497.8 810,497.7 813.2,497.4 816.4,497 819.6,496.8 822.8,496.9 826,497.3 829.3,497.6 832.5,498 835.7,498.3 838.9,498.8 842.1,499 845.3,499.2 848.5,499.1 851.7,499.2 854.9,499.4 858.2,499.7 861.4,499.3 864.6,499.2 867.8,499.1 871,499.1 874.2,499.3 877.4,499.5 880.6,499.8 883.8,499.9 887.1,499.7 890.3,499.5 893.5,499.4 896.7,499.2 899.9,499.2 903.1,499 906.3,498.7 909.5,498.7 912.7,498.4 916,498.1 919.2,497.7 922.4,497.3 925.6,497 928.8,497 932,497.3 935.2,497.6 938.4,497.6 941.6,497.8 944.9,497.7 948.1,497.9 951.3,497.8 954.5,497.7 957.7,497.9 960.9,497.9 964.1,497.7 967.3,497.8 970.5,497.4 973.8,497.4 977,497 980.2,496.7 983.4,496.5 986.6,496.4 989.8,496.3 993,496 996.2,496.1 999.4,496.1 1002.7,496.1 1005.9,496.1 1009.1,496.1 1012.3,496 1015.5,495.7" stroke="#7ea34c"/>
<path d="M148.5,388.7 151.7,386.7 154.9,385.7 158.1,385.7 161.3,386.6 164.6,388.5 167.8,391.2 171,394.5 174.2,398.2 177.4,402.2 180.6,406.3 183.8,410.3 187,414.3 190.2,418.1 193.5,421.8 196.7,425.2 199.9,428.2 203.1,430.8 206.3,432.7 209.5,434.1 212.7,435.4 215.9,437.2 219.1,439.8 222.4,443 225.6,446.1 228.8,448.7 232,450.8 235.2,452.5 238.4,454 241.6,455.3 244.8,456.5 248,457.6 251.3,458.7 254.5,459.7 257.7,460.6 260.9,461.4 264.1,462.2 267.3,462.9 270.5,463.6 273.7,464.2 276.9,464.7 280.2,465.2 283.4,465.6 286.6,465.9 289.8,466.1 293,466.2 296.2,466.1 299.4,465.9 302.6,465.5 305.8,464.7 309.1,463.6 312.3,461.9 315.5,459.4 318.7,456.1 321.9,453.1 325.1,452.8 328.3,456.1 331.5,460.5 334.7,464.1 338,466.8 341.2,468.9 344.4,470.5 347.6,471.9 350.8,473.2 354,474.4 357.2,475.6 360.4,476.8 363.6,478 366.9,479.1 370.1,480.3 373.3,481.4 376.5,482.4 379.7,483.5 382.9,484.4 386.1,485.3 389.3,486 392.5,486.6 395.8,487.1 399,487.5 402.2,487.7 405.4,487.9 408.6,488.1 411.8,488.1 415,488.2 418.2,488.1 421.4,488 424.7,487.8 427.9,487.5 431.1,487.2 434.3,486.7 437.5,486 440.7,485.1 443.9,483.8 447.1,482 450.3,479.7 453.6,477.7 456.8,478.3 460,480.9 463.2,483.5 466.4,485.4 469.6,486.8 472.8,487.8 476,488.7 479.2,489.4 482.5,490.1 485.7,490.6 488.9,491.2 492.1,491.7 495.3,492.3 498.5,492.8 501.7,493.2 504.9,493.6 508.1,493.8 511.4,494 514.6,494.1 517.8,494.2 521,494.2 524.2,494 527.4,493.6 530.6,492.9 533.8,491.6 537,489.8 540.3,489.4 543.5,491.3 546.7,493.6 549.9,495.2 553.1,496.4 556.3,497.3 559.5,497.9 562.7,498.5 565.9,498.9 569.2,499.1 572.4,499.3 575.6,499.3 578.8,499.2 582,498.9 585.2,498.6 588.4,498.3 591.6,497.8 594.8,497.2 598.1,496.6 601.3,495.8 604.5,494.7 607.7,493.6 610.9,492.4 614.1,491.4 617.3,491.2 620.5,491.6 623.7,492.4 627,493.3 630.2,494.1 633.4,494.8 636.6,495.4 639.8,495.9 643,496.3 646.2,496.7 649.4,497 652.6,497.2 655.9,497.4 659.1,497.6 662.3,497.8 665.5,498 668.7,498.1 671.9,498.3 675.1,498.4 678.3,498.5 681.5,498.6 684.8,498.7 688,498.8 691.2,498.9 694.4,499 697.6,499 700.8,499.1 704,499.2 707.2,499.3 710.4,499.3 713.7,499.4 716.9,499.5 720.1,499.5 723.3,499.6 726.5,499.7 729.7,499.7 732.9,499.8 736.1,499.8 739.3,499.9 742.6,500 745.8,500 749,500.1 752.2,500.1 755.4,500.2 758.6,500.2 761.8,500.2 765,500.2 768.2,500.2 771.5,500.1 774.7,500.1 777.9,500 781.1,499.8 784.3,499.7 787.5,499.5 790.7,499.3 793.9,499.1 797.1,498.8 800.4,498.4 803.6,498 806.8,497.4 810,496.6 813.2,495.7 816.4,494.6 819.6,493.7 822.8,493.6 826,494.2 829.3,495 832.5,495.8 835.7,496.5 838.9,497 842.1,497.4 845.3,497.7 848.5,498 851.7,498.2 854.9,498.4 858.2,498.6 861.4,498.7 864.6,498.9 867.8,499 871,499.1 874.2,499.2 877.4,499.3 880.6,499.4 883.8,499.6 887.1,499.7 890.3,499.7 893.5,499.8 896.7,499.9 899.9,499.9 903.1,499.7 906.3,499.5 909.5,499.1 912.7,498.5 916,497.7 919.2,496.6 922.4,495.5 925.6,494.9 928.8,495 932,495.2 935.2,495.3 938.4,495.3 941.6,495 944.9,494.5 948.1,493.8 951.3,492.9 954.5,491.7 957.7,490.3 960.9,488.7 964.1,486.9 967.3,485 970.5,483.2 973.8,481.4 977,479.7 980.2,478.2 983.4,477 986.6,475.9 989.8,475 993,474.3 996.2,473.8 999.4,473.4 1002.7,473 1005.9,472.8 1009.1,472.6 1012.3,472.5 1015.5,472.4" stroke="#71397c"/>
<path d="M148.5,421.5 151.7,420.3 154.9,419.7 158.1,419.7 161.3,420.2 164.6,421.4 167.8,423 171,425.1 174.2,427.4 177.4,429.9 180.6,432.4 183.8,435 187,437.6 190.2,440.1 193.5,442.4 196.7,444.7 199.9,446.7 203.1,448.5 206.3,449.9 209.5,451 212.7,452.1 215.9,453.4 219.1,455.1 222.4,457 225.6,458.9 228.8,460.5 232,461.8 235.2,462.9 238.4,463.9 241.6,464.8 244.8,465.7 248,466.4 251.3,467.2 254.5,467.8 257.7,468.5 260.9,469.1 264.1,469.6 267.3,470.1 270.5,470.6 273.7,471 276.9,471.4 280.2,471.7 283.4,472 286.6,472.2 289.8,472.4 293,472.5 296.2,472.6 299.4,472.5 302.6,472.3 305.8,471.9 309.1,471.3 312.3,470.3 315.5,468.8 318.7,466.9 321.9,465.4 325.1,466.1 328.3,469.4 331.5,473.4 334.7,476.9 338,479.6 341.2,481.8 344.4,483.6 347.6,485.1 350.8,486.5 354,487.7 357.2,488.8 360.4,489.9 363.6,490.8 366.9,491.6 370.1,492.3 373.3,492.9 376.5,493.3 379.7,493.6 382.9,493.9 386.1,494.1 389.3,494.2 392.5,494.3 395.8,494.4 399,494.4 402.2,494.4 405.4,494.4 408.6,494.3 411.8,494.2 415,494.1 418.2,493.9 421.4,493.7 424.7,493.5 427.9,493.2 431.1,492.8 434.3,492.4 437.5,491.8 440.7,491 443.9,489.9 447.1,488.4 450.3,486.6 453.6,485.4 456.8,486.3 460,488.8 463.2,491.1 466.4,492.7 469.6,493.8 472.8,494.7 476,495.3 479.2,495.8 482.5,496.1 485.7,496.3 488.9,496.4 492.1,496.4 495.3,496.3 498.5,496.1 501.7,495.9 504.9,495.7 508.1,495.4 511.4,495.2 514.6,494.9 517.8,494.6 521,494.3 524.2,493.8 527.4,493.3 530.6,492.4 533.8,491.3 537,489.8 540.3,489.9 543.5,492.4 546.7,494.3 549.9,495.4 553.1,495.8 556.3,495.8 559.5,495.5 562.7,495.2 565.9,494.9 569.2,494.6 572.4,494.2 575.6,493.9 578.8,493.5 582,493.1 585.2,492.6 588.4,492 591.6,491.4 594.8,490.6 598.1,489.7 601.3,488.6 604.5,487.3 607.7,485.8 610.9,484.3 614.1,483.4 617.3,483.5 620.5,484.6 623.7,486.2 627,487.7 630.2,489.1 633.4,490.2 636.6,491.1 639.8,491.9 643,492.5 646.2,493 649.4,493.5 652.6,493.9 655.9,494.2 659.1,494.5 662.3,494.8 665.5,495 668.7,495.2 671.9,495.4 675.1,495.6 678.3,495.8 681.5,495.9 684.8,496.1 688,496.2 691.2,496.4 694.4,496.5 697.6,496.6 700.8,496.6 704,496.7 707.2,496.7 710.4,496.7 713.7,496.6 716.9,496.5 720.1,496.5 723.3,496.4 726.5,496.2 729.7,496.1 732.9,496 736.1,495.9 739.3,495.7 742.6,495.6 745.8,495.4 749,495.3 752.2,495.1 755.4,494.9 758.6,494.7 761.8,494.5 765,494.3 768.2,494 771.5,493.8 774.7,493.4 777.9,493.1 781.1,492.7 784.3,492.2 787.5,491.7 790.7,491.1 793.9,490.3 797.1,489.4 800.4,488.3 803.6,486.9 806.8,485.1 810,482.8 813.2,479.9 816.4,476.8 819.6,474.5 822.8,474.7 826,477.2 829.3,480.2 832.5,482.9 835.7,485.1 838.9,486.8 842.1,488.1 845.3,489.2 848.5,490.1 851.7,490.8 854.9,491.4 858.2,492 861.4,492.4 864.6,492.8 867.8,493.2 871,493.6 874.2,493.9 877.4,494.2 880.6,494.5 883.8,494.8 887.1,495 890.3,495.3 893.5,495.5 896.7,495.7 899.9,495.8 903.1,495.6 906.3,495.2 909.5,494.5 912.7,493.5 916,492 919.2,490 922.4,488 925.6,487 928.8,487.5 932,488.5 935.2,489.4 938.4,490.1 941.6,490.5 944.9,490.8 948.1,490.9 951.3,490.7 954.5,490.4 957.7,489.9 960.9,489.2 964.1,488.2 967.3,487 970.5,485.6 973.8,484.2 977,482.7 980.2,481.3 983.4,480 986.6,478.9 989.8,478.1 993,477.4 996.2,476.8 999.4,476.5 1002.7,476.2 1005.9,476 1009.1,475.9 1012.3,475.8 1015.5,475.7" stroke="#bb5d34"/>
<path d="M148.5,460.5 151.7,458.9 154.9,457.7 158.1,457.1 161.3,457 164.6,457.6 167.8,458.7 171,460.2 174.2,461.8 177.4,463.5 180.6,465.1 183.8,466.7 187,468 190.2,469.1 193.5,470 196.7,470.4 199.9,470.3 203.1,469.6 206.3,468.6 209.5,467.3 212.7,466.3 215.9,465.8 219.1,466.3 222.4,467.7 225.6,469.7 228.8,472 232,474.1 235.2,475.8 238.4,477 241.6,477.9 244.8,478.4 248,478.7 251.3,478.9 254.5,479 257.7,479.1 260.9,479.1 264.1,479.1 267.3,479.1 270.5,479 273.7,478.9 276.9,478.8 280.2,478.6 283.4,478.4 286.6,478.2 289.8,477.8 293,477.4 296.2,476.8 299.4,476.1 302.6,475.2 305.8,474 309.1,472.4 312.3,470.2 315.5,467.2 318.7,463.6 321.9,460.7 325.1,461.6 328.3,467.2 331.5,474 334.7,479.6 338,483.9 341.2,487.2 344.4,489.7 347.6,491.8 350.8,493.4 354,494.8 357.2,496 360.4,496.9 363.6,497.6 366.9,498 370.1,498.2 373.3,498.2 376.5,498.1 379.7,497.9 382.9,497.7 386.1,497.5 389.3,497.2 392.5,496.9 395.8,496.6 399,496.3 402.2,496 405.4,495.7 408.6,495.3 411.8,494.9 415,494.5 418.2,494 421.4,493.4 424.7,492.7 427.9,492 431.1,491 434.3,489.9 437.5,488.4 440.7,486.5 443.9,483.9 447.1,480.4 450.3,476 453.6,472.7 456.8,474.7 460,480.5 463.2,485.7 466.4,489.5 469.6,492.2 472.8,494.1 476,495.6 479.2,496.7 482.5,497.7 485.7,498.4 488.9,498.9 492.1,499.2 495.3,499.3 498.5,499.1 501.7,498.8 504.9,498.4 508.1,497.9 511.4,497.5 514.6,496.9 517.8,496.3 521,495.6 524.2,494.7 527.4,493.5 530.6,491.9 533.8,489.5 537,486.5 540.3,486.3 543.5,490.9 546.7,494.7 549.9,496.9 553.1,498.1 556.3,498.4 559.5,498.2 562.7,497.7 565.9,497.2 569.2,496.6 572.4,496 575.6,495.3 578.8,494.7 582,493.9 585.2,493.1 588.4,492.1 591.6,491 594.8,489.7 598.1,488.2 601.3,486.3 604.5,484.1 607.7,481.6 610.9,479.2 614.1,477.7 617.3,477.9 620.5,479.8 623.7,482.4 627,485 630.2,487.2 633.4,489.1 636.6,490.7 639.8,492 643,493 646.2,493.9 649.4,494.7 652.6,495.3 655.9,495.9 659.1,496.4 662.3,496.9 665.5,497.3 668.7,497.7 671.9,498 675.1,498.3 678.3,498.6 681.5,498.9 684.8,499.1 688,499.4 691.2,499.5 694.4,499.7 697.6,499.8 700.8,499.8 704,499.8 707.2,499.6 710.4,499.5 713.7,499.3 716.9,499.2 720.1,499 723.3,498.8 726.5,498.5 729.7,498.3 732.9,498.1 736.1,497.9 739.3,497.6 742.6,497.4 745.8,497.1 749,496.8 752.2,496.5 755.4,496.2 758.6,495.9 761.8,495.5 765,495.1 768.2,494.6 771.5,494.2 774.7,493.6 777.9,493 781.1,492.3 784.3,491.6 787.5,490.7 790.7,489.6 793.9,488.4 797.1,486.9 800.4,485 803.6,482.7 806.8,479.7 810,475.9 813.2,471.2 816.4,466.3 819.6,463 822.8,463.8 826,468.2 829.3,473.6 832.5,478.3 835.7,482 838.9,484.9 842.1,487.2 845.3,489.1 848.5,490.6 851.7,491.9 854.9,493 858.2,494 861.4,494.9 864.6,495.6 867.8,496.3 871,497 874.2,497.6 877.4,498 880.6,498.3 883.8,498.4 887.1,498.1 890.3,497.6 893.5,496.7 896.7,495.7 899.9,494.4 903.1,492.7 906.3,490.6 909.5,487.8 912.7,484.1 916,479.2 919.2,473 922.4,467.3 925.6,465.7 928.8,468.8 932,473.3 935.2,477.3 938.4,480.5 941.6,482.9 944.9,484.8 948.1,486.3 951.3,487.5 954.5,488.5 957.7,489.3 960.9,490 964.1,490.6 967.3,491.1 970.5,491.6 973.8,492 977,492.4 980.2,492.7 983.4,493 986.6,493.3 989.8,493.6 993,493.8 996.2,494 999.4,494.2 1002.7,494.4 1005.9,494.6 1009.1,494.7 1012.3,494.9 1015.5,495" stroke="#852235"/>
<path d="M148.5,485.4 151.7,485.8 154.9,486 158.1,486.3 161.3,486.3 164.6,486.6 167.8,486.6 171,486.9 174.2,487.1 177.4,487.4 180.6,487.7 183.8,488.1 187,488.6 190.2,489.1 193.5,489.3 196.7,489.8 199.9,489.7 203.1,489.9 206.3,490.1 209.5,490.7 212.7,491 215.9,491.2 219.1,491.4 222.4,491.6 225.6,491.8 228.8,491.8 232,491.9 235.2,492.3 238.4,492.5 241.6,492.6 244.8,492.7 248,492.7 251.3,492.8 254.5,492.7 257.7,492.9 260.9,493 264.1,492.9 267.3,493.1 270.5,493.1 273.7,492.9 276.9,492.9 280.2,492.8 283.4,492.6 286.6,492.3 289.8,492.2 293,492 296.2,491.7 299.4,491.4 302.6,491.3 305.8,491 309.1,491 312.3,490.6 315.5,489.6 318.7,488.9 321.9,488.1 325.1,487.9 328.3,489.2 331.5,490.6 334.7,491.9 338,492.8 341.2,493.3 344.4,493.7 347.6,493.9 350.8,494.1 354,494.5 357.2,494.7 360.4,495.2 363.6,495 366.9,495.2 370.1,495.3 373.3,495.3 376.5,495.2 379.7,495 382.9,494.8 386.1,494.5 389.3,494.4 392.5,494.5 395.8,494.3 399,494.3 402.2,494.2 405.4,494.4 408.6,494.4 411.8,494 415,493.5 418.2,493.5 421.4,493.4 424.7,493.3 427.9,493 431.1,492.9 434.3,492.9 437.5,492.8 440.7,492.6 443.9,492.1 447.1,491.4 450.3,490.6 453.6,490 456.8,490.5 460,491.7 463.2,492.9 466.4,493.6 469.6,494.1 472.8,494.4 476,494.8 479.2,494.9 482.5,495.1 485.7,494.9 488.9,495.2 492.1,495.2 495.3,495 498.5,494.9 501.7,494.8 504.9,494.7 508.1,494.5 511.4,494.3 514.6,494.3 517.8,494.1 521,493.7 524.2,493.7 527.4,493.2 530.6,492.6 533.8,492.1 537,491.6 540.3,491.7 543.5,493.2 546.7,494.1 549.9,494.7 553.1,494.6 556.3,494.4 559.5,494.3 562.7,494.1 565.9,494 569.2,493.8 572.4,493.5 575.6,493.4 578.8,492.8 582,492.6 585.2,492.3 588.4,491.8 591.6,491.4 594.8,490.8 598.1,489.9 601.3,489.5 604.5,488.6 607.7,487.3 610.9,486 614.1,485.4 617.3,485.5 620.5,486.2 623.7,487.5 627,488.5 630.2,489.3 633.4,490.4 636.6,490.9 639.8,491.3 643,491.6 646.2,492 649.4,492.3 652.6,492.7 655.9,492.6 659.1,492.8 662.3,493.1 665.5,493.6 668.7,493.7 671.9,493.8 675.1,494 678.3,494.2 681.5,494.1 684.8,494.1 688,494.3 691.2,494.6 694.4,494.6 697.6,494.6 700.8,494.6 704,494.8 707.2,494.8 710.4,494.9 713.7,494.8 716.9,494.9 720.1,494.8 723.3,495 726.5,495 729.7,495.3 732.9,495.1 736.1,495.4 739.3,495.2 742.6,495.2 745.8,495.1 749,495.1 752.2,495.4 755.4,495.2 758.6,495.4 761.8,495.3 765,495.1 768.2,494.9 771.5,494.9 774.7,494.7 777.9,494.9 781.1,494.7 784.3,494.5 787.5,494.1 790.7,493.9 793.9,493.6 797.1,493.2 800.4,493 803.6,492.5 806.8,492 810,491.3 813.2,490.6 816.4,489.5 819.6,489 822.8,489.2 826,489.8 829.3,490.7 832.5,491.4 835.7,492.1 838.9,492.5 842.1,493 845.3,493.2 848.5,493.4 851.7,493.6 854.9,493.8 858.2,493.8 861.4,494.2 864.6,494.2 867.8,494.4 871,494.4 874.2,494.5 877.4,494.4 880.6,494.5 883.8,494.6 887.1,494.5 890.3,494.6 893.5,495.1 896.7,495.1 899.9,495.2 903.1,495.1 906.3,494.7 909.5,494.5 912.7,493.9 916,493.4 919.2,492.7 922.4,491.9 925.6,491.5 928.8,491.7 932,492.1 935.2,492.4 938.4,492.8 941.6,493.2 944.9,493.6 948.1,493.6 951.3,493.6 954.5,493.6 957.7,493.5 960.9,493.7 964.1,493.9 967.3,494.3 970.5,494.3 973.8,494.4 977,494.3 980.2,494.4 983.4,494.4 986.6,494.3 989.8,494.4 993,494.3 996.2,494.5 999.4,494.4 1002.7,494.6 1005.9,494.5 1009.1,494.6 1012.3,494.7 1015.5,494.8" stroke="#66b6d7"/>
<path d="M148.5,487.3 151.7,487.3 154.9,487.3 158.1,487.6 161.3,487.9 164.6,488.3 167.8,488.6 171,488.7 174.2,488.9 177.4,489.1 180.6,489.2 183.8,489.1 187,489.5 190.2,489.5 193.5,489.8 196.7,490.2 199.9,490.5 203.1,490.8 206.3,490.9 209.5,491.2 212.7,491.1 215.9,491.4 219.1,491.8 222.4,492 225.6,492.2 228.8,492.3 232,492.6 235.2,492.5 238.4,492.8 241.6,492.9 244.8,493 248,493.1 251.3,493.1 254.5,493.4 257.7,493.3 260.9,493.4 264.1,493.3 267.3,493.3 270.5,493.3 273.7,493 276.9,492.9 280.2,492.8 283.4,492.8 286.6,493.1 289.8,492.9 293,492.9 296.2,492.7 299.4,492 302.6,491.6 305.8,490.8 309.1,490.4 312.3,489.8 315.5,488.6 318.7,487.6 321.9,486.4 325.1,486.5 328.3,487.9 331.5,490 334.7,491.5 338,492.6 341.2,493.4 344.4,494.1 347.6,494.7 350.8,495.1 354,495.3 357.2,495.4 360.4,495.5 363.6,495.6 366.9,495.5 370.1,495.7 373.3,495.8 376.5,495.8 379.7,495.9 382.9,496 386.1,496.1 389.3,496 392.5,495.9 395.8,495.8 399,495.9 402.2,495.8 405.4,495.7 408.6,495.6 411.8,495.5 415,495.4 418.2,495.2 421.4,495 424.7,495.1 427.9,494.8 431.1,494.6 434.3,494.4 437.5,494.1 440.7,493.6 443.9,493.1 447.1,492.3 450.3,491.4 453.6,490.7 456.8,491.4 460,492.7 463.2,493.8 466.4,494.5 469.6,495.1 472.8,495.5 476,495.9 479.2,496.1 482.5,496.2 485.7,496.3 488.9,496.3 492.1,496.3 495.3,496.1 498.5,496.1 501.7,495.8 504.9,495.5 508.1,495.6 511.4,495.6 514.6,495.3 517.8,495 521,494.8 524.2,494.5 527.4,494.2 530.6,493.8 533.8,493.1 537,492.3 540.3,492.7 543.5,494.2 546.7,495.3 549.9,495.8 553.1,495.8 556.3,495.7 559.5,495.6 562.7,495.5 565.9,495.3 569.2,495.1 572.4,494.7 575.6,494.5 578.8,494.1 582,494 585.2,493.5 588.4,493.4 591.6,492.8 594.8,492.3 598.1,491.8 601.3,491.1 604.5,490.2 607.7,489.2 610.9,488.2 614.1,487.5 617.3,487.7 620.5,488.3 623.7,489.2 627,490.3 630.2,491.2 633.4,491.5 636.6,492.4 639.8,492.7 643,493.1 646.2,493.4 649.4,493.6 652.6,493.6 655.9,494.2 659.1,494.4 662.3,494.6 665.5,494.7 668.7,495 671.9,495.2 675.1,495.3 678.3,495.3 681.5,495.5 684.8,495.3 688,495.4 691.2,495.5 694.4,495.7 697.6,495.8 700.8,496 704,496 707.2,496 710.4,496.2 713.7,496.2 716.9,496.1 720.1,496.2 723.3,496.1 726.5,496.3 729.7,496.2 732.9,495.9 736.1,496.2 739.3,496.1 742.6,496.1 745.8,496.3 749,496.2 752.2,496.1 755.4,496.1 758.6,496 761.8,496 765,495.8 768.2,495.5 771.5,495.2 774.7,495.1 777.9,494.8 781.1,494.6 784.3,494.2 787.5,494.1 790.7,493.9 793.9,494.1 797.1,493.7 800.4,493.5 803.6,492.8 806.8,491.9 810,490.7 813.2,489.5 816.4,488 819.6,487.4 822.8,487.3 826,488.4 829.3,489.8 832.5,490.8 835.7,491.6 838.9,492 842.1,492.5 845.3,492.9 848.5,493.1 851.7,493.3 854.9,493.7 858.2,494 861.4,494.2 864.6,494.5 867.8,494.6 871,495 874.2,495.3 877.4,495.4 880.6,495.4 883.8,495.5 887.1,495.6 890.3,495.8 893.5,495.7 896.7,495.6 899.9,495.6 903.1,495.5 906.3,495.6 909.5,495.4 912.7,495 916,494.4 919.2,493.8 922.4,493.1 925.6,492.6 928.8,492.8 932,493.1 935.2,493.6 938.4,493.9 941.6,494.2 944.9,494.3 948.1,494.1 951.3,494.3 954.5,494.5 957.7,494.6 960.9,494.5 964.1,494.6 967.3,494.6 970.5,494.7 973.8,495 977,495.1 980.2,495.3 983.4,495.4 986.6,495.5 989.8,495.4 993,495.4 996.2,495.5 999.4,495.3 1002.7,495.2 1005.9,495.3 1009.1,495.5 1012.3,495.7 1015.5,495.6" stroke="#7ea34c"/>
<path d="M148.5,489.2 151.7,489.4 154.9,489.4 158.1,489.2 161.3,489.4 164.6,489.2 167.8,489.6 171,489.8 174.2,489.7 177.4,489.7 180.6,489.9 183.8,489.7 187,489.8 190.2,490 193.5,489.8 196.7,490 199.9,490.3 203.1,490.4 206.3,490.5 209.5,491.1 212.7,491.2 215.9,491.3 219.1,491.7 222.4,491.8 225.6,492.1 228.8,492.3 232,492.2 235.2,492.3 238.4,492.5 241.6,492.5 244.8,492.5 248,492.5 251.3,492.7 254.5,492.9 257.7,493.4 260.9,493.4 264.1,493.5 267.3,493.5 270.5,493.3 273.7,493.5 276.9,493.2 280.2,493.2 283.4,493.3 286.6,493 289.8,493 293,492.7 296.2,492.3 299.4,492 302.6,491.2 305.8,490.5 309.1,489.5 312.3,488.7 315.5,487.2 318.7,485.5 321.9,484.1 325.1,484.6 328.3,486.3 331.5,488.6 334.7,490.3 338,491.6 341.2,492.7 344.4,493.4 347.6,494.1 350.8,495 354,495.4 357.2,495.6 360.4,495.8 363.6,496.2 366.9,496.3 370.1,496.3 373.3,496.4 376.5,496.6 379.7,496.6 382.9,497.1 386.1,497 389.3,496.9 392.5,497 395.8,496.8 399,496.8 402.2,496.6 405.4,496.4 408.6,496 411.8,496.1 415,496.1 418.2,495.8 421.4,496.1 424.7,496 427.9,495.7 431.1,495.2 434.3,494.9 437.5,494.7 440.7,494.3 443.9,493.7 447.1,493.3 450.3,492.4 453.6,491.6 456.8,492.1 460,493.4 463.2,494.4 466.4,495.3 469.6,495.6 472.8,496.1 476,496.2 479.2,496.5 482.5,496.7 485.7,497 488.9,497 492.1,496.9 495.3,496.7 498.5,496.6 501.7,496.3 504.9,496.1 508.1,496.1 511.4,496 514.6,496 517.8,495.9 521,495.5 524.2,495.3 527.4,495.1 530.6,494.8 533.8,494 537,493.1 540.3,493.2 543.5,494.8 546.7,495.8 549.9,496.3 553.1,496.4 556.3,496.6 559.5,496.4 562.7,495.8 565.9,495.7 569.2,495.8 572.4,495.7 575.6,495.5 578.8,495 582,494.8 585.2,494.4 588.4,494.1 591.6,493.5 594.8,493.1 598.1,492.4 601.3,492 604.5,491.5 607.7,490.6 610.9,489.6 614.1,489.2 617.3,489.2 620.5,489.8 623.7,490.7 627,491.4 630.2,492.2 633.4,492.8 636.6,493.6 639.8,493.9 643,494.4 646.2,494.5 649.4,495.1 652.6,495.1 655.9,495.1 659.1,495.3 662.3,495.6 665.5,495.4 668.7,495.7 671.9,495.7 675.1,496.1 678.3,496.2 681.5,496.2 684.8,496.2 688,496.2 691.2,496.6 694.4,496.6 697.6,496.8 700.8,496.9 704,497 707.2,497.1 710.4,497.1 713.7,497.1 716.9,497.1 720.1,496.9 723.3,496.8 726.5,496.9 729.7,497 732.9,496.8 736.1,496.9 739.3,496.8 742.6,496.7 745.8,496.7 749,496.6 752.2,496.4 755.4,496.5 758.6,496.1 761.8,496.2 765,495.9 768.2,495.7 771.5,495.7 774.7,495.3 777.9,495.1 781.1,495.1 784.3,495 787.5,494.6 790.7,494.3 793.9,493.9 797.1,493.3 800.4,493 803.6,492.2 806.8,491.3 810,490 813.2,488.3 816.4,486.6 819.6,485.1 822.8,485.1 826,486.5 829.3,487.9 832.5,489.6 835.7,490.8 838.9,491.7 842.1,492.5 845.3,493.1 848.5,493.5 851.7,493.8 854.9,494.3 858.2,494.5 861.4,494.8 864.6,494.9 867.8,495.1 871,495.2 874.2,495.5 877.4,495.7 880.6,495.6 883.8,495.9 887.1,495.8 890.3,495.9 893.5,496.1 896.7,496.4 899.9,496.5 903.1,496.5 906.3,496.5 909.5,496.3 912.7,496 916,495.2 919.2,494.4 922.4,493.6 925.6,493.1 928.8,493.1 932,493.4 935.2,493.8 938.4,494.2 941.6,494.2 944.9,494.5 948.1,494.8 951.3,494.7 954.5,495.1 957.7,495.2 960.9,495.2 964.1,495.1 967.3,495.3 970.5,495.4 973.8,495.3 977,495.4 980.2,495.3 983.4,495.5 986.6,495.6 989.8,496 993,496.1 996.2,495.8 999.4,496 1002.7,496 1005.9,495.9 1009.1,495.9 1012.3,495.7 1015.5,496" stroke="#dbb14c"/>
<path d="M148.5,491.1 151.7,490.9 154.9,491.2 158.1,490.9 161.3,491 164.6,491.2 167.8,490.8 171,490.8 174.2,491 177.4,491 180.6,491.4 183.8,491.4 187,491.5 190.2,491.6 193.5,491.6 196.7,491.5 199.9,491.7 203.1,491.9 206.3,491.7 209.5,491.6 212.7,491.7 215.9,491.8 219.1,491.8 222.4,491.8 225.6,492.1 228.8,492.2 232,492.3 235.2,492.7 238.4,492.9 241.6,493.1 244.8,493.2 248,493.2 251.3,493.2 254.5,493.4 257.7,493.3 260.9,493.5 264.1,493.5 267.3,493.3 270.5,493.4 273.7,493.5 276.9,493.4 280.2,493.3 283.4,493.2 286.6,493 289.8,492.8 293,492.4 296.2,492 299.4,491.7 302.6,490.8 305.8,490.1 309.1,489.4 312.3,488 315.5,486.3 318.7,484.1 321.9,482.2 325.1,482.1 328.3,484.5 331.5,487.2 334.7,489.3 338,491.1 341.2,492.4 344.4,493.4 347.6,494.4 350.8,494.9 354,495.4 357.2,495.7 360.4,496.1 363.6,496.2 366.9,496.6 370.1,496.8 373.3,496.6 376.5,496.8 379.7,497 382.9,497.2 386.1,497.2 389.3,497.7 392.5,497.7 395.8,497.8 399,497.2 402.2,497 405.4,497 408.6,497 411.8,496.8 415,496.9 418.2,496.8 421.4,496.8 424.7,496.7 427.9,496.2 431.1,496.2 434.3,496 437.5,495.5 440.7,495.2 443.9,494.6 447.1,493.7 450.3,492.9 453.6,492.3 456.8,492.6 460,493.7 463.2,494.9 466.4,495.8 469.6,496.4 472.8,496.7 476,496.9 479.2,497.3 482.5,497.4 485.7,497.5 488.9,497.6 492.1,497.8 495.3,497.6 498.5,497.6 501.7,497.4 504.9,497.2 508.1,497.2 511.4,497.2 514.6,496.9 517.8,496.8 521,496.5 524.2,496.3 527.4,496.1 530.6,495.5 533.8,495.1 537,494.2 540.3,494.3 543.5,495.6 546.7,496.6 549.9,497.1 553.1,497.4 556.3,497.4 559.5,497.1 562.7,497 565.9,496.9 569.2,496.7 572.4,496.3 575.6,496 578.8,495.9 582,495.8 585.2,495.6 588.4,495.3 591.6,495 594.8,494.5 598.1,494 601.3,493.2 604.5,492.6 607.7,491.8 610.9,490.9 614.1,490.6 617.3,490.5 620.5,491.3 623.7,491.9 627,492.7 630.2,493.3 633.4,493.9 636.6,494.6 639.8,495 643,495.4 646.2,495.6 649.4,495.7 652.6,495.9 655.9,496.2 659.1,496.4 662.3,496.6 665.5,496.7 668.7,497 671.9,497.2 675.1,497.2 678.3,497.4 681.5,497.3 684.8,497.4 688,497.4 691.2,497.7 694.4,497.7 697.6,497.7 700.8,497.8 704,497.8 707.2,497.8 710.4,497.8 713.7,497.4 716.9,497.4 720.1,497.2 723.3,496.8 726.5,496.9 729.7,497.1 732.9,497 736.1,496.8 739.3,497.1 742.6,497.1 745.8,497 749,496.8 752.2,496.7 755.4,496.3 758.6,496.2 761.8,496.2 765,495.6 768.2,495.3 771.5,495.3 774.7,495.3 777.9,495 781.1,494.6 784.3,494.3 787.5,493.8 790.7,493.8 793.9,493.4 797.1,492.6 800.4,492.3 803.6,491.6 806.8,490.4 810,488.9 813.2,487 816.4,485 819.6,483.6 822.8,483.7 826,484.9 829.3,486.8 832.5,488.7 835.7,490.1 838.9,491.2 842.1,492.2 845.3,492.8 848.5,493.2 851.7,493.8 854.9,493.9 858.2,494.3 861.4,494.5 864.6,495 867.8,495.1 871,495.4 874.2,495.7 877.4,495.8 880.6,495.5 883.8,495.8 887.1,495.8 890.3,496.1 893.5,496.4 896.7,496.5 899.9,496.6 903.1,496.9 906.3,497 909.5,497 912.7,496.6 916,495.8 919.2,495.2 922.4,494.1 925.6,493.7 928.8,493.7 932,494.1 935.2,494.6 938.4,494.9 941.6,494.9 944.9,495.1 948.1,495.3 951.3,495.8 954.5,495.8 957.7,496 960.9,496.1 964.1,496.2 967.3,496.2 970.5,496 973.8,496.3 977,496.4 980.2,496.5 983.4,496.4 986.6,496.2 989.8,496.3 993,496.3 996.2,496.2 999.4,496.5 1002.7,496.4 1005.9,496.5 1009.1,496.8 1012.3,496.7 1015.5,496.6" stroke="#1b6a9f"/>
<path d="M148.5,492 151.7,491.8 154.9,491.9 158.1,491.9 161.3,492 164.6,491.9 167.8,491.7 171,491.7 174.2,491.9 177.4,492 180.6,492 183.8,492 187,492 190.2,491.9 193.5,492 196.7,492.1 199.9,492.1 203.1,492.1 206.3,492 209.5,491.9 212.7,491.8 215.9,491.7 219.1,491.5 222.4,491.6 225.6,491.5 228.8,491.8 232,492.3 235.2,492.4 238.4,492.7 241.6,492.9 244.8,492.8 248,492.9 251.3,492.8 254.5,492.9 257.7,493 260.9,493 264.1,492.8 267.3,492.9 270.5,492.8 273.7,492.9 276.9,492.4 280.2,492 283.4,491.9 286.6,491.9 289.8,492.2 293,491.5 296.2,491.2 299.4,490.5 302.6,490.1 305.8,489.5 309.1,488.3 312.3,486.9 315.5,484.6 318.7,482.3 321.9,480.1 325.1,479.9 328.3,482.2 331.5,485.4 334.7,488.2 338,490.1 341.2,491.6 344.4,492.8 347.6,493.8 350.8,494.5 354,495 357.2,495.2 360.4,495.6 363.6,495.7 366.9,496.2 370.1,496.2 373.3,496.6 376.5,496.9 379.7,497.1 382.9,497.2 386.1,497.5 389.3,497.6 392.5,497.9 395.8,498 399,498.1 402.2,497.9 405.4,497.9 408.6,497.8 411.8,497.5 415,497.2 418.2,497.2 421.4,497.1 424.7,496.9 427.9,496.7 431.1,496.6 434.3,496.3 437.5,496.2 440.7,495.9 443.9,495.3 447.1,494.3 450.3,493.2 453.6,492.5 456.8,493.1 460,494.2 463.2,495.2 466.4,495.8 469.6,496.2 472.8,496.7 476,497 479.2,497.5 482.5,497.3 485.7,497.4 488.9,497.5 492.1,497.5 495.3,497.6 498.5,497.6 501.7,497.7 504.9,497.4 508.1,497.5 511.4,497.6 514.6,497.4 517.8,496.9 521,496.8 524.2,496.7 527.4,496.2 530.6,495.8 533.8,495.4 537,494.6 540.3,494.7 543.5,495.8 546.7,496.9 549.9,497.2 553.1,497.8 556.3,497.7 559.5,497.6 562.7,497.4 565.9,497.4 569.2,497.2 572.4,496.9 575.6,496.8 578.8,496.8 582,496.5 585.2,496.2 588.4,496.1 591.6,495.6 594.8,495 598.1,494.6 601.3,494.2 604.5,493.7 607.7,493.1 610.9,492.4 614.1,491.8 617.3,491.9 620.5,492.3 623.7,493.1 627,493.8 630.2,494.5 633.4,495.2 636.6,495.7 639.8,496 643,496.3 646.2,496.5 649.4,496.6 652.6,496.9 655.9,497.2 659.1,497.1 662.3,497.2 665.5,497.4 668.7,497.5 671.9,497.5 675.1,497.6 678.3,497.4 681.5,497.3 684.8,497.6 688,497.7 691.2,497.8 694.4,498.1 697.6,498 700.8,498 704,497.8 707.2,497.7 710.4,497.8 713.7,497.5 716.9,497.3 720.1,497 723.3,497 726.5,497 729.7,497 732.9,497.1 736.1,497 739.3,497.1 742.6,497.1 745.8,497 749,496.7 752.2,496.7 755.4,496.3 758.6,496.4 761.8,496.3 765,496 768.2,495.8 771.5,495.6 774.7,495.5 777.9,495.3 781.1,495 784.3,494.7 787.5,494.3 790.7,493.8 793.9,493.1 797.1,492.3 800.4,491.5 803.6,490.2 806.8,488.9 810,487.1 813.2,484.9 816.4,482.6 819.6,481.3 822.8,481.4 826,483.2 829.3,485.5 832.5,487.6 835.7,489.2 838.9,490.5 842.1,491.5 845.3,492.3 848.5,492.9 851.7,493.5 854.9,493.8 858.2,494.2 861.4,494.6 864.6,495 867.8,495.2 871,495.5 874.2,495.5 877.4,495.6 880.6,496.1 883.8,496 887.1,496.3 890.3,496.5 893.5,496.7 896.7,496.7 899.9,496.6 903.1,496.6 906.3,496.8 909.5,496.7 912.7,496.4 916,495.9 919.2,495 922.4,494 925.6,493.5 928.8,493.5 932,493.9 935.2,494.4 938.4,495 941.6,495.2 944.9,495.6 948.1,495.7 951.3,495.8 954.5,495.9 957.7,495.8 960.9,495.7 964.1,495.7 967.3,495.8 970.5,495.7 973.8,495.9 977,496 980.2,496.1 983.4,496.2 986.6,496.4 989.8,496.6 993,496.9 996.2,496.8 999.4,496.9 1002.7,496.9 1005.9,496.8 1009.1,496.7 1012.3,496.8 1015.5,497" stroke="#bb5d34"/>
<path d="M148.5,494 151.7,494 154.9,493.9 158.1,493.4 161.3,493.2 164.6,493.5 167.8,493.5 171,493.4 174.2,493.6 177.4,493.6 180.6,493.7 183.8,493.6 187,493.8 190.2,493.7 193.5,493.7 196.7,493.6 199.9,493.3 203.1,493.2 206.3,493 209.5,493.3 212.7,493.5 215.9,493.3 219.1,493.2 222.4,493.4 225.6,493.7 228.8,493.8 232,493.6 235.2,493.8 238.4,493.4 241.6,493.7 244.8,493.6 248,493.5 251.3,493.2 254.5,493.3 257.7,493.2 260.9,493.4 264.1,493.5 267.3,493.5 270.5,493.3 273.7,493.2 276.9,492.9 280.2,492.7 283.4,492.8 286.6,492.3 289.8,491.8 293,491.1 296.2,491 299.4,490.4 302.6,490.1 305.8,489 309.1,487.5 312.3,486 315.5,483.8 318.7,480.9 321.9,478.3 325.1,477.9 328.3,480.6 331.5,484.3 334.7,487.1 338,489.4 341.2,491.2 344.4,492.5 347.6,493.6 350.8,494.2 354,494.6 357.2,495.2 360.4,496 363.6,496.4 366.9,496.6 370.1,496.8 373.3,496.8 376.5,497.4 379.7,497.8 382.9,497.7 386.1,497.6 389.3,497.7 392.5,497.8 395.8,498.2 399,498.4 402.2,498.7 405.4,498.6 408.6,498.7 411.8,498.6 415,498.3 418.2,498.3 421.4,497.9 424.7,497.7 427.9,497.8 431.1,497.7 434.3,497.4 437.5,496.8 440.7,496.7 443.9,495.8 447.1,495.2 450.3,494.1 453.6,493.2 456.8,493.4 460,494.5 463.2,495.8 466.4,496.4 469.6,496.9 472.8,497.6 476,497.6 479.2,497.8 482.5,498.1 485.7,498.3 488.9,498.4 492.1,498.5 495.3,498.5 498.5,498.4 501.7,498.6 504.9,498.5 508.1,498.4 511.4,498.3 514.6,498.1 517.8,497.7 521,497.6 524.2,497.5 527.4,497.2 530.6,496.8 533.8,495.9 537,495.2 540.3,495.1 543.5,496 546.7,497.4 549.9,498.1 553.1,498.4 556.3,498.2 559.5,498.1 562.7,498.1 565.9,498 569.2,498 572.4,497.9 575.6,497.7 578.8,497.6 582,497.3 585.2,497.1 588.4,496.7 591.6,496.6 594.8,496.2 598.1,495.8 601.3,495.4 604.5,494.8 607.7,494.3 610.9,493.9 614.1,493.4 617.3,493.6 620.5,493.9 623.7,494.5 627,495.3 630.2,496.1 633.4,496.5 636.6,496.7 639.8,497 643,497.2 646.2,497.5 649.4,497.8 652.6,497.8 655.9,497.9 659.1,498.4 662.3,498.4 665.5,498.3 668.7,498.2 671.9,498.3 675.1,498.7 678.3,498.7 681.5,498.7 684.8,498.7 688,498.5 691.2,498.4 694.4,498.4 697.6,498.3 700.8,498 704,498.1 707.2,498.1 710.4,497.9 713.7,497.9 716.9,498 720.1,497.6 723.3,497.7 726.5,497.7 729.7,497.5 732.9,497.5 736.1,497.4 739.3,497.3 742.6,497.2 745.8,497.3 749,497.2 752.2,496.9 755.4,496.9 758.6,496.7 761.8,496.6 765,496.3 768.2,496.2 771.5,495.9 774.7,495.5 777.9,495.3 781.1,494.9 784.3,494.4 787.5,494.2 790.7,493.6 793.9,492.9 797.1,492 800.4,490.6 803.6,489.1 806.8,487.5 810,485.5 813.2,483.4 816.4,480.7 819.6,478.8 822.8,479.4 826,481.2 829.3,483.6 832.5,485.9 835.7,487.7 838.9,489.5 842.1,490.7 845.3,491.5 848.5,492.3 851.7,493.3 854.9,493.9 858.2,494.1 861.4,494.6 864.6,495.1 867.8,495.3 871,495.6 874.2,495.5 877.4,495.4 880.6,495.7 883.8,496.1 887.1,496.1 890.3,496.2 893.5,496.6 896.7,496.5 899.9,496.7 903.1,497.3 906.3,497.3 909.5,497.1 912.7,496.7 916,496.1 919.2,495.3 922.4,494.5 925.6,494.1 928.8,494.2 932,494.5 935.2,495 938.4,495.5 941.6,495.7 944.9,495.7 948.1,496 951.3,496.4 954.5,496.5 957.7,496.7 960.9,496.5 964.1,496.7 967.3,497 970.5,496.9 973.8,496.8 977,497 980.2,497 983.4,497.1 986.6,496.9 989.8,496.8 993,497.1 996.2,497.2 999.4,497.4 1002.7,497.5 1005.9,497.4 1009.1,497.5 1012.3,497.5 1015.5,497.1" stroke="#852235"/>
</g>
<g clip-path="url(#cb)" fill="none" stroke-width="1" stroke-linejoin="round" shape-rendering="crispEdges">
<path d="M148.5,896.9 151.7,897 154.9,897.8 158.1,897.4 161.3,897.6 164.6,896.5 167.8,896.4 171,897.2 174.2,897.1 177.4,897 180.6,897.7 183.8,897.7 187,897.9 190.2,897.8 193.5,897.3 196.7,897.1 199.9,897.2 203.1,897.4 206.3,897.2 209.5,897.4 212.7,896.4 215.9,896.3 219.1,895.7 222.4,895.8 225.6,896.8 228.8,896.7 232,896.8 235.2,897 238.4,896.8 241.6,897.1 244.8,896.1 248,896.1 251.3,895.7 254.5,895.8 257.7,896 260.9,896.3 264.1,896.6 267.3,896.8 270.5,896.6 273.7,896.8 276.9,896.4 280.2,896.7 283.4,897.1 286.6,896.9 289.8,896.9 293,896.8 296.2,897.4 299.4,897.3 302.6,897.1 305.8,896.8 309.1,896.4 312.3,896.1 315.5,896.9 318.7,897.1 321.9,897.2 325.1,897.2 328.3,896.3 331.5,897 334.7,896.8 338,897.7 341.2,897 344.4,897.5 347.6,897.2 350.8,897.7 354,898 357.2,897.3 360.4,896.9 363.6,896.7 366.9,896.9 370.1,896.9 373.3,896.1 376.5,896.8 379.7,897 382.9,896.7 386.1,897.4 389.3,896.8 392.5,896.9 395.8,896.8 399,897.1 402.2,897 405.4,896.7 408.6,896.4 411.8,896.9 415,896.5 418.2,897 421.4,896.9 424.7,897.1 427.9,896.7 431.1,896.5 434.3,896.6 437.5,895.3 440.7,894.8 443.9,894.8 447.1,894.8 450.3,895.6 453.6,897.2 456.8,897.2 460,896.9 463.2,896.6 466.4,897.2 469.6,896.6 472.8,896.6 476,897.3 479.2,896.9 482.5,897.6 485.7,897.5 488.9,897.6 492.1,897.8 495.3,897.6 498.5,897.5 501.7,897.8 504.9,897.6 508.1,896.8 511.4,896.6 514.6,896.2 517.8,895.6 521,895.6 524.2,895.8 527.4,896.4 530.6,897.1 533.8,897.8 537,897.5 540.3,897.1 543.5,897.3 546.7,897.6 549.9,897 553.1,896.9 556.3,896.9 559.5,896.3 562.7,895.9 565.9,895.8 569.2,897.2 572.4,896.6 575.6,896.6 578.8,896.7 582,896.6 585.2,896.3 588.4,897.1 591.6,896.9 594.8,897.2 598.1,896.9 601.3,896.7 604.5,896.3 607.7,895.9 610.9,897 614.1,896.8 617.3,896.4 620.5,896.3 623.7,895.9 627,897.3 630.2,897 633.4,897.3 636.6,897 639.8,896.9 643,896.1 646.2,896.6 649.4,896.4 652.6,897 655.9,897.6 659.1,897.6 662.3,897.2 665.5,897.3 668.7,897 671.9,896.5 675.1,896.7 678.3,897.6 681.5,897.1 684.8,897.3 688,898 691.2,897.9 694.4,897.7 697.6,897.9 700.8,897.4 704,897.8 707.2,897.7 710.4,897.6 713.7,897 716.9,896.7 720.1,896.5 723.3,897.2 726.5,897.2 729.7,896.5 732.9,896 736.1,895.9 739.3,896.3 742.6,896.6 745.8,896.5 749,896.5 752.2,896.9 755.4,896.6 758.6,896.6 761.8,897.1 765,897.1 768.2,896.6 771.5,896.9 774.7,896.8 777.9,897.2 781.1,896.7 784.3,897 787.5,896.9 790.7,896.2 793.9,896.3 797.1,895.7 800.4,895.2 803.6,895.8 806.8,896.5 810,896.6 813.2,897.3 816.4,896.7 819.6,897.1 822.8,897 826,896.8 829.3,896.6 832.5,895.7 835.7,896.7 838.9,897.1 842.1,897.8 845.3,897.5 848.5,896.4 851.7,897.1 854.9,897.8 858.2,898.1 861.4,897.8 864.6,897.4 867.8,897.6 871,897.5 874.2,897.1 877.4,897.3 880.6,896.5 883.8,896.7 887.1,895.7 890.3,895.6 893.5,896 896.7,895.8 899.9,894.6 903.1,896 906.3,896.5 909.5,896.5 912.7,897 916,896.6 919.2,896.7 922.4,896.9 925.6,896.6 928.8,897 932,896.1 935.2,895.8 938.4,896.4 941.6,896.3 944.9,896.1 948.1,896.7 951.3,896.1 954.5,895.7 957.7,896 960.9,896.5 964.1,897 967.3,896.6 970.5,896.4 973.8,897 977,897.2 980.2,897 983.4,897.3 986.6,897.2 989.8,897.5 993,897.1 996.2,896.7 999.4,896.8 1002.7,897 1005.9,897.4 1009.1,897.5 1012.3,897.7 1015.5,897.6" stroke="#1b6a9f"/>
<path d="M148.5,898.1 151.7,897.8 154.9,897.7 158.1,897.9 161.3,897.8 164.6,897.2 167.8,897.4 171,897.1 174.2,896.5 177.4,897 180.6,896.9 183.8,897.6 187,897.7 190.2,897.9 193.5,897.3 196.7,896.6 199.9,897.8 203.1,898 206.3,897.7 209.5,896.6 212.7,896.7 215.9,896.8 219.1,897.4 222.4,897.3 225.6,898.1 228.8,897.4 232,898 235.2,898 238.4,898.1 241.6,898.2 244.8,897.2 248,898 251.3,898.2 254.5,897.6 257.7,897 260.9,896.2 264.1,896.6 267.3,896.8 270.5,897.5 273.7,897.5 276.9,898.2 280.2,898.2 283.4,897.7 286.6,897.2 289.8,897.3 293,898 296.2,897.8 299.4,897.6 302.6,897.3 305.8,897.9 309.1,898 312.3,898 315.5,898 318.7,897.9 321.9,897 325.1,896.7 328.3,897.2 331.5,896.8 334.7,897.8 338,897.9 341.2,897.5 344.4,896.6 347.6,897.9 350.8,897 354,898.1 357.2,897.5 360.4,896.8 363.6,897.3 366.9,896.8 370.1,896.9 373.3,897 376.5,897.4 379.7,897.5 382.9,897.6 386.1,896.9 389.3,896.6 392.5,897 395.8,898.1 399,897.3 402.2,897 405.4,897.5 408.6,897.5 411.8,897.4 415,897.1 418.2,897.1 421.4,897.2 424.7,897.4 427.9,898.1 431.1,898.1 434.3,897.5 437.5,897.4 440.7,897.6 443.9,897.6 447.1,897.8 450.3,897.9 453.6,898.1 456.8,897 460,897 463.2,897.2 466.4,897.3 469.6,897 472.8,897.5 476,897.4 479.2,897.9 482.5,898.1 485.7,897.2 488.9,897.1 492.1,897.5 495.3,897.6 498.5,898.2 501.7,897.7 504.9,897.5 508.1,897.7 511.4,897.6 514.6,897.6 517.8,896.8 521,896.8 524.2,897.5 527.4,897 530.6,897.4 533.8,898 537,897.7 540.3,898.2 543.5,897.8 546.7,896.9 549.9,897 553.1,896.8 556.3,896.4 559.5,896.7 562.7,897.4 565.9,897.2 569.2,897.5 572.4,897.9 575.6,897.9 578.8,897.8 582,898.1 585.2,897.8 588.4,898.1 591.6,898 594.8,898.1 598.1,898.1 601.3,898 604.5,897.6 607.7,897.3 610.9,897 614.1,897.8 617.3,897.8 620.5,898.2 623.7,898.1 627,897.9 630.2,897.9 633.4,898.2 636.6,897.9 639.8,898.2 643,897.9 646.2,898.2 649.4,898.1 652.6,897.6 655.9,897.8 659.1,897.9 662.3,897.8 665.5,898.1 668.7,898 671.9,897.6 675.1,897.1 678.3,897.6 681.5,897.8 684.8,897.6 688,897.1 691.2,896.2 694.4,896.9 697.6,897.7 700.8,897.4 704,897.3 707.2,897.5 710.4,897.1 713.7,897.7 716.9,897.7 720.1,897.8 723.3,897.9 726.5,897.8 729.7,897.7 732.9,898 736.1,897.9 739.3,898.1 742.6,898 745.8,897.9 749,897.2 752.2,897.1 755.4,896.6 758.6,897.6 761.8,898 765,897.2 768.2,897.4 771.5,896.5 774.7,897.4 777.9,898.1 781.1,898 784.3,898.1 787.5,898 790.7,897.7 793.9,898.2 797.1,898 800.4,897.6 803.6,897.2 806.8,897.4 810,897.4 813.2,898.1 816.4,898.1 819.6,897.7 822.8,897.9 826,897.4 829.3,896.8 832.5,896.9 835.7,896.8 838.9,896.9 842.1,897.3 845.3,897.6 848.5,897.8 851.7,898.1 854.9,898 858.2,898.1 861.4,897.9 864.6,897.3 867.8,897.5 871,897.2 874.2,898.1 877.4,897.9 880.6,897.4 883.8,897 887.1,896.9 890.3,897.8 893.5,897.6 896.7,897.7 899.9,897.7 903.1,897.4 906.3,897.6 909.5,897.9 912.7,897.8 916,898.1 919.2,898.1 922.4,898.1 925.6,897.7 928.8,896.7 932,897.6 935.2,897.2 938.4,897.9 941.6,897.9 944.9,897.8 948.1,897.4 951.3,898.2 954.5,897.8 957.7,898.1 960.9,897.6 964.1,896.5 967.3,896.9 970.5,896.7 973.8,896.8 977,898.2 980.2,897.7 983.4,897.2 986.6,897.5 989.8,897.7 993,897.8 996.2,897.2 999.4,896.7 1002.7,896.9 1005.9,897.1 1009.1,897.2 1012.3,897.5 1015.5,897" stroke="#bb5d34"/>
<path d="M148.5,897.3 151.7,897.6 154.9,897 158.1,896.9 161.3,897.7 164.6,897.4 167.8,897.5 171,898.2 174.2,898 177.4,897.4 180.6,896.6 183.8,896.5 187,896.3 190.2,896.3 193.5,896.7 196.7,896.9 199.9,897.6 203.1,897.9 206.3,897.8 209.5,897.6 212.7,898 215.9,897.4 219.1,897.1 222.4,897.2 225.6,897.5 228.8,897.6 232,897.4 235.2,897.9 238.4,898.1 241.6,898.2 244.8,897.8 248,898.1 251.3,897.7 254.5,897 257.7,896.9 260.9,896.7 264.1,897.4 267.3,897.4 270.5,898.1 273.7,898 276.9,897.8 280.2,897.3 283.4,897 286.6,897.5 289.8,897.7 293,897.6 296.2,898 299.4,898.1 302.6,897.4 305.8,897.5 309.1,897.9 312.3,897.6 315.5,897.8 318.7,897.7 321.9,897.8 325.1,897.8 328.3,898.1 331.5,898.1 334.7,898 338,897.5 341.2,897.4 344.4,898.1 347.6,898.1 350.8,897.5 354,896.9 357.2,897.5 360.4,897.8 363.6,897.2 366.9,897.6 370.1,897.2 373.3,897.9 376.5,897.7 379.7,898.1 382.9,898 386.1,897.5 389.3,897.7 392.5,897.3 395.8,897.4 399,898.1 402.2,897.9 405.4,898.1 408.6,898.2 411.8,898 415,898 418.2,898 421.4,897.9 424.7,897.7 427.9,897.7 431.1,898.1 434.3,898 437.5,898.1 440.7,897.5 443.9,897.2 447.1,897.6 450.3,897.7 453.6,897.8 456.8,897.8 460,897.5 463.2,897.3 466.4,897 469.6,897 472.8,897.7 476,897.8 479.2,897.6 482.5,897.2 485.7,897.2 488.9,898.1 492.1,897.6 495.3,897.6 498.5,898 501.7,898.1 504.9,897.2 508.1,897.2 511.4,897.7 514.6,898.2 517.8,897.8 521,897.7 524.2,898 527.4,897 530.6,898 533.8,898 537,897.5 540.3,897.5 543.5,898.1 546.7,897.7 549.9,898.1 553.1,896.9 556.3,897.3 559.5,897.1 562.7,897.2 565.9,897.1 569.2,898.2 572.4,897.9 575.6,898.2 578.8,898.1 582,898.2 585.2,897.7 588.4,897.9 591.6,898 594.8,897.8 598.1,898.1 601.3,897.9 604.5,897.6 607.7,897.7 610.9,897.8 614.1,897.9 617.3,897.6 620.5,898.2 623.7,897.9 627,898 630.2,898 633.4,898 636.6,897.8 639.8,897.4 643,897.9 646.2,897.8 649.4,897.9 652.6,898.1 655.9,898 659.1,897.9 662.3,897.8 665.5,897.3 668.7,897.2 671.9,897 675.1,896.7 678.3,897.4 681.5,897.9 684.8,897.9 688,897.2 691.2,897.4 694.4,897.8 697.6,898 700.8,897.7 704,897.1 707.2,897.3 710.4,896.4 713.7,896.5 716.9,896.8 720.1,897.8 723.3,897.5 726.5,897.8 729.7,897.9 732.9,898.1 736.1,897.7 739.3,898.2 742.6,897.7 745.8,897.3 749,897.4 752.2,897.6 755.4,897.4 758.6,898 761.8,898.1 765,897.7 768.2,897.7 771.5,898.2 774.7,897.7 777.9,897.7 781.1,898.2 784.3,897.9 787.5,897.5 790.7,897.6 793.9,898.1 797.1,898.1 800.4,898.1 803.6,897.9 806.8,896.5 810,895.9 813.2,895.7 816.4,895.5 819.6,895.5 822.8,897.1 826,897 829.3,897.7 832.5,898.2 835.7,897.8 838.9,898 842.1,897.9 845.3,898.1 848.5,897.9 851.7,898.1 854.9,897.9 858.2,897.4 861.4,898.1 864.6,897.5 867.8,897.8 871,898.2 874.2,897.5 877.4,897.6 880.6,898 883.8,898 887.1,897.8 890.3,897.3 893.5,898.2 896.7,898.1 899.9,898.1 903.1,897.8 906.3,897.3 909.5,898 912.7,898.1 916,897.7 919.2,897.9 922.4,898.1 925.6,898 928.8,897.5 932,897.9 935.2,897.9 938.4,898.1 941.6,897.8 944.9,896.7 948.1,897 951.3,897.7 954.5,897.4 957.7,897.3 960.9,898.1 964.1,897.8 967.3,897.7 970.5,897.9 973.8,898 977,897.1 980.2,896.5 983.4,896.1 986.6,896 989.8,896.6 993,897.3 996.2,897.6 999.4,897.7 1002.7,897.7 1005.9,897.6 1009.1,897.9 1012.3,897.7 1015.5,898.1" stroke="#dbb14c"/>
<path d="M148.5,897.4 151.7,897.2 154.9,897.8 158.1,896.9 161.3,896.3 164.6,896.8 167.8,896.9 171,897 174.2,897.9 177.4,897.1 180.6,897.4 183.8,897.5 187,898 190.2,897.7 193.5,897.7 196.7,897.6 199.9,897.6 203.1,896.7 206.3,897.6 209.5,897.3 212.7,896.9 215.9,896.5 219.1,896.5 222.4,897.1 225.6,896.7 228.8,896.4 232,897.2 235.2,896.8 238.4,897.1 241.6,897.1 244.8,896.9 248,896.4 251.3,896.9 254.5,896.9 257.7,897.1 260.9,896.4 264.1,896.6 267.3,895.4 270.5,895.7 273.7,894.6 276.9,895.4 280.2,896.1 283.4,896.7 286.6,896.7 289.8,896.4 293,897.1 296.2,897.2 299.4,897.1 302.6,896.4 305.8,896.6 309.1,895.7 312.3,896.1 315.5,896.8 318.7,897.6 321.9,897.6 325.1,897 328.3,897.2 331.5,897.4 334.7,897.6 338,897.4 341.2,897.8 344.4,897.8 347.6,897.7 350.8,897.2 354,897 357.2,897.2 360.4,897.1 363.6,897.2 366.9,897.6 370.1,897.8 373.3,897.3 376.5,897.5 379.7,897.7 382.9,896.7 386.1,897.4 389.3,897.3 392.5,896.8 395.8,896.8 399,896.2 402.2,896.4 405.4,896.2 408.6,896.8 411.8,896.1 415,896.8 418.2,897.2 421.4,896.6 424.7,896.7 427.9,896.3 431.1,896.3 434.3,896.8 437.5,896.5 440.7,896.8 443.9,896.7 447.1,896.8 450.3,897.1 453.6,896.5 456.8,896.4 460,897.1 463.2,896.9 466.4,897.1 469.6,897.1 472.8,897 476,896.6 479.2,896 482.5,894.8 485.7,895.1 488.9,895.2 492.1,896.3 495.3,896.7 498.5,897.6 501.7,897.5 504.9,897.6 508.1,897.9 511.4,898 514.6,897.7 517.8,897.9 521,897.9 524.2,897.9 527.4,897.1 530.6,897 533.8,897.1 537,897.1 540.3,897.4 543.5,897.6 546.7,896.9 549.9,896.2 553.1,896.1 556.3,896.7 559.5,896.4 562.7,897.3 565.9,897.4 569.2,897.2 572.4,897.1 575.6,896.2 578.8,896.1 582,896.1 585.2,895.9 588.4,895.9 591.6,896.6 594.8,897.1 598.1,896.8 601.3,896.3 604.5,896.4 607.7,896.2 610.9,896.6 614.1,896.6 617.3,895.8 620.5,896.3 623.7,896.7 627,896.2 630.2,897.1 633.4,895.9 636.6,897.3 639.8,897.1 643,897 646.2,897.3 649.4,896.8 652.6,896.9 655.9,897.4 659.1,897 662.3,896.9 665.5,897.4 668.7,897 671.9,897.3 675.1,896.7 678.3,896.1 681.5,895.6 684.8,895.7 688,895.7 691.2,896.9 694.4,897.3 697.6,897.2 700.8,896.9 704,897.6 707.2,897.9 710.4,897.8 713.7,897.5 716.9,897.5 720.1,897.7 723.3,897.2 726.5,896.9 729.7,896.5 732.9,897.4 736.1,896.7 739.3,896.9 742.6,896.4 745.8,895.9 749,897 752.2,896.2 755.4,896.7 758.6,896.6 761.8,896.5 765,896.8 768.2,896.4 771.5,896.9 774.7,896.9 777.9,896.6 781.1,896.5 784.3,896.3 787.5,897.1 790.7,897.1 793.9,896.2 797.1,895.9 800.4,896.3 803.6,897 806.8,897.1 810,896.7 813.2,896.4 816.4,895.5 819.6,895.6 822.8,895.9 826,897 829.3,897.5 832.5,896.8 835.7,897.1 838.9,897.2 842.1,897.8 845.3,897.7 848.5,897.6 851.7,897.5 854.9,896.8 858.2,897.3 861.4,896.9 864.6,897.1 867.8,897 871,897.8 874.2,897.2 877.4,897.3 880.6,897.1 883.8,896.8 887.1,896.9 890.3,896.7 893.5,896.9 896.7,896.6 899.9,896.3 903.1,896.2 906.3,896.1 909.5,896.3 912.7,896.8 916,897.1 919.2,897.2 922.4,897.3 925.6,897.2 928.8,897.1 932,897 935.2,896.9 938.4,896.9 941.6,896.9 944.9,897.1 948.1,896.5 951.3,896.7 954.5,897 957.7,896.9 960.9,896.7 964.1,896.2 967.3,896.1 970.5,896.2 973.8,897 977,896.1 980.2,896.4 983.4,896.6 986.6,897.3 989.8,897.2 993,897.4 996.2,897.4 999.4,897.1 1002.7,896.4 1005.9,895.6 1009.1,896.3 1012.3,897 1015.5,897.1" stroke="#71397c"/>
<path d="M148.5,897.7 151.7,897.4 154.9,897.6 158.1,897.1 161.3,897.7 164.6,897.9 167.8,897.6 171,898 174.2,897.5 177.4,897.8 180.6,897.2 183.8,897.7 187,898.2 190.2,897.9 193.5,897.8 196.7,897.9 199.9,898 203.1,897.7 206.3,897.6 209.5,896.8 212.7,897 215.9,898 219.1,897.6 222.4,897.7 225.6,898.1 228.8,898.1 232,898 235.2,897.9 238.4,897.7 241.6,897.3 244.8,897.2 248,897.2 251.3,897.7 254.5,897.4 257.7,896.9 260.9,896.5 264.1,896.1 267.3,895.7 270.5,897.1 273.7,896.6 276.9,897 280.2,897.2 283.4,898 286.6,898.1 289.8,896.9 293,896.5 296.2,896 299.4,895.6 302.6,896 305.8,896.7 309.1,897.4 312.3,897.7 315.5,897.8 318.7,897.8 321.9,897.9 325.1,897.9 328.3,897.4 331.5,897.9 334.7,897.6 338,897.7 341.2,897.3 344.4,897.8 347.6,897.9 350.8,897.4 354,898 357.2,898.1 360.4,897.7 363.6,898 366.9,898.2 370.1,898 373.3,897.4 376.5,898.2 379.7,898.1 382.9,898.2 386.1,897.6 389.3,897.3 392.5,896.8 395.8,896.9 399,897.6 402.2,898 405.4,897.8 408.6,897.3 411.8,897.6 415,897.6 418.2,897.4 421.4,898 424.7,897.7 427.9,898.2 431.1,896.9 434.3,897.2 437.5,897.3 440.7,898 443.9,897.8 447.1,897.4 450.3,897.5 453.6,898.2 456.8,897.7 460,898.1 463.2,898.2 466.4,898.1 469.6,897.4 472.8,898 476,897.9 479.2,897.9 482.5,897.7 485.7,897.2 488.9,897.2 492.1,897.5 495.3,897 498.5,897.2 501.7,897.4 504.9,897 508.1,897.1 511.4,897.4 514.6,898.2 517.8,897.8 521,896.9 524.2,897.5 527.4,898.1 530.6,897.8 533.8,897.5 537,898.2 540.3,897.8 543.5,897.4 546.7,898.2 549.9,898 553.1,897.5 556.3,897.6 559.5,897.2 562.7,897.4 565.9,898.1 569.2,897.8 572.4,897.3 575.6,897.5 578.8,897.4 582,897.3 585.2,898 588.4,897.9 591.6,897.8 594.8,898 598.1,898.2 601.3,898.2 604.5,898.2 607.7,897.8 610.9,898 614.1,897.5 617.3,896.6 620.5,896.7 623.7,897.3 627,898 630.2,898 633.4,897.4 636.6,897.7 639.8,897.7 643,897.5 646.2,897.4 649.4,898 652.6,898 655.9,897.7 659.1,898.2 662.3,897.8 665.5,897.1 668.7,897 671.9,897.3 675.1,897 678.3,897.6 681.5,897.9 684.8,898 688,897 691.2,897.1 694.4,897.2 697.6,896.7 700.8,897.2 704,897 707.2,896.6 710.4,896.9 713.7,896.9 716.9,897.4 720.1,898.1 723.3,897.5 726.5,897.9 729.7,897.4 732.9,897.8 736.1,898.2 739.3,897.8 742.6,898.1 745.8,897.9 749,897.3 752.2,898.1 755.4,897.2 758.6,897 761.8,897.8 765,897.6 768.2,896.7 771.5,897.1 774.7,897.7 777.9,897.5 781.1,898.1 784.3,897.9 787.5,897.7 790.7,897.6 793.9,897.5 797.1,897.8 800.4,897.4 803.6,898.2 806.8,897.9 810,898 813.2,897.8 816.4,898.1 819.6,897.8 822.8,898.2 826,898.1 829.3,898.2 832.5,897.6 835.7,897.1 838.9,897.1 842.1,897.4 845.3,898.1 848.5,897.7 851.7,897.5 854.9,896.9 858.2,897.1 861.4,898.1 864.6,898 867.8,897.9 871,897.5 874.2,897.5 877.4,898.1 880.6,897.5 883.8,897.5 887.1,897.6 890.3,898.2 893.5,897.8 896.7,898 899.9,897.8 903.1,897.6 906.3,898 909.5,898 912.7,897.4 916,897.8 919.2,898 922.4,898.1 925.6,897.7 928.8,897.8 932,897.9 935.2,897.6 938.4,897.4 941.6,897.4 944.9,897.1 948.1,896.9 951.3,897.3 954.5,897.6 957.7,897.9 960.9,897.3 964.1,897.4 967.3,897.6 970.5,897.5 973.8,897.1 977,897.2 980.2,897.7 983.4,898.2 986.6,897.9 989.8,897.7 993,897.8 996.2,897.3 999.4,896.4 1002.7,897.2 1005.9,897.3 1009.1,897.7 1012.3,897.7 1015.5,898" stroke="#7ea34c"/>
<path d="M148.5,897.6 151.7,896.6 154.9,896.6 158.1,896.4 161.3,896.7 164.6,897.5 167.8,897.9 171,897.9 174.2,898.2 177.4,898 180.6,897.4 183.8,897.2 187,896.7 190.2,897.3 193.5,896.9 196.7,897 199.9,897 203.1,896.8 206.3,896.6 209.5,896.8 212.7,896.8 215.9,897.6 219.1,898 222.4,898 225.6,897.2 228.8,897.3 232,898.1 235.2,898 238.4,897.8 241.6,897.4 244.8,897.9 248,897.8 251.3,897.9 254.5,897.5 257.7,898 260.9,898.1 264.1,897.9 267.3,898.1 270.5,897.9 273.7,897.7 276.9,897.6 280.2,897.5 283.4,896.7 286.6,896.9 289.8,897.7 293,897.4 296.2,897.4 299.4,897.8 302.6,897.9 305.8,897.7 309.1,898.1 312.3,898 315.5,898.1 318.7,897.7 321.9,898.1 325.1,898 328.3,898 331.5,897.4 334.7,898 338,897.9 341.2,898 344.4,897.9 347.6,897.4 350.8,897.6 354,898.1 357.2,898.2 360.4,897.7 363.6,897.6 366.9,897.6 370.1,896.9 373.3,896.7 376.5,896.8 379.7,897.8 382.9,897.6 386.1,897.3 389.3,897 392.5,897.5 395.8,897 399,897.4 402.2,898.1 405.4,897.6 408.6,897.8 411.8,897.9 415,898 418.2,897.9 421.4,897.9 424.7,897.5 427.9,897 431.1,897.2 434.3,897.1 437.5,897 440.7,896.8 443.9,897.6 447.1,897.8 450.3,897.1 453.6,897.6 456.8,898.1 460,898 463.2,898.1 466.4,897.1 469.6,898 472.8,897.4 476,897.9 479.2,898.2 482.5,898.2 485.7,898.1 488.9,898 492.1,898 495.3,898 498.5,897.8 501.7,897.8 504.9,897.4 508.1,897.8 511.4,897.6 514.6,896.3 517.8,896.8 521,897.6 524.2,897.4 527.4,898 530.6,897.9 533.8,898 537,897.6 540.3,897.8 543.5,898.2 546.7,897.9 549.9,898 553.1,897.7 556.3,898.1 559.5,896.8 562.7,896.8 565.9,897 569.2,897.5 572.4,898.1 575.6,896.3 578.8,896 582,896.7 585.2,896.7 588.4,896.6 591.6,897.8 594.8,897.7 598.1,897.7 601.3,897.8 604.5,897.7 607.7,897.9 610.9,897.9 614.1,897.8 617.3,897.7 620.5,897.8 623.7,898.1 627,898 630.2,898.1 633.4,898.2 636.6,897.5 639.8,897 643,896.9 646.2,897.2 649.4,897 652.6,897 655.9,897.6 659.1,897.3 662.3,896.9 665.5,897 668.7,897.5 671.9,896.9 675.1,897.8 678.3,898 681.5,897.6 684.8,897.5 688,897.4 691.2,898 694.4,898.1 697.6,897.5 700.8,896.8 704,897.4 707.2,897.4 710.4,897.3 713.7,897.6 716.9,898.1 720.1,897.7 723.3,897 726.5,896.6 729.7,896.9 732.9,897.4 736.1,897.9 739.3,897.5 742.6,896.9 745.8,897.6 749,897.4 752.2,898 755.4,897.4 758.6,897.7 761.8,898.1 765,898.1 768.2,898 771.5,897.3 774.7,896.9 777.9,898.1 781.1,898 784.3,898.1 787.5,897 790.7,896.6 793.9,897.5 797.1,897.8 800.4,898 803.6,897.5 806.8,898.1 810,898.1 813.2,897.7 816.4,896.8 819.6,897.1 822.8,897.9 826,897.2 829.3,897.1 832.5,898 835.7,897.7 838.9,898 842.1,898 845.3,897.7 848.5,897.9 851.7,897.7 854.9,897.9 858.2,898.1 861.4,897.9 864.6,897.9 867.8,898 871,898 874.2,897.5 877.4,896.9 880.6,897 883.8,897.5 887.1,897.2 890.3,897.4 893.5,896.9 896.7,896.3 899.9,895.9 903.1,895.8 906.3,895.8 909.5,897.2 912.7,897.2 916,897.6 919.2,897.4 922.4,897.3 925.6,896.7 928.8,897.5 932,897.8 935.2,897.7 938.4,897.6 941.6,897.5 944.9,897.2 948.1,897.3 951.3,897.2 954.5,896.8 957.7,897.4 960.9,897.2 964.1,896.7 967.3,896.4 970.5,896.9 973.8,897.9 977,897.7 980.2,897.5 983.4,897.7 986.6,897.9 989.8,898 993,897.2 996.2,897 999.4,897.3 1002.7,897.1 1005.9,897.2 1009.1,898 1012.3,897.9 1015.5,897.9" stroke="#66b6d7"/>
<path d="M148.5,896.7 151.7,897 154.9,897.6 158.1,897.2 161.3,897.6 164.6,897.8 167.8,897.6 171,897.7 174.2,897.4 177.4,897.6 180.6,898.1 183.8,897.6 187,897.6 190.2,898.1 193.5,897.3 196.7,897.6 199.9,897.9 203.1,897.7 206.3,897.1 209.5,896.1 212.7,896.5 215.9,895.9 219.1,896 222.4,896.5 225.6,897.1 228.8,897.2 232,897.1 235.2,897 238.4,897.1 241.6,897 244.8,896.9 248,896.5 251.3,896 254.5,896 257.7,896.3 260.9,896 264.1,895.3 267.3,896 270.5,896.2 273.7,895.9 276.9,896.1 280.2,897 283.4,896.8 286.6,896.9 289.8,896.8 293,896.1 296.2,896 299.4,896.9 302.6,897.3 305.8,896.5 309.1,896.9 312.3,896.9 315.5,897.1 318.7,897.3 321.9,897.4 325.1,897.4 328.3,897.1 331.5,897.5 334.7,897.3 338,897 341.2,896.6 344.4,896.8 347.6,897.4 350.8,897.7 354,897.5 357.2,897.7 360.4,897.6 363.6,897.7 366.9,897.6 370.1,897.6 373.3,897.7 376.5,897.2 379.7,897.7 382.9,897.3 386.1,897 389.3,897.1 392.5,897.4 395.8,897.4 399,896.9 402.2,896 405.4,896.1 408.6,896.1 411.8,897 415,896.9 418.2,897.2 421.4,897.1 424.7,896.6 427.9,896.5 431.1,896.7 434.3,897.1 437.5,896.4 440.7,896.2 443.9,896.8 447.1,896.7 450.3,896.9 453.6,896.6 456.8,896.8 460,896.7 463.2,896.7 466.4,896 469.6,896.8 472.8,896.5 476,896.5 479.2,896.2 482.5,897 485.7,896.4 488.9,896.9 492.1,897.1 495.3,897.1 498.5,897.2 501.7,897 504.9,897.7 508.1,897.8 511.4,896.8 514.6,897.7 517.8,897.7 521,897.3 524.2,896.8 527.4,895.8 530.6,897.3 533.8,897.1 537,897.2 540.3,897.2 543.5,897.8 546.7,897.4 549.9,897.5 553.1,897.4 556.3,897.4 559.5,897.4 562.7,897.3 565.9,897.2 569.2,896.8 572.4,897 575.6,897 578.8,897 582,897.1 585.2,896.6 588.4,896.6 591.6,896.7 594.8,896.8 598.1,896.4 601.3,897 604.5,896.1 607.7,896.5 610.9,896.5 614.1,896.6 617.3,896.5 620.5,895.5 623.7,895.7 627,894.9 630.2,894.8 633.4,895.8 636.6,896.1 639.8,896.5 643,897.2 646.2,896.4 649.4,896.5 652.6,896.1 655.9,896.9 659.1,897.2 662.3,896.5 665.5,896.3 668.7,895.8 671.9,896.5 675.1,897.6 678.3,897.1 681.5,897.3 684.8,897.9 688,897.8 691.2,897.8 694.4,898 697.6,897.9 700.8,897.8 704,897.8 707.2,896.8 710.4,896.6 713.7,895.5 716.9,895.6 720.1,896.2 723.3,896.4 726.5,896.1 729.7,896.4 732.9,896.7 736.1,896.6 739.3,897.2 742.6,897.1 745.8,897 749,897.4 752.2,897.2 755.4,897.3 758.6,897.2 761.8,897.2 765,897.2 768.2,896.4 771.5,896.8 774.7,896.2 777.9,895.8 781.1,895.8 784.3,896.2 787.5,895.8 790.7,896.8 793.9,896.8 797.1,897 800.4,897 803.6,896.8 806.8,896.6 810,896 813.2,896.7 816.4,896.4 819.6,896.3 822.8,897.2 826,897.3 829.3,897.3 832.5,897.1 835.7,897.3 838.9,897.1 842.1,896.9 845.3,897.6 848.5,897.6 851.7,897.4 854.9,897.5 858.2,897.4 861.4,897.4 864.6,898 867.8,897.7 871,897.4 874.2,897.1 877.4,897.3 880.6,896.7 883.8,896.7 887.1,896.9 890.3,897.2 893.5,897.6 896.7,897.2 899.9,897.4 903.1,896.9 906.3,896.4 909.5,896.8 912.7,897 916,896.8 919.2,897 922.4,897.1 925.6,897 928.8,897 932,897.1 935.2,896.9 938.4,897.1 941.6,896.9 944.9,896.8 948.1,897 951.3,896.9 954.5,897.1 957.7,897 960.9,897.1 964.1,896.5 967.3,895.9 970.5,895.8 973.8,896 977,896.4 980.2,896.8 983.4,896.8 986.6,896.9 989.8,897.2 993,897.3 996.2,896.6 999.4,895.9 1002.7,896.6 1005.9,897 1009.1,897.5 1012.3,896.2 1015.5,895.7" stroke="#852235"/>
<path d="M148.5,897.8 151.7,896.8 154.9,897.7 158.1,897.8 161.3,898.1 164.6,897.9 167.8,897.3 171,898.1 174.2,897.4 177.4,897.2 180.6,897.6 183.8,898 187,898.2 190.2,897.8 193.5,897.9 196.7,898.1 199.9,897.3 203.1,897.2 206.3,897.3 209.5,897.9 212.7,897.6 215.9,897.8 219.1,897.8 222.4,897.6 225.6,896.9 228.8,897.4 232,896.9 235.2,896.3 238.4,897 241.6,897.2 244.8,897.3 248,897.5 251.3,897.9 254.5,897.6 257.7,897.2 260.9,897.2 264.1,897.3 267.3,896.8 270.5,897.3 273.7,897.7 276.9,897.3 280.2,897.1 283.4,898.1 286.6,897.9 289.8,897.9 293,897.4 296.2,897.2 299.4,897.9 302.6,898.1 305.8,897.7 309.1,897.7 312.3,897.2 315.5,897.2 318.7,897.3 321.9,897.5 325.1,898 328.3,898 331.5,897.9 334.7,898.2 338,897 341.2,897.1 344.4,897.7 347.6,897.6 350.8,897.9 354,896.6 357.2,896.8 360.4,897.3 363.6,898.2 366.9,897.9 370.1,898 373.3,897.2 376.5,897.1 379.7,895.8 382.9,896 386.1,896.8 389.3,897.1 392.5,897.5 395.8,897.6 399,896.8 402.2,896.7 405.4,897.2 408.6,897.3 411.8,897.5 415,897.8 418.2,898 421.4,897.8 424.7,898 427.9,897.8 431.1,897.4 434.3,897.4 437.5,898 440.7,897 443.9,897.4 447.1,897.9 450.3,898.2 453.6,897.4 456.8,897 460,897.2 463.2,897.2 466.4,897.4 469.6,897.9 472.8,897.7 476,897.6 479.2,898.2 482.5,898.2 485.7,897.5 488.9,896.8 492.1,897.1 495.3,897.2 498.5,897.3 501.7,897.5 504.9,898 508.1,897.7 511.4,897.6 514.6,897.5 517.8,898.1 521,897.7 524.2,897.2 527.4,897.3 530.6,897.5 533.8,898 537,897.9 540.3,898 543.5,897.8 546.7,898.2 549.9,897.9 553.1,898.1 556.3,897.6 559.5,897.5 562.7,897.1 565.9,898 569.2,898 572.4,898 575.6,897.3 578.8,897 582,897.7 585.2,897.9 588.4,897.8 591.6,897.7 594.8,897.9 598.1,898.1 601.3,897.9 604.5,898.1 607.7,898.1 610.9,897.8 614.1,897.5 617.3,897.3 620.5,897.1 623.7,897.3 627,897.5 630.2,897.6 633.4,898 636.6,898.1 639.8,898.1 643,898.1 646.2,898 649.4,898.1 652.6,898.1 655.9,898 659.1,897.9 662.3,897.8 665.5,898.2 668.7,897.9 671.9,897 675.1,897.2 678.3,895.8 681.5,896.5 684.8,896 688,897.1 691.2,896.9 694.4,897.6 697.6,897.5 700.8,896.8 704,896.9 707.2,896.7 710.4,896.9 713.7,897.2 716.9,897.8 720.1,897.9 723.3,898 726.5,897.2 729.7,897.2 732.9,898 736.1,898.2 739.3,898.1 742.6,897.9 745.8,898 749,898.1 752.2,898.1 755.4,897.8 758.6,897.6 761.8,897.8 765,897.7 768.2,897.8 771.5,897.7 774.7,898 777.9,897.6 781.1,898.2 784.3,897.7 787.5,897.3 790.7,897.3 793.9,897.3 797.1,896.3 800.4,896.5 803.6,896.7 806.8,896.9 810,897.4 813.2,897.7 816.4,898 819.6,897.6 822.8,897.7 826,897.7 829.3,898.2 832.5,897.8 835.7,897.8 838.9,897 842.1,896.5 845.3,897.1 848.5,897.6 851.7,897.9 854.9,897.9 858.2,898 861.4,898.2 864.6,898 867.8,898.2 871,898.2 874.2,897.9 877.4,897.6 880.6,897.8 883.8,898.2 887.1,897.7 890.3,898 893.5,897.1 896.7,897.8 899.9,898.1 903.1,898.2 906.3,898 909.5,897.7 912.7,898.1 916,897.9 919.2,897.7 922.4,898 925.6,897.9 928.8,898.2 932,897.2 935.2,897.6 938.4,896.5 941.6,896 944.9,897.1 948.1,897.9 951.3,897.7 954.5,897.1 957.7,896.6 960.9,896.8 964.1,897.4 967.3,897.7 970.5,897.5 973.8,897.8 977,898.1 980.2,898 983.4,898 986.6,898.1 989.8,897.8 993,898.1 996.2,897.6 999.4,897.2 1002.7,897.6 1005.9,897.8 1009.1,896.5 1012.3,897.1 1015.5,896.7" stroke="#1b6a9f"/>
<path d="M148.5,897.5 151.7,898.1 154.9,897.9 158.1,898 161.3,897.7 164.6,897.8 167.8,897.4 171,897 174.2,897.4 177.4,897.6 180.6,897.6 183.8,896.2 187,897.4 190.2,897.8 193.5,897.2 196.7,896.4 199.9,896.3 203.1,897.7 206.3,897.3 209.5,898.2 212.7,897.6 215.9,897.9 219.1,897.9 222.4,897.7 225.6,898.2 228.8,897.9 232,898.1 235.2,898 238.4,897.9 241.6,897.9 244.8,897.9 248,897.2 251.3,897.6 254.5,897 257.7,897.8 260.9,898.1 264.1,898.1 267.3,897.8 270.5,897.9 273.7,897.6 276.9,897.5 280.2,898 283.4,898.2 286.6,897.7 289.8,897.9 293,897.4 296.2,897.9 299.4,897.4 302.6,897.4 305.8,896.6 309.1,896.6 312.3,895.6 315.5,896.7 318.7,897.4 321.9,898.1 325.1,898.1 328.3,898 331.5,897.7 334.7,897.6 338,897.7 341.2,898.2 344.4,897.4 347.6,897.5 350.8,897.7 354,898.2 357.2,898 360.4,898 363.6,897.8 366.9,898.2 370.1,897.8 373.3,898.1 376.5,897.5 379.7,896.9 382.9,897.5 386.1,898 389.3,898 392.5,897.5 395.8,897.6 399,897.3 402.2,897.5 405.4,897.9 408.6,898 411.8,897.7 415,898.2 418.2,898.2 421.4,897.9 424.7,898 427.9,898.1 431.1,897.8 434.3,898.1 437.5,898 440.7,897.9 443.9,898.2 447.1,897.8 450.3,897.2 453.6,897.4 456.8,896.6 460,896.6 463.2,897.1 466.4,897.7 469.6,898.2 472.8,897.7 476,897 479.2,896.6 482.5,897.4 485.7,897.9 488.9,897.4 492.1,897.7 495.3,898 498.5,897.7 501.7,897.5 504.9,897.3 508.1,896.7 511.4,896.5 514.6,895.9 517.8,896.8 521,896.8 524.2,896.6 527.4,896.6 530.6,897.3 533.8,896.6 537,896.9 540.3,898 543.5,897.8 546.7,898 549.9,897.7 553.1,897.6 556.3,898 559.5,898.2 562.7,897.6 565.9,897.8 569.2,897.9 572.4,897.7 575.6,898.1 578.8,898.1 582,897.9 585.2,898.1 588.4,898.2 591.6,897.9 594.8,897.9 598.1,898.2 601.3,897.7 604.5,898.2 607.7,896.9 610.9,897.4 614.1,897.6 617.3,897.8 620.5,898.1 623.7,897.7 627,898.2 630.2,898.2 633.4,897.8 636.6,897.9 639.8,898.1 643,897.9 646.2,898.1 649.4,898.1 652.6,897.4 655.9,897.3 659.1,897.3 662.3,897.4 665.5,897.9 668.7,898 671.9,897.7 675.1,898.2 678.3,897.5 681.5,897.9 684.8,896.4 688,895.2 691.2,895.3 694.4,894.7 697.6,895 700.8,896.7 704,897.8 707.2,898.1 710.4,897.6 713.7,897.4 716.9,897.1 720.1,897.6 723.3,897.6 726.5,898.1 729.7,897.9 732.9,898.1 736.1,897.9 739.3,897.1 742.6,897.1 745.8,896.8 749,896.9 752.2,897.2 755.4,897 758.6,896.9 761.8,897.3 765,897.3 768.2,897.5 771.5,897.8 774.7,897.2 777.9,897 781.1,896.8 784.3,896.8 787.5,897.3 790.7,897.4 793.9,897.9 797.1,898 800.4,897.5 803.6,897.8 806.8,897.4 810,898.1 813.2,897 816.4,896.3 819.6,896.3 822.8,896.5 826,897.3 829.3,897.6 832.5,897.9 835.7,897.5 838.9,898.1 842.1,898.1 845.3,897.2 848.5,898.1 851.7,897.4 854.9,898 858.2,898 861.4,897.5 864.6,897.8 867.8,898.1 871,898.2 874.2,898 877.4,897.2 880.6,897.4 883.8,896.8 887.1,897 890.3,898 893.5,898 896.7,897.7 899.9,897.9 903.1,898.1 906.3,897.4 909.5,898.1 912.7,897.8 916,897.7 919.2,897.6 922.4,897.7 925.6,897.4 928.8,897.4 932,897.5 935.2,897.9 938.4,897.1 941.6,897.8 944.9,897.9 948.1,897.6 951.3,897.7 954.5,895.5 957.7,896.8 960.9,896.9 964.1,897.2 967.3,896.8 970.5,898.1 973.8,897.6 977,897.4 980.2,896.9 983.4,897.6 986.6,898 989.8,898 993,897.1 996.2,898 999.4,898 1002.7,896.8 1005.9,896.9 1009.1,897.8 1012.3,897.6 1015.5,897.6" stroke="#bb5d34"/>
<path d="M148.5,889 150.1,891.6 151.7,893.9 153.3,895.7 154.9,897.2 156.5,898.4 158.1,897.7 159.7,893.5 161.3,887.5 162.9,881.4 164.6,877.2 166.2,874.9 167.8,873.1 169.4,871.5 171,869.8 172.6,867.7 174.2,864.6 175.8,861.2 177.4,858.7 179,858.4 180.6,860 182.2,861.8 183.8,862.5 185.4,862.4 187,862.2 188.6,861.9 190.2,860.5 191.8,857.8 193.5,854.8 195.1,851.8 196.7,849.8 198.3,848.9 199.9,848.2 201.5,846.8 203.1,842.8 204.7,837.1 206.3,829.1 207.9,818.1 209.5,805.4 211.1,792.1 212.7,775.4 214.3,759.7 215.9,748.7 217.5,748.6 219.1,755.8 220.8,765.1 222.4,777.4 224,790 225.6,804 227.2,816.8 228.8,824.8 230.4,830.7 232,835.4 233.6,839.1 235.2,841.8 236.8,843.8 238.4,845.3 240,846.8 241.6,849 243.2,853.1 244.8,859.3 246.4,864.1 248,865.6 249.7,866.5 251.3,867.2 252.9,867.8 254.5,868.6 256.1,869.7 257.7,871.7 259.3,874.2 260.9,876.6 262.5,878 264.1,878.1 265.7,877.7 267.3,877.2 268.9,876.7 270.5,876.5 272.1,876.9 273.7,877.9 275.3,879.2 276.9,881 278.5,883.8 280.2,886.3 281.8,887.4 283.4,886.3 285,883.7 286.6,880.8 288.2,878.6 289.8,878.2 291.4,878.6 293,879.2 294.6,879.8 296.2,880.4 297.8,880.7 299.4,880.6 301,880.2 302.6,879.7 304.2,879.1 305.8,878.4 307.4,877.7 309.1,877.1 310.7,876.3 312.3,875.4 313.9,874.8 315.5,874.5 317.1,876.1 318.7,879.1 320.3,880.7 321.9,880.2 323.5,879.6 325.1,880.1 326.7,882.3 328.3,883.1 329.9,881.1 331.5,879.5 333.1,880.2 334.7,881.3 336.4,881.4 338,881 339.6,880.7 341.2,880.8 342.8,881.3 344.4,882.2 346,883.2 347.6,884.2 349.2,885.2 350.8,886.3 352.4,887.6 354,889.4 355.6,892.4 357.2,892.2 358.8,891.9 360.4,891.5 362,891.1 363.6,890.8 365.2,890.7 366.9,890.9 368.5,891.4 370.1,891.9 371.7,892.3 373.3,892.3 374.9,891.4 376.5,889.9 378.1,888.4 379.7,887.5 381.3,887.5 382.9,887.8 384.5,888.4 386.1,888.9 387.7,889.4 389.3,889.7 390.9,889.9 392.5,890.2 394.1,891.2 395.8,893.6 397.4,893.8 399,894 400.6,894 402.2,894.1 403.8,894.2 405.4,894.2 407,894.4 408.6,894.5 410.2,894.6 411.8,894.8 413.4,894.9 415,895 416.6,895.1 418.2,895.2 419.8,895.3 421.4,895.3 423.1,895.3 424.7,895.3 426.3,895.2 427.9,895.2 429.5,895.1 431.1,895.1 432.7,895 434.3,895 435.9,895 437.5,895 439.1,895 440.7,895.2 442.3,895.4 443.9,895.7 445.5,896 447.1,896.3 448.7,896.6 450.3,896.9 451.9,897 453.6,897.1 455.2,897 456.8,896.9 458.4,896.8 460,896.6 461.6,896.4 463.2,896.2 464.8,896 466.4,895.8 468,895.7 469.6,895.7 471.2,895.7 472.8,895.7 474.4,895.7 476,895.7 477.6,895.8 479.2,895.8 480.9,895.9 482.5,895.9 484.1,896 485.7,896 487.3,896.1 488.9,896.1 490.5,896.2 492.1,896.2 493.7,896.3 495.3,896.3 496.9,896.3 498.5,896.4 500.1,896.4 501.7,896.4 503.3,896.4 504.9,896.4 506.5,896.3 508.1,896.3 509.8,896.3 511.4,896.2 513,896.2 514.6,896.1 516.2,896.1 517.8,896 519.4,896 521,895.9 522.6,895.9 524.2,895.8 525.8,895.8 527.4,895.7 529,895.7 530.6,895.7 532.2,895.7 533.8,895.7 535.4,895.8 537,896 538.7,896.3 540.3,896.7 541.9,897.1 543.5,897.5 545.1,897.7 546.7,897.8 548.3,897.7 549.9,897.6 551.5,897.5 553.1,897.2 554.7,897 556.3,896.7 557.9,896.5 559.5,896.2 561.1,896 562.7,895.8 564.3,895.7 565.9,895.7 567.5,895.7 569.2,895.7 570.8,895.7 572.4,895.7 574,895.7 575.6,895.8 577.2,895.8 578.8,895.8 580.4,895.9 582,895.9 583.6,896 585.2,896 586.8,896.1 588.4,896.1 590,896.2 591.6,896.2 593.2,896.2 594.8,896.3 596.5,896.3 598.1,896.4 599.7,896.4 601.3,896.4 602.9,896.5 604.5,896.5 606.1,896.6 607.7,896.6 609.3,896.7 610.9,896.7 612.5,896.8 614.1,896.8 615.7,896.9 617.3,896.9 618.9,896.9 620.5,897 622.1,897 623.7,897 625.4,897.1 627,897.1 628.6,897.1 630.2,897.1 631.8,897.1 633.4,897.1 635,897 636.6,897 638.2,897 639.8,897 641.4,896.9 643,896.9 644.6,896.8 646.2,896.8 647.8,896.7 649.4,896.7 651,896.6 652.6,896.6 654.2,896.5 655.9,896.5 657.5,896.5 659.1,896.4 660.7,896.4 662.3,896.4 663.9,896.3 665.5,896.3 667.1,896.3 668.7,896.3 670.3,896.3 671.9,896.2 673.5,896.2 675.1,896.2 676.7,896.2 678.3,896.2 679.9,896.2 681.5,896.1 683.1,896.1 684.8,896.1 686.4,896.1 688,896.1 689.6,896.1 691.2,896 692.8,896 694.4,896 696,896 697.6,896 699.2,896 700.8,895.9 702.4,895.9 704,895.9 705.6,895.9 707.2,895.9 708.8,895.9 710.4,895.9 712.1,895.8 713.7,895.8 715.3,895.8 716.9,895.8 718.5,895.8 720.1,895.7 721.7,895.7 723.3,895.7 724.9,895.7 726.5,895.7 728.1,895.6 729.7,895.6 731.3,895.6 732.9,895.6 734.5,895.5 736.1,895.5 737.7,895.5 739.3,895.4 741,895.4 742.6,895.4 744.2,895.3 745.8,895.3 747.4,895.2 749,895.2 750.6,895.2 752.2,895.1 753.8,895.1 755.4,895 757,895 758.6,895 760.2,894.9 761.8,894.9 763.4,894.8 765,894.8 766.6,894.7 768.2,894.7 769.9,894.6 771.5,894.6 773.1,894.5 774.7,894.5 776.3,894.4 777.9,894.4 779.5,894.3 781.1,894.2 782.7,894.2 784.3,894.1 785.9,894 787.5,894 789.1,893.9 790.7,893.8 792.3,893.7 793.9,893.5 795.5,893.3 797.1,893.1 798.8,892.9 800.4,892.7 802,892.6 803.6,892.4 805.2,892.3 806.8,892.2 808.4,892.2 810,893 811.6,894.1 813.2,894.5 814.8,894.4 816.4,894.2 818,894 819.6,893.7 821.2,893.4 822.8,893.1 824.4,892.8 826,892.5 827.6,892.3 829.3,892.2 830.9,892.1 832.5,892 834.1,891.9 835.7,891.9 837.3,891.8 838.9,891.7 840.5,891.6 842.1,891.5 843.7,891.1 845.3,890.4 846.9,889.6 848.5,888.7 850.1,887.8 851.7,887 853.3,886.6 854.9,886.4 856.5,886.5 858.2,886.6 859.8,886.8 861.4,887.1 863,887.4 864.6,887.7 866.2,888.1 867.8,888.6 869.4,889.8 871,891.5 872.6,893.1 874.2,894.2 875.8,894.4 877.4,893.8 879,892.8 880.6,891.5 882.2,890.2 883.8,889.2 885.4,888.5 887.1,888.4 888.7,889.2 890.3,890.2 891.9,891.1 893.5,891.2 895.1,890.6 896.7,889.8 898.3,889.1 899.9,889.1 901.5,890.2 903.1,891.9 904.7,893.4 906.3,894 907.9,894.3 909.5,894.6 911.1,894.8 912.7,895 914.4,895.2 916,895.3 917.6,895.4 919.2,895.3 920.8,894.6 922.4,893.7 924,892.2 925.6,890.5 927.2,888.7 928.8,886.8 930.4,885.3 932,884.1 933.6,883.6 935.2,884 936.8,885.2 938.4,886.5 940,887.3 941.6,887 943.2,885.8 944.9,884.4 946.5,883.6 948.1,883.9 949.7,884.9 951.3,886 952.9,886.7 954.5,886.4 956.1,885.4 957.7,883.9 959.3,882.2 960.9,880.6 962.5,879.4 964.1,878.8 965.7,878.8 967.3,879 968.9,879.4 970.5,879.8 972.1,880.3 973.8,880.7 975.4,881.2 977,881.6 978.6,881.8 980.2,882 981.8,881.6 983.4,880.6 985,879.5 986.6,878.8 988.2,879.1 989.8,879.9 991.4,880.9 993,881.3 994.6,881.1 996.2,880.7 997.8,880.1 999.4,879.6 1001,879.3 1002.7,879.3 1004.3,879.3 1005.9,879.4 1007.5,879.4 1009.1,879.5 1010.7,879.6 1012.3,879.8 1013.9,880 1015.5,880.3" stroke="#1b6a9f"/>
<path d="M148.5,898.5 150.1,898.5 151.7,898.5 153.3,898.5 154.9,898.5 156.5,898.5 158.1,898.5 159.7,898.5 161.3,898.5 162.9,898.5 164.6,898.5 166.2,898.5 167.8,898.5 169.4,898.5 171,898.5 172.6,898.4 174.2,898.4 175.8,898.4 177.4,898.4 179,898.3 180.6,898.2 182.2,898.1 183.8,898 185.4,897.7 187,897.4 188.6,897 190.2,896.4 191.8,895.7 193.5,894.9 195.1,894 196.7,893.1 198.3,892.3 199.9,891.5 201.5,891 203.1,890.6 204.7,890.5 206.3,890.6 207.9,890.8 209.5,891.2 211.1,891.7 212.7,891.9 214.3,892 215.9,892.2 217.5,892.2 219.1,892.2 220.8,891.8 222.4,891.3 224,890.8 225.6,890.6 227.2,890.1 228.8,889.3 230.4,889 232,888.4 233.6,888 235.2,887.3 236.8,886.6 238.4,885.8 240,885.2 241.6,884.8 243.2,884.4 244.8,884.5 246.4,884 248,883.6 249.7,883.1 251.3,882.7 252.9,881.8 254.5,881.4 256.1,880.9 257.7,880.3 259.3,880 260.9,878.9 262.5,878.5 264.1,878.5 265.7,876.9 267.3,875.1 268.9,874.4 270.5,874.7 272.1,874.2 273.7,874.4 275.3,872.6 276.9,872 278.5,871.1 280.2,870.7 281.8,868.8 283.4,867.6 285,866.6 286.6,865.8 288.2,864.8 289.8,862.7 291.4,860.9 293,859.8 294.6,857.7 296.2,855.1 297.8,852.8 299.4,850 301,847.6 302.6,844.1 304.2,840.5 305.8,835.6 307.4,831.1 309.1,825.9 310.7,819.3 312.3,811.6 313.9,802.9 315.5,792.7 317.1,781.5 318.7,768.6 320.3,756 321.9,745.1 323.5,738.8 325.1,738.6 326.7,745.2 328.3,755.7 329.9,768.4 331.5,781.4 333.1,792.9 334.7,803.3 336.4,812.1 338,820.2 339.6,826.4 341.2,832.5 342.8,837.6 344.4,841.5 346,845.4 347.6,848.7 349.2,851.8 350.8,855 352.4,857.8 354,859.7 355.6,861.5 357.2,863.3 358.8,865.2 360.4,867 362,867.6 363.6,869.1 365.2,870.5 366.9,871.4 368.5,872.9 370.1,873.8 371.7,874.5 373.3,875.4 374.9,876.6 376.5,877.4 378.1,877.5 379.7,878.5 381.3,879.2 382.9,879.8 384.5,880.2 386.1,881.1 387.7,881.3 389.3,880.9 390.9,881 392.5,881.5 394.1,882 395.8,883.6 397.4,883.6 399,884.6 400.6,884.4 402.2,885 403.8,884.8 405.4,885.9 407,886.2 408.6,886.5 410.2,886.8 411.8,886.9 413.4,887.5 415,887.4 416.6,887.5 418.2,887.7 419.8,888.1 421.4,888.5 423.1,888.1 424.7,888.4 426.3,888.2 427.9,888.6 429.5,889.3 431.1,889.3 432.7,889.7 434.3,889.8 435.9,890 437.5,890.6 439.1,890.6 440.7,890.9 442.3,891 443.9,891.1 445.5,891.4 447.1,891.4 448.7,891.7 450.3,891.6 451.9,892 453.6,891.9 455.2,891.9 456.8,891.9 458.4,892.5 460,892.2 461.6,892.2 463.2,892.3 464.8,891.7 466.4,892.2 468,892.6 469.6,893.2 471.2,892.8 472.8,893.2 474.4,893.3 476,893.5 477.6,893.5 479.2,893.5 480.9,893.3 482.5,893.5 484.1,894 485.7,894.1 487.3,893.9 488.9,893.4 490.5,893.3 492.1,893.9 493.7,894.5 495.3,894.4 496.9,894.2 498.5,894.6 500.1,894.6 501.7,894.7 503.3,894.8 504.9,894.6 506.5,894.4 508.1,894.9 509.8,894.8 511.4,894.7 513,894.4 514.6,894.8 516.2,894.7 517.8,894.8 519.4,895.3 521,894.7 522.6,895.3 524.2,895.3 525.8,895.3 527.4,895.5 529,895.6 530.6,895.7 532.2,895.6 533.8,895.4 535.4,895.9 537,895.8 538.7,896 540.3,895.7 541.9,895.7 543.5,895.1 545.1,895 546.7,895.8 548.3,895.7 549.9,895.8 551.5,895.9 553.1,896.2 554.7,896.2 556.3,895.6 557.9,896.2 559.5,896.2 561.1,895.9 562.7,896.1 564.3,896 565.9,896.1 567.5,896.3 569.2,896.2 570.8,896.1 572.4,896 574,896.1 575.6,896.1 577.2,896.7 578.8,896.6 580.4,896.6 582,896.4 583.6,896.8 585.2,896.9 586.8,896.6 588.4,896.7 590,896.6 591.6,896.8 593.2,896.9 594.8,896.9 596.5,896.6 598.1,896.8 599.7,896.7 601.3,896.4 602.9,896.2 604.5,896.8 606.1,897.1 607.7,897.2 609.3,897 610.9,896.7 612.5,897 614.1,897 615.7,896.7 617.3,897 618.9,897 620.5,896.8 622.1,896.9 623.7,896.9 625.4,897.3 627,897 628.6,897 630.2,896.8 631.8,896.8 633.4,897 635,897.1 636.6,897.5 638.2,897.4 639.8,897.4 641.4,897.4 643,897.3 644.6,897.3 646.2,897.2 647.8,897.4 649.4,897.4 651,897.5 652.6,897.3 654.2,897.1 655.9,896.9 657.5,896.1 659.1,896.4 660.7,896.2 662.3,896.8 663.9,897.4 665.5,897.3 667.1,896.9 668.7,896.5 670.3,896.8 671.9,896.6 673.5,897.4 675.1,897.2 676.7,896.7 678.3,896.9 679.9,897.1 681.5,897.4 683.1,897.6 684.8,897.3 686.4,897.6 688,896.9 689.6,897.2 691.2,897.5 692.8,897.8 694.4,897.6 696,897.8 697.6,897.5 699.2,897.4 700.8,897.8 702.4,897.5 704,897.6 705.6,897.7 707.2,897.4 708.8,897.6 710.4,897.8 712.1,897.7 713.7,897.8 715.3,897.6 716.9,896.8 718.5,896.7 720.1,896.1 721.7,896 723.3,897.3 724.9,897.4 726.5,897.5 728.1,897.9 729.7,897.6 731.3,897.5 732.9,897.1 734.5,896.8 736.1,896.8 737.7,897.1 739.3,897.8 741,897.9 742.6,898 744.2,897.9 745.8,898 747.4,897.7 749,897.8 750.6,897.8 752.2,897.9 753.8,897.8 755.4,897.7 757,897.8 758.6,897.9 760.2,898.1 761.8,897.9 763.4,897.6 765,897.5 766.6,897.4 768.2,897.5 769.9,897.6 771.5,897.9 773.1,898 774.7,898.1 776.3,897.4 777.9,897.9 779.5,898.1 781.1,898.1 782.7,897.8 784.3,897.8 785.9,897.6 787.5,897.5 789.1,896.9 790.7,896.7 792.3,897.7 793.9,897.7 795.5,898.1 797.1,897.7 798.8,897.8 800.4,897.7 802,897.6 803.6,897.6 805.2,897.9 806.8,897.9 808.4,897.5 810,897.8 811.6,898.1 813.2,897.4 814.8,897 816.4,897.7 818,897.1 819.6,897.8 821.2,897.6 822.8,896.7 824.4,897.6 826,898 827.6,898.1 829.3,897.7 830.9,897.4 832.5,897.5 834.1,897.2 835.7,897.7 837.3,898.1 838.9,898.1 840.5,898.2 842.1,898.1 843.7,898.1 845.3,898.2 846.9,897.8 848.5,898.1 850.1,898 851.7,897.4 853.3,898.2 854.9,897.9 856.5,898.2 858.2,898.1 859.8,898 861.4,897.9 863,897.7 864.6,898.1 866.2,898.2 867.8,898 869.4,898.1 871,898.2 872.6,898.1 874.2,898 875.8,898 877.4,898 879,897.8 880.6,898.1 882.2,897.8 883.8,897.9 885.4,897.7 887.1,897.9 888.7,897.6 890.3,897 891.9,896.4 893.5,896.2 895.1,897 896.7,897.5 898.3,898.3 899.9,898.1 901.5,898.3 903.1,898.2 904.7,898 906.3,898.3 907.9,898.1 909.5,897.9 911.1,898.2 912.7,898.2 914.4,898.2 916,898.2 917.6,898.1 919.2,898.2 920.8,898.2 922.4,897.9 924,897.9 925.6,898.2 927.2,897.9 928.8,898.2 930.4,898.2 932,898.2 933.6,898.1 935.2,898.3 936.8,898.1 938.4,897.8 940,897.7 941.6,897.4 943.2,897.6 944.9,898.2 946.5,898.1 948.1,898.2 949.7,898 951.3,897.9 952.9,898.2 954.5,898.3 956.1,898.4 957.7,898.2 959.3,897.9 960.9,898.1 962.5,898.3 964.1,898.2 965.7,898.3 967.3,898.1 968.9,897.8 970.5,897.8 972.1,898.3 973.8,898.1 975.4,898.3 977,898.3 978.6,897.6 980.2,898.1 981.8,898 983.4,898.3 985,898.2 986.6,897.8 988.2,897.9 989.8,897.9 991.4,897.9 993,897.5 994.6,897 996.2,897.6 997.8,898.1 999.4,897.7 1001,898.2 1002.7,897.5 1004.3,897.8 1005.9,898.4 1007.5,898.4 1009.1,898.3 1010.7,897.9 1012.3,898.3 1013.9,898.4 1015.5,898.1" stroke="#bb5d34"/>
<path d="M148.5,896.7 150.1,896.6 151.7,896.7 153.3,896.6 154.9,896.4 156.5,896.7 158.1,896.8 159.7,896.5 161.3,896.7 162.9,896.7 164.6,896.4 166.2,896.7 167.8,896.3 169.4,896.3 171,896.2 172.6,895.4 174.2,896.1 175.8,895.8 177.4,896.5 179,896 180.6,896.5 182.2,896.3 183.8,896.1 185.4,895.8 187,895.7 188.6,896.3 190.2,896.4 191.8,895.8 193.5,896.1 195.1,896.3 196.7,896.2 198.3,895.2 199.9,895.9 201.5,895.9 203.1,895.9 204.7,896.1 206.3,895.8 207.9,895.9 209.5,895.7 211.1,895.4 212.7,895.8 214.3,895.9 215.9,895.9 217.5,895.7 219.1,895.2 220.8,895 222.4,894.9 224,895.6 225.6,895.6 227.2,895.7 228.8,895.4 230.4,895.4 232,895.6 233.6,895.6 235.2,895.5 236.8,894.9 238.4,895 240,895.3 241.6,894.7 243.2,894.8 244.8,895.2 246.4,894.8 248,895.1 249.7,895.1 251.3,894.6 252.9,894.9 254.5,894.6 256.1,894.3 257.7,894.4 259.3,894.8 260.9,894.6 262.5,894.5 264.1,894.6 265.7,894.1 267.3,894 268.9,894.5 270.5,894.3 272.1,894 273.7,894.3 275.3,893.9 276.9,893.4 278.5,893.8 280.2,894.1 281.8,894 283.4,893.8 285,893.6 286.6,893.8 288.2,893.7 289.8,893.1 291.4,892.6 293,892.9 294.6,892.5 296.2,893.4 297.8,893.3 299.4,893.2 301,892.8 302.6,893 304.2,892.7 305.8,892.8 307.4,892.7 309.1,892.3 310.7,892.6 312.3,892.5 313.9,892.5 315.5,892.3 317.1,891.7 318.7,891.9 320.3,891.9 321.9,891.3 323.5,891.7 325.1,891 326.7,891.3 328.3,891.5 329.9,891.2 331.5,891.1 333.1,891.1 334.7,890.9 336.4,890.2 338,890.4 339.6,889.9 341.2,889.7 342.8,889.8 344.4,890.1 346,889.6 347.6,889.2 349.2,888.8 350.8,889.1 352.4,888.6 354,888.6 355.6,888.1 357.2,888.7 358.8,888 360.4,887.6 362,887.3 363.6,887.9 365.2,887.5 366.9,887.2 368.5,886.9 370.1,886.9 371.7,886.3 373.3,886 374.9,885.7 376.5,885.2 378.1,884.6 379.7,884.8 381.3,884.8 382.9,884.4 384.5,883.9 386.1,883.5 387.7,883 389.3,881.7 390.9,881.2 392.5,881.3 394.1,880.6 395.8,880.9 397.4,880.5 399,879.3 400.6,878.7 402.2,878.6 403.8,877.9 405.4,877.3 407,876.7 408.6,875.5 410.2,874.6 411.8,874 413.4,872.7 415,872.5 416.6,871.4 418.2,870 419.8,868.5 421.4,867.5 423.1,865.7 424.7,863.9 426.3,861.9 427.9,859.7 429.5,857.6 431.1,855.2 432.7,852.2 434.3,849.5 435.9,845.7 437.5,841.2 439.1,836.6 440.7,830.8 442.3,823.5 443.9,815.9 445.5,805.6 447.1,793.7 448.7,780.5 450.3,766.5 451.9,753.2 453.6,743.3 455.2,741 456.8,747.7 458.4,760.2 460,773.9 461.6,788.1 463.2,801.2 464.8,812 466.4,821.1 468,828.2 469.6,834.9 471.2,840 472.8,845 474.4,849.2 476,851.9 477.6,855.6 479.2,857.9 480.9,860.5 482.5,862.9 484.1,864.5 485.7,865.9 487.3,868 488.9,869.6 490.5,871.1 492.1,872.4 493.7,873.5 495.3,874.1 496.9,874.6 498.5,875.7 500.1,876.7 501.7,878 503.3,878.2 504.9,879.4 506.5,879.6 508.1,879.9 509.8,880.3 511.4,881.2 513,882.3 514.6,882.6 516.2,883.3 517.8,883.7 519.4,884.2 521,884 522.6,883.9 524.2,884.8 525.8,884.6 527.4,885.6 529,886.3 530.6,886.6 532.2,887 533.8,887.3 535.4,887.4 537,887.5 538.7,887.2 540.3,887.5 541.9,888.1 543.5,888.1 545.1,888.8 546.7,888.8 548.3,889.3 549.9,889 551.5,889.7 553.1,890 554.7,889.9 556.3,889.9 557.9,890.1 559.5,889.8 561.1,890.3 562.7,891.1 564.3,890.6 565.9,890.7 567.5,890.1 569.2,890.2 570.8,890.6 572.4,891.6 574,891.4 575.6,891 577.2,891.6 578.8,891.4 580.4,891.8 582,892.2 583.6,891.8 585.2,892.1 586.8,892.3 588.4,892.4 590,893.1 591.6,893.3 593.2,893 594.8,893.1 596.5,893.6 598.1,893.8 599.7,893.7 601.3,893.6 602.9,893.7 604.5,893.5 606.1,893.6 607.7,894 609.3,894 610.9,894 612.5,894.4 614.1,894.3 615.7,894.4 617.3,894 618.9,894.1 620.5,894.3 622.1,894.9 623.7,894.3 625.4,894 627,894.1 628.6,895.1 630.2,894.6 631.8,894.8 633.4,894.6 635,895.3 636.6,895.2 638.2,895.4 639.8,895.4 641.4,895.3 643,895.4 644.6,895.1 646.2,895.5 647.8,895.5 649.4,895.4 651,895.5 652.6,895.8 654.2,895.7 655.9,895.9 657.5,895.6 659.1,895.5 660.7,895 662.3,895.1 663.9,895.6 665.5,895.7 667.1,896 668.7,896.3 670.3,896.1 671.9,895.9 673.5,895.7 675.1,895.7 676.7,895.6 678.3,895.8 679.9,896.5 681.5,896.1 683.1,896.3 684.8,895.7 686.4,896.4 688,896.4 689.6,896.4 691.2,896.3 692.8,896.4 694.4,896.2 696,896.4 697.6,896.7 699.2,896.5 700.8,896.8 702.4,896.5 704,896.9 705.6,896.6 707.2,896.6 708.8,896.9 710.4,896.9 712.1,896.9 713.7,896.4 715.3,896.9 716.9,896.4 718.5,896.2 720.1,896.8 721.7,897 723.3,896.9 724.9,896.8 726.5,896.9 728.1,897.2 729.7,897.1 731.3,896.9 732.9,897.3 734.5,896.8 736.1,896.2 737.7,896.3 739.3,896.5 741,897.1 742.6,897.1 744.2,897.2 745.8,897.2 747.4,896.7 749,896.9 750.6,896.4 752.2,897 753.8,897.3 755.4,896.9 757,897.4 758.6,897.5 760.2,897.4 761.8,897.4 763.4,897.3 765,896.6 766.6,896.5 768.2,896.9 769.9,896.7 771.5,897.3 773.1,897.4 774.7,897 776.3,897.1 777.9,896.6 779.5,896.7 781.1,896.7 782.7,897 784.3,897.6 785.9,897.3 787.5,897.2 789.1,896.6 790.7,897.1 792.3,897.4 793.9,897.7 795.5,897 797.1,896.8 798.8,896.9 800.4,897.4 802,897.3 803.6,897.6 805.2,897.6 806.8,897.8 808.4,897.6 810,897.5 811.6,897.7 813.2,897.7 814.8,897.3 816.4,897.5 818,897.2 819.6,897 821.2,897 822.8,896.6 824.4,897.2 826,897.8 827.6,897.9 829.3,896.6 830.9,896.8 832.5,897.5 834.1,896.8 835.7,897.6 837.3,897.7 838.9,897.4 840.5,897.6 842.1,897.3 843.7,897.1 845.3,897.4 846.9,898 848.5,897.7 850.1,897.8 851.7,897.8 853.3,897.6 854.9,897.3 856.5,897.5 858.2,897.6 859.8,897.8 861.4,897.3 863,896.9 864.6,896.7 866.2,897.3 867.8,897.2 869.4,897.7 871,897.2 872.6,897.1 874.2,897.3 875.8,897.4 877.4,898 879,898.1 880.6,898 882.2,898.1 883.8,897.9 885.4,897.9 887.1,897.7 888.7,897.2 890.3,897.5 891.9,897.9 893.5,897.8 895.1,897.6 896.7,897.9 898.3,897.4 899.9,897.7 901.5,897.6 903.1,898 904.7,897.8 906.3,898.1 907.9,898 909.5,898.1 911.1,898 912.7,898 914.4,897 916,897.1 917.6,897.4 919.2,898.1 920.8,896.6 922.4,896.9 924,897.2 925.6,897.9 927.2,897.9 928.8,897.9 930.4,898 932,898.1 933.6,898 935.2,897.6 936.8,897.4 938.4,897.6 940,897.9 941.6,898.1 943.2,898 944.9,898.2 946.5,897.9 948.1,897.9 949.7,898.2 951.3,897.6 952.9,897.4 954.5,897.6 956.1,898.2 957.7,898 959.3,898.1 960.9,897.8 962.5,898 964.1,897.3 965.7,897.2 967.3,898.2 968.9,898.1 970.5,898.1 972.1,897.9 973.8,898.3 975.4,898.1 977,898 978.6,898 980.2,898 981.8,898.1 983.4,898.2 985,898.3 986.6,898 988.2,898.3 989.8,898 991.4,897.6 993,897.8 994.6,898 996.2,897.9 997.8,898.1 999.4,897.7 1001,897.4 1002.7,896.8 1004.3,897 1005.9,897.6 1007.5,898.3 1009.1,898.1 1010.7,898 1012.3,898.1 1013.9,898.3 1015.5,898" stroke="#dbb14c"/>
<path d="M148.5,897.5 150.1,897.5 151.7,897.7 153.3,897.7 154.9,897.2 156.5,896.6 158.1,897.4 159.7,897.4 161.3,897.5 162.9,897 164.6,897.5 166.2,897.7 167.8,897.2 169.4,897.2 171,897.5 172.6,897.3 174.2,897.3 175.8,897.1 177.4,897.1 179,897.5 180.6,897 182.2,896.8 183.8,897.4 185.4,897.6 187,897.4 188.6,897.4 190.2,897.5 191.8,897.1 193.5,897.3 195.1,897.1 196.7,896.2 198.3,896.7 199.9,897 201.5,896.9 203.1,896.4 204.7,896.7 206.3,896.9 207.9,897.2 209.5,897 211.1,897 212.7,896.9 214.3,896.9 215.9,897.1 217.5,896.9 219.1,897.1 220.8,897.2 222.4,897.3 224,896.9 225.6,897 227.2,897.2 228.8,897 230.4,897.1 232,896.8 233.6,896.8 235.2,896.5 236.8,896.5 238.4,896.9 240,897 241.6,897 243.2,896.7 244.8,897 246.4,896.8 248,896.7 249.7,896.7 251.3,895.7 252.9,895.8 254.5,896.1 256.1,896.2 257.7,896.7 259.3,896.4 260.9,896 262.5,896 264.1,896.6 265.7,896.5 267.3,896.6 268.9,896.5 270.5,896.5 272.1,896.5 273.7,896.6 275.3,896.3 276.9,895.6 278.5,895.7 280.2,896.3 281.8,895.9 283.4,896.3 285,895.9 286.6,895.9 288.2,896.3 289.8,896.4 291.4,896.3 293,895.8 294.6,896.2 296.2,896.1 297.8,896 299.4,895.7 301,895.6 302.6,896 304.2,896.1 305.8,895.8 307.4,895.7 309.1,895.4 310.7,895.9 312.3,895.4 313.9,895.4 315.5,895.4 317.1,894.6 318.7,894.4 320.3,894.8 321.9,894.5 323.5,895.2 325.1,895.7 326.7,895 328.3,895.4 329.9,895.3 331.5,895.1 333.1,895.2 334.7,895.2 336.4,895.1 338,895 339.6,895.1 341.2,894.9 342.8,894.8 344.4,894.8 346,894.8 347.6,894.7 349.2,894 350.8,894.5 352.4,894.6 354,894.7 355.6,894.6 357.2,894.2 358.8,893.9 360.4,894.1 362,894.2 363.6,893.9 365.2,894.2 366.9,894.1 368.5,893.6 370.1,893.9 371.7,893.8 373.3,893.7 374.9,893.7 376.5,893.7 378.1,893.4 379.7,893.3 381.3,893.6 382.9,893.4 384.5,893.4 386.1,893 387.7,892.9 389.3,892.9 390.9,893 392.5,892.8 394.1,892.7 395.8,892.8 397.4,892.4 399,892.5 400.6,892.3 402.2,892.3 403.8,892 405.4,892 407,891.9 408.6,891.7 410.2,891 411.8,891.4 413.4,891.3 415,891 416.6,890.7 418.2,890 419.8,889.9 421.4,890.4 423.1,890.7 424.7,890.3 426.3,890.2 427.9,889.9 429.5,889.9 431.1,889.3 432.7,889.2 434.3,889 435.9,889.1 437.5,889 439.1,888.6 440.7,888 442.3,888.5 443.9,888.3 445.5,887.8 447.1,887.4 448.7,887.3 450.3,886.8 451.9,886.8 453.6,886.5 455.2,886.3 456.8,885.7 458.4,885.4 460,884.7 461.6,884.8 463.2,884.3 464.8,884.2 466.4,884 468,883.3 469.6,882.8 471.2,882.5 472.8,882.1 474.4,882 476,881.1 477.6,880.8 479.2,880.2 480.9,880.1 482.5,878.6 484.1,878.6 485.7,877.9 487.3,877.2 488.9,876.8 490.5,876.1 492.1,875.2 493.7,874.3 495.3,873.5 496.9,872.5 498.5,871.4 500.1,870.2 501.7,868.8 503.3,867.7 504.9,865.9 506.5,863.9 508.1,862.4 509.8,860.4 511.4,858.8 513,856.3 514.6,853.9 516.2,850.4 517.8,847 519.4,843 521,838.5 522.6,833.7 524.2,828 525.8,820.8 527.4,812.4 529,801.8 530.6,789.3 532.2,773.7 533.8,754.2 535.4,732.2 537,710.4 538.7,694.5 540.3,694.1 541.9,718.2 543.5,749.6 545.1,776.3 546.7,796.6 548.3,811.8 549.9,823.5 551.5,832.3 553.1,839.6 554.7,844.7 556.3,848.8 557.9,853.7 559.5,857.8 561.1,860.6 562.7,863.3 564.3,865.7 565.9,867.4 567.5,869.2 569.2,870.8 570.8,872.2 572.4,873.7 574,874.9 575.6,875.7 577.2,877.1 578.8,878.1 580.4,878.7 582,878.8 583.6,879.7 585.2,880.9 586.8,881.7 588.4,882.2 590,882.7 591.6,883.2 593.2,883.8 594.8,884.2 596.5,884.3 598.1,884.8 599.7,884.9 601.3,885.9 602.9,886.3 604.5,886.6 606.1,886.3 607.7,887 609.3,886.9 610.9,887 612.5,887.7 614.1,888.2 615.7,888.7 617.3,888.7 618.9,888.4 620.5,889.1 622.1,889.1 623.7,889.5 625.4,889.9 627,889.8 628.6,890.1 630.2,889.8 631.8,889.2 633.4,890 635,889.9 636.6,889.8 638.2,890.4 639.8,890.6 641.4,891.2 643,891.5 644.6,891.6 646.2,892.1 647.8,891.8 649.4,891.8 651,892.1 652.6,892.4 654.2,892.4 655.9,892.5 657.5,892.9 659.1,892.8 660.7,893 662.3,893.3 663.9,893.2 665.5,893.3 667.1,893.2 668.7,893.2 670.3,893.6 671.9,893.2 673.5,893.1 675.1,893.6 676.7,893.7 678.3,893.7 679.9,893.7 681.5,894.1 683.1,894.2 684.8,893.7 686.4,893.6 688,894 689.6,894.4 691.2,894.5 692.8,894.3 694.4,894.8 696,894.7 697.6,894.4 699.2,894.4 700.8,894.7 702.4,894.8 704,895.2 705.6,894.8 707.2,894.9 708.8,894.7 710.4,894.3 712.1,894.3 713.7,894.4 715.3,895 716.9,894.9 718.5,895.6 720.1,895.7 721.7,895.4 723.3,895.4 724.9,895.2 726.5,895.6 728.1,895.7 729.7,895.5 731.3,895.9 732.9,895.5 734.5,895.6 736.1,896.1 737.7,896.1 739.3,895.8 741,895.4 742.6,895.4 744.2,895.9 745.8,896.1 747.4,895.9 749,895 750.6,895.2 752.2,895.6 753.8,895.7 755.4,896.4 757,896.4 758.6,896.1 760.2,896 761.8,896.1 763.4,896.4 765,896.3 766.6,896.2 768.2,896.5 769.9,896.6 771.5,896.8 773.1,896.5 774.7,896.6 776.3,896.4 777.9,896.4 779.5,896.7 781.1,896.6 782.7,896.8 784.3,896.8 785.9,896.8 787.5,897 789.1,896.7 790.7,896.6 792.3,896.6 793.9,896.9 795.5,896.8 797.1,896.6 798.8,896.7 800.4,896.9 802,896.7 803.6,896.6 805.2,896.4 806.8,896 808.4,897 810,896.9 811.6,897 813.2,897.1 814.8,896.9 816.4,896.5 818,896.5 819.6,896.7 821.2,896.8 822.8,896.9 824.4,897.4 826,896.8 827.6,897.1 829.3,897.1 830.9,897.3 832.5,897.1 834.1,896.9 835.7,897.1 837.3,896.7 838.9,896.8 840.5,897 842.1,897.1 843.7,897.4 845.3,897.4 846.9,897.5 848.5,897.4 850.1,897.5 851.7,897.6 853.3,897.4 854.9,897.3 856.5,896.8 858.2,896.9 859.8,897 861.4,897.6 863,897.5 864.6,897.1 866.2,896.8 867.8,897.5 869.4,897.7 871,897.6 872.6,897.3 874.2,897.3 875.8,897 877.4,897.6 879,897.5 880.6,897.7 882.2,897.6 883.8,897.5 885.4,897.2 887.1,897 888.7,896.6 890.3,897.4 891.9,897.6 893.5,897.8 895.1,897.5 896.7,897.8 898.3,897.7 899.9,897.6 901.5,897.5 903.1,897.8 904.7,897.6 906.3,897.6 907.9,897.7 909.5,897.6 911.1,897.7 912.7,897.2 914.4,897.1 916,897.2 917.6,897.9 919.2,897 920.8,896.8 922.4,896.8 924,897.3 925.6,897.9 927.2,897.2 928.8,896.6 930.4,897.1 932,897.4 933.6,897.7 935.2,897.1 936.8,897.4 938.4,897.8 940,897.9 941.6,897.8 943.2,897.6 944.9,897.2 946.5,897.1 948.1,897.5 949.7,897.4 951.3,897.4 952.9,897.6 954.5,897.4 956.1,897.4 957.7,897.4 959.3,898 960.9,898 962.5,897.8 964.1,897.8 965.7,897.6 967.3,897.1 968.9,897.2 970.5,897 972.1,897.3 973.8,897.6 975.4,897.1 977,897.7 978.6,897.7 980.2,897.1 981.8,897.1 983.4,897.6 985,898 986.6,897.3 988.2,897.6 989.8,897.8 991.4,898 993,898.1 994.6,898.1 996.2,897.8 997.8,896.6 999.4,897.3 1001,896.7 1002.7,896.9 1004.3,897.8 1005.9,897.7 1007.5,898.1 1009.1,897.8 1010.7,898.2 1012.3,898 1013.9,897.9 1015.5,898.2" stroke="#71397c"/>
<path d="M148.5,897.6 150.1,896.9 151.7,896.7 153.3,897 154.9,897.3 156.5,897.2 158.1,897.6 159.7,897.7 161.3,897.5 162.9,896.7 164.6,896.7 166.2,897.1 167.8,897.4 169.4,897.2 171,896.9 172.6,896.7 174.2,896.8 175.8,897.6 177.4,897.7 179,897.4 180.6,897.5 182.2,897.1 183.8,896.9 185.4,897.3 187,896.8 188.6,896.8 190.2,896.8 191.8,896.9 193.5,897.2 195.1,896.8 196.7,897.5 198.3,897 199.9,897.5 201.5,897 203.1,897.6 204.7,897 206.3,897.5 207.9,897.1 209.5,897.2 211.1,897.5 212.7,897.4 214.3,897.5 215.9,897.5 217.5,897 219.1,897.2 220.8,897.1 222.4,896.9 224,897.4 225.6,897.3 227.2,896.6 228.8,896.6 230.4,897.1 232,897.3 233.6,897.4 235.2,897.3 236.8,897.3 238.4,897.3 240,897.2 241.6,897.1 243.2,897.2 244.8,896.8 246.4,897.1 248,896.8 249.7,895.8 251.3,896 252.9,895.5 254.5,896.1 256.1,897.1 257.7,896.4 259.3,896.1 260.9,896.5 262.5,896.8 264.1,897 265.7,896.6 267.3,896.5 268.9,896.7 270.5,896.6 272.1,897 273.7,896.9 275.3,897 276.9,896.6 278.5,896.7 280.2,896.8 281.8,896.8 283.4,896.7 285,896.8 286.6,896.4 288.2,896.3 289.8,896.8 291.4,896.7 293,896.8 294.6,896.2 296.2,896.3 297.8,895.7 299.4,895.6 301,896.7 302.6,896.4 304.2,896.7 305.8,896.7 307.4,895.8 309.1,896 310.7,895.9 312.3,896.5 313.9,896.5 315.5,896.5 317.1,896.5 318.7,895.8 320.3,896.3 321.9,896.1 323.5,895.8 325.1,896.1 326.7,896.3 328.3,896 329.9,896.1 331.5,895.9 333.1,895.3 334.7,896.1 336.4,896 338,895.8 339.6,895.8 341.2,895.9 342.8,895.8 344.4,895.7 346,895.4 347.6,895 349.2,894.8 350.8,894.2 352.4,894.7 354,894.9 355.6,895.5 357.2,895.5 358.8,895.1 360.4,894.7 362,894.6 363.6,894.9 365.2,895.3 366.9,895.2 368.5,895.3 370.1,895.3 371.7,895.2 373.3,895.2 374.9,894.7 376.5,895.1 378.1,895.1 379.7,894.9 381.3,894.5 382.9,895 384.5,894.4 386.1,894.6 387.7,894.9 389.3,894.2 390.9,894.5 392.5,894.4 394.1,894.5 395.8,893.9 397.4,893.4 399,893.6 400.6,893.5 402.2,894.2 403.8,894.2 405.4,894.1 407,894 408.6,893.9 410.2,893.9 411.8,893.7 413.4,893.8 415,893.6 416.6,893.4 418.2,893.3 419.8,893.1 421.4,892.5 423.1,891.9 424.7,892.2 426.3,891.8 427.9,892 429.5,892.3 431.1,892.4 432.7,892.6 434.3,892.1 435.9,892.5 437.5,892.3 439.1,892 440.7,891.4 442.3,891.5 443.9,891.5 445.5,891.5 447.1,891.1 448.7,891.5 450.3,891.3 451.9,891.2 453.6,890.7 455.2,890.2 456.8,889.9 458.4,890 460,890.3 461.6,890 463.2,889.9 464.8,889.5 466.4,888.8 468,888.9 469.6,888.5 471.2,888.4 472.8,888.6 474.4,888.1 476,887.8 477.6,887.5 479.2,886.8 480.9,887 482.5,887.2 484.1,887 485.7,886.7 487.3,886.6 488.9,886.2 490.5,885.5 492.1,885.2 493.7,884.7 495.3,884 496.9,883.8 498.5,883.2 500.1,882.7 501.7,882.7 503.3,882.2 504.9,881.6 506.5,881.2 508.1,880.5 509.8,879.6 511.4,879.1 513,878.5 514.6,877.6 516.2,876.9 517.8,875.5 519.4,874.6 521,873.4 522.6,871.9 524.2,870.9 525.8,869 527.4,867.7 529,865.3 530.6,863.4 532.2,860.8 533.8,858 535.4,854.2 537,850.4 538.7,845.7 540.3,840.3 541.9,833.6 543.5,825 545.1,813.8 546.7,798.4 548.3,777.5 549.9,747.1 551.5,704.9 553.1,657.8 554.7,640.9 556.3,677.3 557.9,725.1 559.5,761.7 561.1,787.3 562.7,805.8 564.3,819.3 565.9,829.8 567.5,837.5 569.2,843.6 570.8,849.1 572.4,853.4 574,857.6 575.6,860.3 577.2,862.9 578.8,865 580.4,866.8 582,868.6 583.6,870.5 585.2,872.2 586.8,874 588.4,875.1 590,876.4 591.6,877.3 593.2,878.3 594.8,879.1 596.5,879.4 598.1,880.8 599.7,880.7 601.3,882.1 602.9,882.1 604.5,882.8 606.1,883.3 607.7,883.8 609.3,884.6 610.9,884.8 612.5,885.5 614.1,885.2 615.7,885.9 617.3,886.4 618.9,886.4 620.5,887 622.1,887.3 623.7,887.3 625.4,887.9 627,888.4 628.6,888.7 630.2,889.1 631.8,889.2 633.4,889.6 635,889.9 636.6,889.6 638.2,890 639.8,890.1 641.4,889.7 643,890.2 644.6,890.3 646.2,890.6 647.8,890.9 649.4,891.2 651,891.4 652.6,891.1 654.2,891.6 655.9,891.7 657.5,891.6 659.1,892.3 660.7,891.9 662.3,892.5 663.9,892.7 665.5,892.3 667.1,891.5 668.7,892.6 670.3,892.7 671.9,893 673.5,893.3 675.1,893.4 676.7,893.2 678.3,893.2 679.9,893.5 681.5,893.7 683.1,893.7 684.8,893.7 686.4,893.9 688,893.6 689.6,893.6 691.2,893.9 692.8,894.1 694.4,893.5 696,893.8 697.6,893.6 699.2,894.8 700.8,894.3 702.4,894.2 704,893.3 705.6,894 707.2,894 708.8,894.2 710.4,895.2 712.1,894.9 713.7,895.2 715.3,895.4 716.9,894.9 718.5,895.5 720.1,895.4 721.7,895.1 723.3,895.5 724.9,895.5 726.5,895.3 728.1,895.6 729.7,895.8 731.3,895.4 732.9,895.7 734.5,895.9 736.1,895.8 737.7,895.7 739.3,895.8 741,895.7 742.6,896.1 744.2,895.6 745.8,895.8 747.4,896.2 749,896.2 750.6,896.3 752.2,896.4 753.8,896.1 755.4,895.9 757,896.1 758.6,896.3 760.2,896.5 761.8,896.3 763.4,896.5 765,896.6 766.6,896.7 768.2,896.1 769.9,896.7 771.5,896.6 773.1,896 774.7,896 776.3,895.4 777.9,895.8 779.5,896.4 781.1,896.7 782.7,896.8 784.3,896.6 785.9,896.8 787.5,896.9 789.1,897 790.7,896.8 792.3,896.9 793.9,896.5 795.5,896.8 797.1,897.1 798.8,896.8 800.4,896.9 802,897 803.6,896.9 805.2,896.9 806.8,896.8 808.4,896.7 810,897 811.6,896.6 813.2,897.3 814.8,896.5 816.4,896.7 818,896 819.6,896.3 821.2,897 822.8,896.8 824.4,897 826,897.1 827.6,897.4 829.3,897.2 830.9,896.7 832.5,896.7 834.1,896.7 835.7,897.1 837.3,897.1 838.9,897.2 840.5,897.6 842.1,897.4 843.7,897.2 845.3,897.6 846.9,897.2 848.5,896.9 850.1,896.8 851.7,897.3 853.3,897.5 854.9,897.3 856.5,897.5 858.2,897.5 859.8,897.6 861.4,897.4 863,897.7 864.6,897.1 866.2,897 867.8,897 869.4,897.7 871,897.2 872.6,896.8 874.2,897.1 875.8,897.4 877.4,897.8 879,897.4 880.6,896.9 882.2,896.8 883.8,896.5 885.4,897 887.1,897.3 888.7,897.4 890.3,897.3 891.9,897.4 893.5,897.2 895.1,897.1 896.7,897.5 898.3,897.8 899.9,897.6 901.5,897.8 903.1,897.5 904.7,897 906.3,897 907.9,897.9 909.5,897.6 911.1,897.6 912.7,897.4 914.4,897.2 916,897.7 917.6,897.7 919.2,898 920.8,897.6 922.4,898 924,897.6 925.6,897.6 927.2,897.9 928.8,897.7 930.4,897.9 932,897.7 933.6,898 935.2,897.6 936.8,897.9 938.4,897.6 940,897.7 941.6,897.9 943.2,897.4 944.9,897.5 946.5,897.9 948.1,898 949.7,897.7 951.3,897.9 952.9,897.3 954.5,897.2 956.1,897.3 957.7,897 959.3,897.2 960.9,897.4 962.5,897.4 964.1,897.7 965.7,897.7 967.3,897.3 968.9,897.4 970.5,897.4 972.1,898 973.8,897.9 975.4,898.1 977,898.1 978.6,897.9 980.2,897.5 981.8,897.9 983.4,897.4 985,898.1 986.6,897.7 988.2,898.2 989.8,898 991.4,898 993,898.1 994.6,898 996.2,897.8 997.8,897.7 999.4,898.1 1001,898.1 1002.7,897.9 1004.3,897.8 1005.9,897.8 1007.5,897.8 1009.1,897.6 1010.7,897.3 1012.3,897 1013.9,897.1 1015.5,897.7" stroke="#7ea34c"/>
<path d="M148.5,897.6 150.1,897.3 151.7,896.9 153.3,897 154.9,897.6 156.5,897.3 158.1,897.6 159.7,897.5 161.3,896.9 162.9,897.1 164.6,897.5 166.2,897.4 167.8,897.5 169.4,897.2 171,897.3 172.6,897.5 174.2,897.3 175.8,897 177.4,897.4 179,896.9 180.6,896.6 182.2,897.3 183.8,897.5 185.4,896.8 187,896.5 188.6,896.8 190.2,897 191.8,897.1 193.5,897.4 195.1,896.9 196.7,897.3 198.3,897.3 199.9,896.6 201.5,897 203.1,897.3 204.7,897.3 206.3,896.8 207.9,896.7 209.5,896.4 211.1,896.4 212.7,896.7 214.3,896.8 215.9,897.1 217.5,897 219.1,897 220.8,896.9 222.4,896.9 224,896.5 225.6,895.9 227.2,896.1 228.8,896.2 230.4,896.1 232,896.7 233.6,896.7 235.2,897 236.8,896.9 238.4,897 240,896.6 241.6,896.7 243.2,897.1 244.8,896.9 246.4,896.3 248,896.5 249.7,897.1 251.3,897 252.9,896.5 254.5,896.8 256.1,897 257.7,896.3 259.3,896.3 260.9,896.8 262.5,897 264.1,896.6 265.7,896.7 267.3,896.7 268.9,896.6 270.5,896.4 272.1,896.5 273.7,896.6 275.3,896.4 276.9,896.6 278.5,896.2 280.2,896.4 281.8,896.5 283.4,896.3 285,896.4 286.6,896.6 288.2,896 289.8,896.2 291.4,895.5 293,895.8 294.6,896 296.2,895.9 297.8,896 299.4,895.8 301,896.1 302.6,896.2 304.2,895.9 305.8,896.2 307.4,896.2 309.1,895.7 310.7,896.4 312.3,896 313.9,895.9 315.5,896 317.1,895.9 318.7,895.7 320.3,895.8 321.9,895.8 323.5,896 325.1,896 326.7,895.9 328.3,895.7 329.9,895.3 331.5,895.6 333.1,895.8 334.7,895.8 336.4,895.6 338,895.7 339.6,895.6 341.2,895.4 342.8,895.3 344.4,894.4 346,894.5 347.6,894.6 349.2,895.1 350.8,895.7 352.4,895.7 354,895.5 355.6,895.4 357.2,895.2 358.8,894.6 360.4,895 362,895 363.6,894.6 365.2,895.4 366.9,894.9 368.5,895 370.1,894.8 371.7,894.9 373.3,895 374.9,894.8 376.5,894.9 378.1,894.7 379.7,894.7 381.3,894.5 382.9,894.8 384.5,894.6 386.1,894.1 387.7,894.1 389.3,894.3 390.9,894.6 392.5,894.2 394.1,894.5 395.8,894.2 397.4,893.8 399,894 400.6,893.4 402.2,893.5 403.8,894.1 405.4,894.2 407,893.8 408.6,894 410.2,893.4 411.8,892.8 413.4,892.4 415,891.8 416.6,892.4 418.2,892.1 419.8,892.5 421.4,893.4 423.1,893.2 424.7,892.5 426.3,892.8 427.9,892.9 429.5,893.1 431.1,892.6 432.7,892.6 434.3,892 435.9,891.7 437.5,892.5 439.1,892.7 440.7,891.6 442.3,890.9 443.9,891.8 445.5,892.1 447.1,892.1 448.7,891.8 450.3,891.3 451.9,890.9 453.6,891.5 455.2,891.3 456.8,891.4 458.4,891.1 460,891.4 461.6,891.2 463.2,890.5 464.8,890.3 466.4,889.8 468,890.2 469.6,890.5 471.2,890.5 472.8,889.9 474.4,890.1 476,890.1 477.6,889.9 479.2,889.1 480.9,888.9 482.5,888.6 484.1,889.4 485.7,888.7 487.3,888.5 488.9,888.1 490.5,888.5 492.1,888.6 493.7,888.2 495.3,887.9 496.9,887.8 498.5,887.9 500.1,887.5 501.7,887.4 503.3,887 504.9,886.3 506.5,885.9 508.1,885.6 509.8,885.8 511.4,886 513,885.8 514.6,884.9 516.2,884.6 517.8,884.2 519.4,883.8 521,883.7 522.6,883.5 524.2,883.9 525.8,883.4 527.4,882.8 529,882 530.6,881.4 532.2,880.9 533.8,880.7 535.4,880.9 537,880.9 538.7,880.6 540.3,880.1 541.9,879.8 543.5,879 545.1,878.6 546.7,877.7 548.3,877.1 549.9,876.7 551.5,876.4 553.1,875.8 554.7,875.4 556.3,874.6 557.9,874.2 559.5,873.3 561.1,872.7 562.7,871.5 564.3,870.4 565.9,869.1 567.5,868.2 569.2,867.8 570.8,866.7 572.4,865.6 574,864.1 575.6,863 577.2,860.7 578.8,859.3 580.4,857.8 582,856.6 583.6,854.9 585.2,852.6 586.8,850.6 588.4,848.3 590,845.7 591.6,842.3 593.2,839.2 594.8,836 596.5,831.9 598.1,826.6 599.7,822.3 601.3,816.9 602.9,811.1 604.5,804.6 606.1,797.4 607.7,790.6 609.3,783.9 610.9,777.8 612.5,772.2 614.1,768.6 615.7,767.7 617.3,769.4 618.9,772.8 620.5,778.9 622.1,785.8 623.7,793.2 625.4,800 627,806.9 628.6,813.7 630.2,819.4 631.8,824.4 633.4,828.7 635,833.4 636.6,837.8 638.2,840.9 639.8,844.8 641.4,847.5 643,850.2 644.6,852.2 646.2,854.8 647.8,857.1 649.4,858.9 651,860.7 652.6,861.9 654.2,863.5 655.9,865 657.5,866.5 659.1,867.4 660.7,868.7 662.3,869.8 663.9,870.9 665.5,871.7 667.1,872.8 668.7,873.2 670.3,874.1 671.9,875.1 673.5,875.9 675.1,876.1 676.7,877 678.3,877.5 679.9,878.1 681.5,879 683.1,879.1 684.8,879.9 686.4,880.3 688,881.1 689.6,881.3 691.2,881.9 692.8,882.4 694.4,882.2 696,882.5 697.6,882.9 699.2,882.8 700.8,883.8 702.4,884.6 704,884.6 705.6,884.6 707.2,885.1 708.8,885.2 710.4,885.7 712.1,886.4 713.7,886.7 715.3,886.8 716.9,886.6 718.5,886.9 720.1,887.3 721.7,886.8 723.3,887.5 724.9,887.8 726.5,888 728.1,887.4 729.7,887.5 731.3,888.6 732.9,889.1 734.5,888.9 736.1,889.5 737.7,889.2 739.3,889.4 741,890 742.6,890.4 744.2,890.2 745.8,889.6 747.4,889.8 749,890 750.6,890.6 752.2,891.3 753.8,891.1 755.4,891.4 757,891.6 758.6,891.7 760.2,891.8 761.8,892 763.4,892.1 765,892 766.6,891.9 768.2,891.7 769.9,892 771.5,892 773.1,892.3 774.7,892.7 776.3,892.5 777.9,892.7 779.5,893.1 781.1,893 782.7,892.9 784.3,892.4 785.9,892.6 787.5,892.6 789.1,893 790.7,893.2 792.3,893.8 793.9,893.6 795.5,893.9 797.1,893.8 798.8,893.9 800.4,894.2 802,894 803.6,894.2 805.2,893.7 806.8,894.1 808.4,894.5 810,893.8 811.6,894.3 813.2,894.1 814.8,894.2 816.4,894.3 818,894.2 819.6,894.8 821.2,894.6 822.8,894.5 824.4,894.1 826,895.1 827.6,895.2 829.3,895.2 830.9,895.3 832.5,895.2 834.1,895.2 835.7,895.4 837.3,895.1 838.9,895.3 840.5,894.8 842.1,894.9 843.7,895.1 845.3,895.2 846.9,895.8 848.5,895.4 850.1,895.1 851.7,895 853.3,895.2 854.9,895.7 856.5,895.5 858.2,895.8 859.8,896 861.4,895.5 863,894.9 864.6,895.4 866.2,895.5 867.8,895.6 869.4,895.7 871,895.8 872.6,895.8 874.2,896.4 875.8,896.1 877.4,896.3 879,896.5 880.6,896.1 882.2,896.2 883.8,895.8 885.4,896.3 887.1,896.6 888.7,896.3 890.3,896.2 891.9,896.5 893.5,896.1 895.1,896.1 896.7,896.4 898.3,896.3 899.9,895.7 901.5,895.9 903.1,895.9 904.7,896.3 906.3,896.1 907.9,896.3 909.5,896.1 911.1,896.2 912.7,896.8 914.4,896.5 916,896.8 917.6,896.4 919.2,896.3 920.8,896 922.4,896.3 924,897 925.6,896.8 927.2,896.5 928.8,896 930.4,895.9 932,895.9 933.6,896.5 935.2,896.8 936.8,897 938.4,897.2 940,897.2 941.6,897.1 943.2,896.9 944.9,896.9 946.5,896.9 948.1,897.1 949.7,896.9 951.3,897.4 952.9,897 954.5,896.9 956.1,896.7 957.7,897 959.3,897 960.9,896.9 962.5,897 964.1,897.1 965.7,897 967.3,897.2 968.9,897.2 970.5,897.3 972.1,897.3 973.8,897.2 975.4,897.5 977,897.4 978.6,896.7 980.2,896.5 981.8,896.2 983.4,896.5 985,897.2 986.6,897.4 988.2,897.3 989.8,897 991.4,896.9 993,896.9 994.6,897 996.2,897.3 997.8,897.5 999.4,897.7 1001,897.6 1002.7,897.3 1004.3,897.3 1005.9,897.7 1007.5,897.6 1009.1,897.3 1010.7,897.5 1012.3,897.3 1013.9,897.7 1015.5,897.5" stroke="#66b6d7"/>
<path d="M148.5,898.1 150.1,898 151.7,897.8 153.3,898 154.9,897.7 156.5,897.5 158.1,897.6 159.7,897.7 161.3,897.8 162.9,898.1 164.6,897.9 166.2,897.6 167.8,897.7 169.4,897.2 171,898.1 172.6,897.7 174.2,896.8 175.8,896.6 177.4,897.3 179,897.8 180.6,898.1 182.2,897.7 183.8,897.6 185.4,897.1 187,897.3 188.6,897.7 190.2,897.6 191.8,897.5 193.5,897.9 195.1,898.1 196.7,897.8 198.3,897 199.9,897.7 201.5,898.1 203.1,897.9 204.7,897.4 206.3,898 207.9,898 209.5,898 211.1,898 212.7,898.1 214.3,898 215.9,897.9 217.5,898 219.1,897.7 220.8,897.6 222.4,897.5 224,897.4 225.6,897.7 227.2,897.8 228.8,897.8 230.4,897.9 232,898.1 233.6,898.1 235.2,897.7 236.8,897.8 238.4,897.6 240,897.3 241.6,897.5 243.2,897.4 244.8,898.1 246.4,897.9 248,898 249.7,898.1 251.3,897.7 252.9,898.1 254.5,897.4 256.1,897.4 257.7,897.8 259.3,897.7 260.9,897.9 262.5,897.7 264.1,897.9 265.7,897.9 267.3,897.8 268.9,897.8 270.5,898 272.1,897.6 273.7,897.9 275.3,897.9 276.9,897.6 278.5,897.5 280.2,897.3 281.8,897.6 283.4,897.4 285,897.4 286.6,897.9 288.2,897.8 289.8,897.4 291.4,897.2 293,897.2 294.6,896.6 296.2,896.6 297.8,896.5 299.4,896.5 301,897 302.6,897.5 304.2,897.9 305.8,897.7 307.4,897.3 309.1,897.5 310.7,896.9 312.3,897.6 313.9,897.8 315.5,897.3 317.1,897.6 318.7,896.9 320.3,896.8 321.9,897.4 323.5,897.6 325.1,897.8 326.7,897.7 328.3,897.8 329.9,897.8 331.5,897.4 333.1,897.4 334.7,897.6 336.4,897.2 338,897.2 339.6,896.8 341.2,897.3 342.8,897.7 344.4,897.6 346,897.7 347.6,897 349.2,897.1 350.8,897.2 352.4,897.4 354,897.7 355.6,897.8 357.2,897.6 358.8,897.5 360.4,897.4 362,897 363.6,897 365.2,897.3 366.9,897.2 368.5,897.4 370.1,897.7 371.7,897.6 373.3,897.5 374.9,897.5 376.5,897.5 378.1,897.7 379.7,897.6 381.3,897.6 382.9,897.6 384.5,897.4 386.1,897.2 387.7,897.2 389.3,897.1 390.9,897.4 392.5,897.6 394.1,897.4 395.8,897.4 397.4,897.5 399,897.5 400.6,897.5 402.2,897.4 403.8,897.1 405.4,897.4 407,897.4 408.6,897.3 410.2,896.8 411.8,897.4 413.4,897.5 415,897.3 416.6,896.8 418.2,897 419.8,897.4 421.4,897.4 423.1,897.1 424.7,896.9 426.3,897.3 427.9,897.1 429.5,897.3 431.1,897.5 432.7,897 434.3,896.6 435.9,896.9 437.5,896.7 439.1,896.3 440.7,897 442.3,896.9 443.9,897 445.5,897.1 447.1,897.1 448.7,897.2 450.3,897.3 451.9,897 453.6,897.1 455.2,897.1 456.8,897 458.4,896.7 460,896.2 461.6,896.4 463.2,897.1 464.8,897.2 466.4,896.5 468,896.7 469.6,897.1 471.2,896.9 472.8,896.7 474.4,896.9 476,897 477.6,896.7 479.2,896.2 480.9,896 482.5,896.8 484.1,896.9 485.7,896.3 487.3,896.6 488.9,896.8 490.5,896.9 492.1,896.9 493.7,896.8 495.3,896.7 496.9,896.9 498.5,896.7 500.1,896.9 501.7,896.5 503.3,896.4 504.9,896.6 506.5,896.3 508.1,896.4 509.8,895.8 511.4,895.9 513,895.7 514.6,896.6 516.2,896.4 517.8,896 519.4,896.4 521,896.5 522.6,896.6 524.2,896.3 525.8,896.5 527.4,896 529,896.2 530.6,896.2 532.2,896.5 533.8,896 535.4,896.4 537,896 538.7,895.6 540.3,895.5 541.9,895.4 543.5,895.6 545.1,896.1 546.7,896.2 548.3,895.9 549.9,895.8 551.5,895.5 553.1,894.9 554.7,895.5 556.3,895.5 557.9,895 559.5,895.5 561.1,895.1 562.7,895.3 564.3,895.5 565.9,895.4 567.5,895.5 569.2,895.8 570.8,895.7 572.4,895.6 574,895.7 575.6,895.3 577.2,895.2 578.8,895.1 580.4,895 582,895 583.6,895 585.2,894.6 586.8,894.5 588.4,894.6 590,894.7 591.6,895.1 593.2,894.9 594.8,894.9 596.5,894.4 598.1,894.7 599.7,895 601.3,894.5 602.9,893.5 604.5,894.4 606.1,894.1 607.7,894.7 609.3,894.6 610.9,894.3 612.5,894.7 614.1,894.3 615.7,894.6 617.3,894.1 618.9,894.4 620.5,894.4 622.1,894.4 623.7,893.9 625.4,894.3 627,894 628.6,894 630.2,893.5 631.8,893.7 633.4,893.7 635,893.6 636.6,893.8 638.2,893.5 639.8,893.3 641.4,893.5 643,893.2 644.6,892.9 646.2,893 647.8,892.6 649.4,892.5 651,892.8 652.6,892.6 654.2,892.1 655.9,892.6 657.5,892.2 659.1,892.4 660.7,892.4 662.3,892.4 663.9,891.6 665.5,891.4 667.1,891.7 668.7,891.1 670.3,891.7 671.9,891.7 673.5,891.7 675.1,891.1 676.7,891.6 678.3,891.1 679.9,890.9 681.5,891.1 683.1,890.4 684.8,890.5 686.4,890.1 688,890.4 689.6,890.2 691.2,889.4 692.8,890.2 694.4,889.9 696,889.4 697.6,889.1 699.2,889.7 700.8,888.9 702.4,889 704,889 705.6,888.9 707.2,888.6 708.8,888.2 710.4,887.4 712.1,887.5 713.7,887.3 715.3,887.4 716.9,887.6 718.5,887.3 720.1,886.7 721.7,886.3 723.3,885.6 724.9,885.4 726.5,885.7 728.1,885.8 729.7,885.1 731.3,884.7 732.9,884.7 734.5,884.5 736.1,884.3 737.7,884.1 739.3,883.4 741,883.4 742.6,882.9 744.2,882.2 745.8,882 747.4,881.6 749,881.5 750.6,880.8 752.2,880.3 753.8,879.4 755.4,879.2 757,878.8 758.6,878.5 760.2,877.8 761.8,876.8 763.4,876.6 765,875.7 766.6,874.7 768.2,874.8 769.9,873.9 771.5,872.7 773.1,871.4 774.7,870.8 776.3,870 777.9,868.8 779.5,868.2 781.1,866.9 782.7,865.3 784.3,864.2 785.9,862.6 787.5,860.7 789.1,858.5 790.7,857.3 792.3,854.9 793.9,852.2 795.5,849.6 797.1,846.6 798.8,843.3 800.4,840.2 802,835.9 803.6,831.5 805.2,826.5 806.8,820.4 808.4,812.9 810,805.8 811.6,797.2 813.2,788.2 814.8,778.9 816.4,769.3 818,761.5 819.6,755.7 821.2,754.5 822.8,757.3 824.4,763.8 826,773.7 827.6,783.8 829.3,793.5 830.9,802.8 832.5,810.8 834.1,817.9 835.7,824.5 837.3,829.9 838.9,834.5 840.5,838.7 842.1,842.3 843.7,846.4 845.3,849.7 846.9,852.5 848.5,854.2 850.1,856.5 851.7,858.9 853.3,860.5 854.9,862.9 856.5,863.8 858.2,865.6 859.8,866.5 861.4,868.1 863,869.7 864.6,870.7 866.2,871.6 867.8,872.4 869.4,873.8 871,874.8 872.6,875.1 874.2,875.5 875.8,876 877.4,876.8 879,877.8 880.6,878.3 882.2,878.9 883.8,879.6 885.4,879.9 887.1,880.6 888.7,881.6 890.3,882 891.9,882.3 893.5,883 895.1,883 896.7,883.2 898.3,883.8 899.9,884.1 901.5,884.4 903.1,885.1 904.7,885.5 906.3,885.7 907.9,885.8 909.5,886.1 911.1,886.3 912.7,886.6 914.4,886.2 916,886.3 917.6,887.2 919.2,887.9 920.8,887.9 922.4,887.9 924,888.1 925.6,888.7 927.2,888.8 928.8,889.2 930.4,889.2 932,889.6 933.6,889.8 935.2,889.6 936.8,889.5 938.4,890.3 940,890.3 941.6,889.5 943.2,889.5 944.9,889.7 946.5,890.2 948.1,891.2 949.7,891 951.3,890.8 952.9,891 954.5,891.8 956.1,891.7 957.7,891.5 959.3,891.9 960.9,891.5 962.5,890.9 964.1,891.6 965.7,891.4 967.3,891.8 968.9,892.8 970.5,892.6 972.1,892.4 973.8,892 975.4,892 977,892.1 978.6,891.8 980.2,893.1 981.8,893.1 983.4,893.3 985,893.1 986.6,893.8 988.2,893.4 989.8,893.7 991.4,893.9 993,894 994.6,894.2 996.2,893.6 997.8,893.9 999.4,893.8 1001,893.6 1002.7,893.6 1004.3,893.6 1005.9,893.6 1007.5,893.8 1009.1,893.9 1010.7,893.9 1012.3,894.4 1013.9,895 1015.5,895" stroke="#852235"/>
<path d="M148.5,897.7 150.1,898 151.7,898 153.3,898.2 154.9,898.2 156.5,898.1 158.1,897.7 159.7,897.5 161.3,897.5 162.9,897.9 164.6,898.1 166.2,898.3 167.8,898.1 169.4,898.1 171,898.3 172.6,897.9 174.2,897.9 175.8,897.8 177.4,898.1 179,898.2 180.6,898.2 182.2,898.1 183.8,898 185.4,898.1 187,897.4 188.6,897.5 190.2,897.6 191.8,897.4 193.5,897.9 195.1,897.4 196.7,897.2 198.3,897.1 199.9,897.5 201.5,898.1 203.1,897.9 204.7,897.8 206.3,897.9 207.9,897.4 209.5,898.1 211.1,898 212.7,898 214.3,898.3 215.9,897.7 217.5,898.1 219.1,898.2 220.8,897.8 222.4,897.7 224,897 225.6,896.9 227.2,897.5 228.8,897.7 230.4,897.8 232,897.9 233.6,898.2 235.2,897.6 236.8,897.8 238.4,898 240,897.8 241.6,897.8 243.2,897.9 244.8,897.9 246.4,898.2 248,898.2 249.7,897.8 251.3,897.8 252.9,897.7 254.5,897.4 256.1,897.8 257.7,897.4 259.3,897.2 260.9,897.8 262.5,897.8 264.1,897.9 265.7,897.4 267.3,897.3 268.9,897.3 270.5,897.5 272.1,897.8 273.7,897.9 275.3,897.8 276.9,897.9 278.5,898.1 280.2,898.1 281.8,898 283.4,897.7 285,897.5 286.6,897.6 288.2,897.3 289.8,898.1 291.4,897.6 293,897.4 294.6,897.5 296.2,897.6 297.8,897.8 299.4,898.2 301,897.9 302.6,897.5 304.2,897 305.8,897.3 307.4,898 309.1,897.6 310.7,897 312.3,897.1 313.9,897.2 315.5,897.6 317.1,897.9 318.7,898 320.3,898.1 321.9,897.7 323.5,897.4 325.1,897.4 326.7,897.4 328.3,898 329.9,898.1 331.5,898.1 333.1,897.9 334.7,898.1 336.4,897.6 338,897.5 339.6,897.9 341.2,897.7 342.8,897.9 344.4,897.6 346,897.1 347.6,897.3 349.2,897.4 350.8,898 352.4,897.9 354,898 355.6,897.9 357.2,898 358.8,897.6 360.4,897.1 362,896.8 363.6,896.6 365.2,897.8 366.9,897.7 368.5,898 370.1,897.9 371.7,897.7 373.3,897.4 374.9,897.3 376.5,897.5 378.1,897.8 379.7,898 381.3,897.8 382.9,897.8 384.5,898 386.1,897.7 387.7,897.8 389.3,897.5 390.9,897.4 392.5,897.2 394.1,897.8 395.8,897.8 397.4,897.9 399,897.1 400.6,897.3 402.2,897.6 403.8,897.6 405.4,898 407,897.7 408.6,897.9 410.2,897.8 411.8,897.8 413.4,897.8 415,897.6 416.6,897.5 418.2,897.5 419.8,897.1 421.4,897.4 423.1,897.5 424.7,897.9 426.3,896.6 427.9,896.4 429.5,896.4 431.1,896.8 432.7,897.3 434.3,897.2 435.9,897.4 437.5,897.4 439.1,897.5 440.7,897.6 442.3,897.9 443.9,897.8 445.5,897.2 447.1,897.3 448.7,897.9 450.3,897.6 451.9,897.7 453.6,897.8 455.2,897.4 456.8,897.8 458.4,897.9 460,897.4 461.6,896.1 463.2,896.6 464.8,897.5 466.4,897.6 468,897.2 469.6,897.6 471.2,897.5 472.8,897 474.4,897.7 476,897.3 477.6,896.9 479.2,896.9 480.9,897 482.5,897.4 484.1,897.6 485.7,897.6 487.3,897.4 488.9,897.5 490.5,897.3 492.1,897.3 493.7,897.6 495.3,897.2 496.9,897.7 498.5,897.6 500.1,897.6 501.7,897 503.3,897.5 504.9,897.5 506.5,897.3 508.1,897.6 509.8,897.5 511.4,897.6 513,897.6 514.6,897.3 516.2,897.5 517.8,897.4 519.4,897.6 521,897.5 522.6,897.2 524.2,897.5 525.8,897.5 527.4,897.1 529,897.1 530.6,897 532.2,897.1 533.8,897 535.4,897.3 537,897.3 538.7,897.4 540.3,897 541.9,896.8 543.5,896.8 545.1,896.8 546.7,896.7 548.3,897.2 549.9,897.3 551.5,897.1 553.1,896.9 554.7,896.4 556.3,896.2 557.9,896.7 559.5,896.5 561.1,897.1 562.7,897.3 564.3,897 565.9,897.1 567.5,896.8 569.2,896.7 570.8,897.2 572.4,897.1 574,897.3 575.6,896.6 577.2,896.7 578.8,897 580.4,897.2 582,897.1 583.6,896.7 585.2,896.3 586.8,895.3 588.4,895.4 590,896 591.6,896.9 593.2,896.7 594.8,896.4 596.5,896.5 598.1,896.9 599.7,896.8 601.3,896.9 602.9,896.9 604.5,896.4 606.1,895.9 607.7,896.7 609.3,896.6 610.9,896.8 612.5,896.2 614.1,896.8 615.7,896.5 617.3,896.8 618.9,896.8 620.5,896.4 622.1,896 623.7,895.5 625.4,895.9 627,896 628.6,896.2 630.2,896 631.8,895.9 633.4,896 635,896.6 636.6,896.6 638.2,896.4 639.8,896.2 641.4,896.4 643,895.9 644.6,895.9 646.2,896 647.8,896.4 649.4,895.7 651,896.2 652.6,896.4 654.2,895.9 655.9,895.3 657.5,895.2 659.1,895.6 660.7,896.1 662.3,896 663.9,895.9 665.5,896.1 667.1,896.1 668.7,896 670.3,895.3 671.9,895.5 673.5,895.2 675.1,895.9 676.7,895.5 678.3,895.5 679.9,895.5 681.5,895.7 683.1,895.6 684.8,895.8 686.4,895.7 688,894.9 689.6,894.4 691.2,894.6 692.8,894.7 694.4,894.8 696,895.5 697.6,895.5 699.2,895.4 700.8,895.3 702.4,895.2 704,894.9 705.6,895.1 707.2,895 708.8,895.2 710.4,895.1 712.1,895.1 713.7,894.4 715.3,894.4 716.9,894.9 718.5,894.3 720.1,894.9 721.7,894.8 723.3,894.2 724.9,894.7 726.5,893.8 728.1,894.4 729.7,894.2 731.3,893.7 732.9,893.8 734.5,894.2 736.1,894.2 737.7,893.6 739.3,893.6 741,893.7 742.6,893.7 744.2,893.7 745.8,893.9 747.4,893.8 749,893.7 750.6,892.7 752.2,893 753.8,893.2 755.4,893.3 757,893.2 758.6,893.1 760.2,892.9 761.8,893.2 763.4,892.8 765,892.6 766.6,892.6 768.2,892.6 769.9,892.4 771.5,892.3 773.1,892.3 774.7,892.3 776.3,891.9 777.9,892.2 779.5,891.8 781.1,891.5 782.7,891.9 784.3,891.5 785.9,891.1 787.5,890.4 789.1,890.3 790.7,889.6 792.3,890 793.9,891 795.5,890.7 797.1,890.2 798.8,890 800.4,890.2 802,890.2 803.6,889.7 805.2,889.7 806.8,889.1 808.4,889.5 810,889 811.6,888.9 813.2,888.6 814.8,888.9 816.4,888.2 818,887.8 819.6,887.7 821.2,887.8 822.8,887.6 824.4,887.3 826,887.3 827.6,887.3 829.3,886.9 830.9,886.3 832.5,886.5 834.1,886.1 835.7,885.7 837.3,885.7 838.9,885.4 840.5,884.9 842.1,884.7 843.7,883.9 845.3,884.2 846.9,883.8 848.5,883.3 850.1,883.1 851.7,882.3 853.3,882.2 854.9,881.7 856.5,881.4 858.2,880.5 859.8,880.1 861.4,879.9 863,879 864.6,878.2 866.2,877.5 867.8,877.5 869.4,876.8 871,876.1 872.6,875.4 874.2,873.9 875.8,873.7 877.4,872.9 879,872.1 880.6,870.6 882.2,869.8 883.8,868.9 885.4,867.2 887.1,865.7 888.7,864.5 890.3,863.5 891.9,861.1 893.5,858.8 895.1,856.5 896.7,855.2 898.3,852.8 899.9,850.4 901.5,846.8 903.1,843.8 904.7,839.7 906.3,834.9 907.9,829.4 909.5,823.3 911.1,816.7 912.7,809.3 914.4,800.3 916,789.6 917.6,778.3 919.2,766.1 920.8,755.4 922.4,747.8 924,745.5 925.6,748.6 927.2,756.5 928.8,767 930.4,778.4 932,789.9 933.6,800.3 935.2,809.9 936.8,818.4 938.4,825 940,831 941.6,835.8 943.2,840.4 944.9,844.7 946.5,848.3 948.1,851.6 949.7,853.6 951.3,856 952.9,858.7 954.5,860.4 956.1,862.8 957.7,864.4 959.3,866 960.9,867.5 962.5,868.8 964.1,870.2 965.7,870.7 967.3,871.6 968.9,872.5 970.5,874.2 972.1,874 973.8,874.7 975.4,875.6 977,876.7 978.6,878 980.2,878.6 981.8,878.6 983.4,879.2 985,879.9 986.6,880.4 988.2,881.4 989.8,882 991.4,881.8 993,882.3 994.6,882.8 996.2,883 997.8,883.4 999.4,884 1001,884.4 1002.7,885.3 1004.3,884.6 1005.9,884.9 1007.5,885.6 1009.1,885.4 1010.7,886.2 1012.3,886.8 1013.9,886.8 1015.5,887.3" stroke="#1b6a9f"/>
</g>
<text x="148.0" y="532.8" text-anchor="middle" class="tk">100</text><text x="308.6" y="532.8" text-anchor="middle" class="tk">150</text><text x="469.1" y="532.8" text-anchor="middle" class="tk">200</text><text x="629.7" y="532.8" text-anchor="middle" class="tk">250</text><text x="790.2" y="532.8" text-anchor="middle" class="tk">300</text><text x="950.8" y="532.8" text-anchor="middle" class="tk">350</text><text x="140.8" y="510.5" text-anchor="end" class="tk">0</text><text x="140.8" y="453.7" text-anchor="end" class="tk">0.005</text><text x="140.8" y="396.9" text-anchor="end" class="tk">0.01</text><text x="140.8" y="340.1" text-anchor="end" class="tk">0.015</text><text x="140.8" y="283.3" text-anchor="end" class="tk">0.02</text><text x="140.8" y="226.5" text-anchor="end" class="tk">0.025</text><text x="582" y="207.0" text-anchor="middle" class="ti">Measured Data</text><text x="582" y="567.5" text-anchor="middle" class="lb">Frequency [Hz]</text><text transform="translate(68.6,358.5) rotate(-90)" text-anchor="middle" class="lb">Amplitude</text>
<text x="148.0" y="930.8" text-anchor="middle" class="tk">100</text><text x="308.6" y="930.8" text-anchor="middle" class="tk">150</text><text x="469.1" y="930.8" text-anchor="middle" class="tk">200</text><text x="629.7" y="930.8" text-anchor="middle" class="tk">250</text><text x="790.2" y="930.8" text-anchor="middle" class="tk">300</text><text x="950.8" y="930.8" text-anchor="middle" class="tk">350</text><text x="140.8" y="908.5" text-anchor="end" class="tk">0</text><text x="140.8" y="837.5" text-anchor="end" class="tk">0.1</text><text x="140.8" y="766.5" text-anchor="end" class="tk">0.2</text><text x="140.8" y="695.5" text-anchor="end" class="tk">0.3</text><text x="140.8" y="624.5" text-anchor="end" class="tk">0.4</text><text x="582" y="605.0" text-anchor="middle" class="ti">Modal Response Estimates</text><text x="582" y="965.5" text-anchor="middle" class="lb">Frequency [Hz]</text><text transform="translate(95.4,756.5) rotate(-90)" text-anchor="middle" class="lb">Amplitude</text>
<text x="1108" y="982.5" text-anchor="end" style="font:17.5px 'Liberation Sans','Noto Sans CJK SC',sans-serif;fill:#a0a0a0">CSDN @<tspan style="font-size:19.8px">荔枝科研社</tspan></text>
</svg>
<svg width="1124" height="160" viewBox="0 0 1124 160" style="position:absolute;left:0;top:0">
<defs>
<linearGradient id="gPage" x1="0" y1="0" x2="1" y2="1"><stop offset="0" stop-color="#ffffff"/><stop offset="1" stop-color="#cfdcf5"/></linearGradient>
<linearGradient id="gFold" x1="0" y1="0" x2="0" y2="1"><stop offset="0" stop-color="#f7e48a"/><stop offset="1" stop-color="#e0b030"/></linearGradient>
<linearGradient id="gFold2" x1="0" y1="0" x2="0" y2="1"><stop offset="0" stop-color="#fdf3b0"/><stop offset="1" stop-color="#f0c84a"/></linearGradient>
<linearGradient id="gSave" x1="0" y1="0" x2="1" y2="1"><stop offset="0" stop-color="#7a7ae0"/><stop offset="1" stop-color="#3a3aa0"/></linearGradient>
<linearGradient id="gCb" x1="0" y1="0" x2="0" y2="1"><stop offset="0" stop-color="#8680da"/><stop offset=".3" stop-color="#86c0f0"/><stop offset=".55" stop-color="#a4e8e0"/><stop offset=".78" stop-color="#f4ea94"/><stop offset="1" stop-color="#f4ac88"/></linearGradient>
<radialGradient id="gLens" cx=".4" cy=".35" r=".7"><stop offset="0" stop-color="#eefaff"/><stop offset="1" stop-color="#b8dcf0"/></radialGradient>
<linearGradient id="gHandle" x1="0" y1="0" x2="1" y2="0"><stop offset="0" stop-color="#f0b050"/><stop offset="1" stop-color="#c87818"/></linearGradient>
<linearGradient id="gMat" x1="0" y1="0" x2="1" y2="0"><stop offset="0" stop-color="#b02010"/><stop offset=".5" stop-color="#f08020"/><stop offset="1" stop-color="#f8c040"/></linearGradient>
<linearGradient id="gRot" x1="0" y1="0" x2="1" y2="0"><stop offset="0" stop-color="#c0c8d8"/><stop offset=".35" stop-color="#5a74ac"/><stop offset="1" stop-color="#34508e"/></linearGradient>
</defs>
<!-- title icon -->
<g transform="translate(-0.500,-1)">
<rect x="17.5" y="15.5" width="28" height="29" fill="#fafcfd" stroke="#9aa4ad"/>
<rect x="17.5" y="15.5" width="28" height="3" fill="#a8cdf0" stroke="#3f5f7a"/>
<path d="M20,33 L29,28 L32,31 L26,37 Z" fill="#3f7fbf"/>
<path d="M26,37 L29,28 C31,24 32,21 33.5,21 C35.5,21 37,29 41,37 C38,34 36,33 34,36 C32,39 31,41 30,41 C29,40 28,38 26,37 Z" fill="url(#gMat)"/>
<path d="M33.5,21 C35.5,21 37,29 41,37 C38,34 36.5,33 35,34.5 C35,30 34.5,25 33.5,21Z" fill="#8c2a10" opacity=".55"/>
</g>
<!-- menu dock arrow -->
<path d="M1101.8,75.300 L1104.300,73.800 L1110.200,78.200 L1112.700,74 L1114.200,74 L1114.200,84 L1104,84 L1104,82.500 L1108.300,81.300 L1102.300,77.600 Z" fill="#000"/><circle cx="1100.700" cy="76.900" r="1" fill="#222"/>
<!-- separators -->
<g fill="#a0a0a0"><rect x="189" y="103" width="1" height="46"/><rect x="243" y="103" width="1" height="46"/><rect x="550" y="103" width="1" height="46"/><rect x="604" y="103" width="1" height="46"/><rect x="704" y="103" width="1" height="46"/></g>
<!-- 1 new -->
<g>
<path d="M15.500,112.500 h17 l8,8 v19.500 h-25 z" fill="#7484b0" transform="translate(1.200,1.200)" opacity=".8"/>
<path d="M14.500,110.500 h17.500 l8,8 v20.500 h-25.500 z" fill="url(#gPage)" stroke="#7f93c4" stroke-width="1.3"/>
<path d="M32,110.500 v8 h8 z" fill="#9aa8d8" stroke="#6f80b8" stroke-width="1"/>
<g fill="#f08030"><circle cx="14.500" cy="115" r="4.200"/><path d="M14.500,108 l1.500,3h-3z M14.500,122 l1.500,-3h-3z M7.500,115 l3,1.500v-3z M21.500,115 l-3,1.500v-3z M9.600,110.100 l3.200,1.100 -2.100,2.100z M19.400,110.100 l-3.200,1.100 2.100,2.100z M9.600,119.900 l3.200,-1.100 -2.100,-2.100z M19.400,119.900 l-3.200,-1.100 2.100,-2.100z"/></g>
<circle cx="14.500" cy="115" r="2.200" fill="#f8d090"/>
</g>
<!-- 2 open -->
<g>
<path d="M71.500,115.500 c2,-4.500 8,-5 11,-.5" fill="none" stroke="#8aa4cc" stroke-width="2"/>
<path d="M85.500,112 v7.500 h-6.500 z" fill="#5f84bc"/>
<path d="M56,117 q0,-2.500 2.500,-2.500 h7 l3,3 h11.500 q2.500,0 2.500,2.500 v17 q0,2.500 -2.500,2.500 h-21.500 q-2.500,0 -2.500,-2.500 z" fill="url(#gFold)" stroke="#c89a28" stroke-width="1"/>
<path d="M60.500,123 h23 q2.500,0 2,2.500 l-2.500,12 q-.5,2 -3,2 h-21.500 q-2.500,0 -2,-2.500 l2,-12 q.3,-2 2,-2z" fill="url(#gFold2)" stroke="#c89a28" stroke-width="1"/>
</g>
<!-- 3 save -->
<g>
<path d="M104,111.500 h26.500 l2.500,2.500 v26.500 h-29 z" fill="#30308a" opacity=".35" transform="translate(1,1)"/>
<path d="M103.500,111 h26.500 l2.500,2.500 v26.500 h-29 z" fill="url(#gSave)" stroke="#34349a" stroke-width="1"/>
<rect x="108.800" y="112" width="16" height="12.800" fill="#f6f8fd" stroke="#9a9ae0" stroke-width=".8"/>
<path d="M108.800,124.800 l16,-12.800 v12.800z" fill="#dfe3f3" opacity=".8"/>
<rect x="112" y="129.500" width="10.500" height="8.500" fill="#eeeef8"/>
<rect x="112" y="129.500" width="4.500" height="7" fill="#15153a"/>
</g>
<!-- 4 print -->
<g>
<path d="M151.500,110 l14.500,-.7 l1.500,10.500 l-13.500,1.500 z" fill="#c4e0f8" stroke="#9ab8dc" stroke-width=".8"/>
<path d="M151.500,110 l14.500,-.7 l.5,3.500 l-14.300,1 z" fill="#eef6fd"/>
<path d="M149,124 l5,-4 l14,-1.500 l9,5.500 v9 l-12,8 l-16,-6 z" fill="#b4b4b4" stroke="#8a8a8a" stroke-width="1"/>
<path d="M149,124 l16,5.500 l12,-5.500 l-9,-5.500 l-14,1.500 z" fill="#dedede" stroke="#9a9a9a" stroke-width=".8"/>
<path d="M149,128.500 l16,6 l12,-6 M149,132 l16,6 l12,-6.500" fill="none" stroke="#8e8e8e" stroke-width="1"/>
<path d="M153,137 l12,4.500 l9,-5.500" fill="none" stroke="#ececec" stroke-width="1.600"/>
</g>
<!-- 5 arrow -->
<path d="M211.500,112 v22.500 l5,-4.500 l4.300,9.300 l3.700,-1.800 l-4.300,-9 h7 z" fill="#fff" stroke="#111" stroke-width="2" stroke-linejoin="miter"/>
<!-- 6 zoom in -->
<g>
<path d="M274,127 l10.500,10.500" stroke="#b87820" stroke-width="5.500" stroke-linecap="round"/>
<path d="M274,126.500 l10,10" stroke="#f0b050" stroke-width="3" stroke-linecap="round"/>
<circle cx="266.200" cy="119.200" r="9.800" fill="url(#gLens)" stroke="#a8a0d8" stroke-width="2.200"/>
<path d="M261,119.200 h10.500 M266.200,114 v10.500" stroke="#28389a" stroke-width="2.200"/>
</g>
<!-- 7 zoom out -->
<g>
<path d="M320,127 l10.500,10.500" stroke="#b87820" stroke-width="5.500" stroke-linecap="round"/>
<path d="M320,126.500 l10,10" stroke="#f0b050" stroke-width="3" stroke-linecap="round"/>
<circle cx="311.900" cy="118.800" r="9.800" fill="url(#gLens)" stroke="#a8a0d8" stroke-width="2.200"/>
<path d="M306.500,118.800 h10.500" stroke="#28389a" stroke-width="2.200"/>
</g>
<!-- 8 hand -->
<g transform="translate(-52,0) scale(1.150,1)">
<path d="M356,140 c-1,-5 -5,-8 -8,-13 c-2,-3 1,-5 3,-3 l3,3 c-1,-6 -2,-9 -1.500,-12 c.5,-3 3.500,-2.500 4,0 l1.500,7 c0,-5 -.5,-9 0,-11 c.5,-2.500 3.500,-2.500 4,0 l1,10 c.5,-4 .5,-7 1.500,-9 c1,-2 3.500,-1.500 3.500,1 l-.5,10 c1,-3 1.500,-5 3,-6 c1.500,-1 3.500,0 3,2.500 c-1,6 -2,11 -4,15 l-1,6 z" fill="#f6dcc0" stroke="#3c50b0" stroke-width="1.500" stroke-linejoin="round"/>
<path d="M356,140 h13" stroke="#f0f0f0" stroke-width="2.500"/><path d="M357.500,122 v6 M362,121 v6 M366.500,122.500 v5" stroke="#3c50b0" stroke-width="1.100" fill="none"/>
</g>
<!-- 9 rotate -->
<g transform="translate(0,1.300)">
<path d="M399.200,114.300 A13.300,13.300 0 1 1 396.300,128.500" fill="none" stroke="url(#gRot)" stroke-width="4.800"/>
<path d="M394,109.500 l10.500,1.500 l-5.500,9.500 z" fill="#4a63a0"/>
<path d="M403.500,122 l6,-2.500 l6,2.500 v7 l-6,3 l-6,-3 z" fill="#d6e6f8" stroke="#3f5894" stroke-width="1.500"/>
<path d="M403.500,122 l6,2.500 l6,-2.500 M409.500,124.500 v7.500" fill="none" stroke="#3f5894" stroke-width="1.500"/>
</g>
<!-- 10 datacursor -->
<g>
<path d="M438.800,113.500 c2,13 12,24 30,26.500" fill="none" stroke="#2222dd" stroke-width="2" stroke-dasharray="5,2.500"/>
<rect x="451" y="111" width="20" height="19" fill="#8a8a58" opacity=".55"/>
<rect x="449.800" y="109.500" width="19.500" height="18.500" fill="#f3f1a4" stroke="#a3a354" stroke-width="1.600"/>
<path d="M453.500,114 h12 M453.500,117.700 h12 M453.500,121.400 h12" stroke="#a8a860" stroke-width="1.500"/>
<path d="M441.500,131.200 h15 M449,123.700 v15" stroke="#111" stroke-width="3.400"/>
</g>
<!-- 11 brush -->
<g>
<path d="M503.500,124 l12.500,-13.500 l4.500,4.300 l-12.500,13.500 z" fill="#5c62c4" stroke="#3c44a0" stroke-width="1"/>
<path d="M507,123 l10.500,-11" stroke="#c8ccf6" stroke-width="1.500" stroke-dasharray="2.500,1.500"/>
<path d="M499.500,127 l4,-3.500 l4,4 l-3.500,4 z" fill="#b0b0b0" stroke="#707070" stroke-width="1"/>
<path d="M488.500,140 c1,-6 5,-11 11,-13 l4.500,4.500 c-2,5 -8,8 -15.500,8.500 z" fill="#505050" stroke="#303030" stroke-width="1"/>
<rect x="508.200" y="129.500" width="10" height="10" fill="#f80010"/>
</g>
<path d="M534,122.500 h10.500 l-5.250,5.500 z" fill="#404040"/>
<!-- 12 link -->
<g>
<rect x="567.500" y="110" width="22" height="20" fill="#dfe8f8" stroke="#384e92" stroke-width="2"/>
<rect x="567.500" y="110" width="22" height="4.500" fill="#3e5498"/>
<rect x="562.500" y="115" width="22" height="20" fill="#eef2fc" stroke="#384e92" stroke-width="2"/>
<rect x="562.500" y="115" width="22" height="4.500" fill="#3e5498"/>
<rect x="565" y="129" width="13.500" height="10" rx="5" fill="none" stroke="#6c82ac" stroke-width="3.400"/>
<rect x="579" y="129" width="13.500" height="10" rx="5" fill="none" stroke="#6c82ac" stroke-width="3.400"/>
<path d="M573,134 h11.500" stroke="#9db0d0" stroke-width="3.400"/>
</g>
<!-- 13 colorbar -->
<rect x="624.500" y="111.500" width="18.500" height="28" fill="#7080a8" opacity=".5"/>
<rect x="623" y="110" width="18.500" height="28" fill="url(#gCb)" stroke="#3f4f8f" stroke-width="1.600"/>
<!-- 14 legend -->
<g>
<rect x="664.500" y="111.500" width="29" height="28" fill="#7080a8" opacity=".5"/>
<rect x="663" y="110" width="29" height="28" fill="#f0f2fc" stroke="#3f4f8f" stroke-width="1.800"/>
<rect x="666.500" y="115" width="9.500" height="8" fill="#e85868"/>
<rect x="666.500" y="127" width="9.500" height="8" fill="#5858e0"/>
<path d="M680,118 h8 M680,130 h8" stroke="#111" stroke-width="2.200"/>
</g>
<!-- 15 gray box -->
<rect x="724" y="117" width="20" height="20" rx="1.500" fill="#b8b8b8"/>
<rect x="722" y="114.500" width="20" height="20" rx="1.500" fill="#969696" stroke="#a8a8a8" stroke-width="1"/>
<!-- 16 plot tools -->
<g>
<rect x="764.500" y="113" width="30" height="27.500" fill="#7080a8" opacity=".5"/>
<rect x="762.500" y="111" width="30" height="28" fill="#4054a0" stroke="#2c3c80" stroke-width="1"/>
<rect x="763" y="111.500" width="29" height="4" fill="#5a70c0"/>
<rect x="769.500" y="117.500" width="16" height="15" fill="#ffffff"/>
<path d="M766,117.500 v15 M789,117.500 v15" stroke="#dfe6f6" stroke-width="3" stroke-dasharray="2.500,1"/>
<path d="M765,135.500 h25" stroke="#c4cee8" stroke-width="2.600" stroke-dasharray="2.500,.8"/>
</g>
</svg>

</body></html>
